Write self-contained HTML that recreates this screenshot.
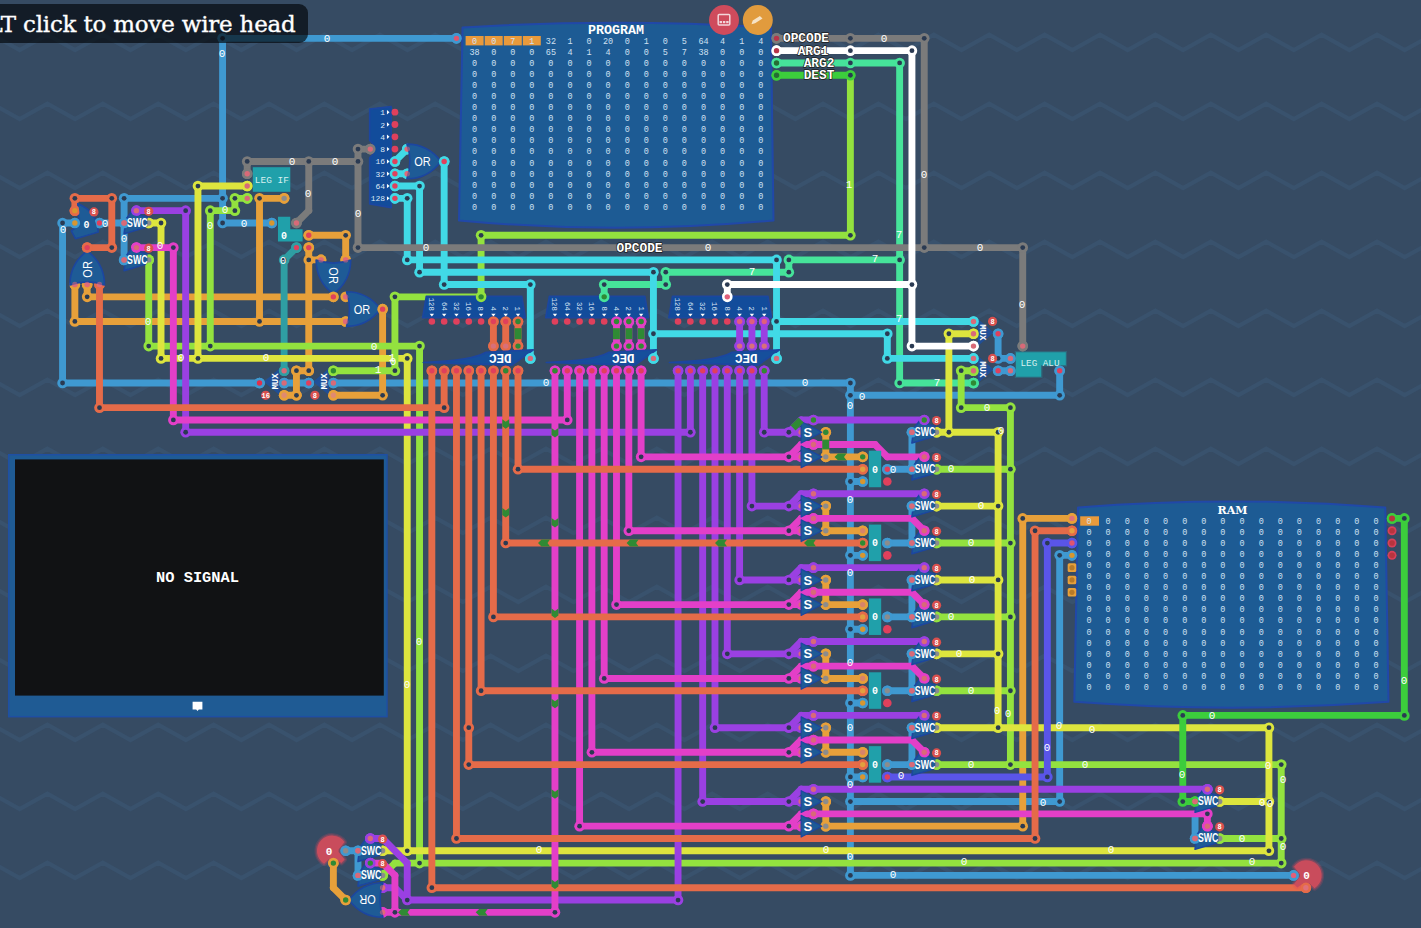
<!DOCTYPE html>
<html><head><meta charset="utf-8"><title>Turing Complete</title>
<style>
html,body{margin:0;padding:0;background:#364b63;overflow:hidden}
body{width:1421px;height:928px;position:relative;font-family:"Liberation Sans",sans-serif}
svg{position:absolute;left:0;top:0;display:block}
.mono{font-family:"Liberation Mono","DejaVu Sans Mono",monospace}
.sans{font-family:"Liberation Sans",sans-serif}
.serif{font-family:"DejaVu Serif","Liberation Serif",serif}
#tip{position:absolute;left:-14px;top:4px;width:322px;height:39px;background:rgba(2,4,8,0.66);border-radius:9px;color:#fff;
font-family:"DejaVu Serif","Liberation Serif",serif;font-size:22.97px;line-height:40px;-webkit-text-stroke:0.35px #fff;white-space:nowrap;box-sizing:border-box;padding-left:1.6px;letter-spacing:-0.2px}
</style></head><body>
<svg width="1421" height="928" viewBox="0 0 1421 928">
<rect width="1421" height="928" fill="#364b63"/>
<g fill="none" stroke="#39526d" stroke-width="4.2" stroke-linejoin="miter"><polyline points="-63.4,-34.3 -35.7,-18.8 -8.0,-34.3 19.7,-18.8 47.4,-34.3 75.1,-18.8 102.8,-34.3 130.5,-18.8 158.2,-34.3 185.9,-18.8 213.6,-34.3 241.3,-18.8 269.0,-34.3 296.7,-18.8 324.4,-34.3 352.1,-18.8 379.8,-34.3 407.5,-18.8 435.2,-34.3 462.9,-18.8 490.6,-34.3 518.3,-18.8 546.0,-34.3 573.7,-18.8 601.4,-34.3 629.1,-18.8 656.8,-34.3 684.5,-18.8 712.2,-34.3 739.9,-18.8 767.6,-34.3 795.3,-18.8 823.0,-34.3 850.7,-18.8 878.4,-34.3 906.1,-18.8 933.8,-34.3 961.5,-18.8 989.2,-34.3 1016.9,-18.8 1044.6,-34.3 1072.3,-18.8 1100.0,-34.3 1127.7,-18.8 1155.4,-34.3 1183.1,-18.8 1210.8,-34.3 1238.5,-18.8 1266.2,-34.3 1293.9,-18.8 1321.6,-34.3 1349.3,-18.8 1377.0,-34.3 1404.7,-18.8 1432.4,-34.3 1460.1,-18.8"/><polyline points="-63.4,34.7 -35.7,50.2 -8.0,34.7 19.7,50.2 47.4,34.7 75.1,50.2 102.8,34.7 130.5,50.2 158.2,34.7 185.9,50.2 213.6,34.7 241.3,50.2 269.0,34.7 296.7,50.2 324.4,34.7 352.1,50.2 379.8,34.7 407.5,50.2 435.2,34.7 462.9,50.2 490.6,34.7 518.3,50.2 546.0,34.7 573.7,50.2 601.4,34.7 629.1,50.2 656.8,34.7 684.5,50.2 712.2,34.7 739.9,50.2 767.6,34.7 795.3,50.2 823.0,34.7 850.7,50.2 878.4,34.7 906.1,50.2 933.8,34.7 961.5,50.2 989.2,34.7 1016.9,50.2 1044.6,34.7 1072.3,50.2 1100.0,34.7 1127.7,50.2 1155.4,34.7 1183.1,50.2 1210.8,34.7 1238.5,50.2 1266.2,34.7 1293.9,50.2 1321.6,34.7 1349.3,50.2 1377.0,34.7 1404.7,50.2 1432.4,34.7 1460.1,50.2"/><polyline points="-63.4,103.7 -35.7,119.2 -8.0,103.7 19.7,119.2 47.4,103.7 75.1,119.2 102.8,103.7 130.5,119.2 158.2,103.7 185.9,119.2 213.6,103.7 241.3,119.2 269.0,103.7 296.7,119.2 324.4,103.7 352.1,119.2 379.8,103.7 407.5,119.2 435.2,103.7 462.9,119.2 490.6,103.7 518.3,119.2 546.0,103.7 573.7,119.2 601.4,103.7 629.1,119.2 656.8,103.7 684.5,119.2 712.2,103.7 739.9,119.2 767.6,103.7 795.3,119.2 823.0,103.7 850.7,119.2 878.4,103.7 906.1,119.2 933.8,103.7 961.5,119.2 989.2,103.7 1016.9,119.2 1044.6,103.7 1072.3,119.2 1100.0,103.7 1127.7,119.2 1155.4,103.7 1183.1,119.2 1210.8,103.7 1238.5,119.2 1266.2,103.7 1293.9,119.2 1321.6,103.7 1349.3,119.2 1377.0,103.7 1404.7,119.2 1432.4,103.7 1460.1,119.2"/><polyline points="-63.4,172.7 -35.7,188.2 -8.0,172.7 19.7,188.2 47.4,172.7 75.1,188.2 102.8,172.7 130.5,188.2 158.2,172.7 185.9,188.2 213.6,172.7 241.3,188.2 269.0,172.7 296.7,188.2 324.4,172.7 352.1,188.2 379.8,172.7 407.5,188.2 435.2,172.7 462.9,188.2 490.6,172.7 518.3,188.2 546.0,172.7 573.7,188.2 601.4,172.7 629.1,188.2 656.8,172.7 684.5,188.2 712.2,172.7 739.9,188.2 767.6,172.7 795.3,188.2 823.0,172.7 850.7,188.2 878.4,172.7 906.1,188.2 933.8,172.7 961.5,188.2 989.2,172.7 1016.9,188.2 1044.6,172.7 1072.3,188.2 1100.0,172.7 1127.7,188.2 1155.4,172.7 1183.1,188.2 1210.8,172.7 1238.5,188.2 1266.2,172.7 1293.9,188.2 1321.6,172.7 1349.3,188.2 1377.0,172.7 1404.7,188.2 1432.4,172.7 1460.1,188.2"/><polyline points="-63.4,241.7 -35.7,257.2 -8.0,241.7 19.7,257.2 47.4,241.7 75.1,257.2 102.8,241.7 130.5,257.2 158.2,241.7 185.9,257.2 213.6,241.7 241.3,257.2 269.0,241.7 296.7,257.2 324.4,241.7 352.1,257.2 379.8,241.7 407.5,257.2 435.2,241.7 462.9,257.2 490.6,241.7 518.3,257.2 546.0,241.7 573.7,257.2 601.4,241.7 629.1,257.2 656.8,241.7 684.5,257.2 712.2,241.7 739.9,257.2 767.6,241.7 795.3,257.2 823.0,241.7 850.7,257.2 878.4,241.7 906.1,257.2 933.8,241.7 961.5,257.2 989.2,241.7 1016.9,257.2 1044.6,241.7 1072.3,257.2 1100.0,241.7 1127.7,257.2 1155.4,241.7 1183.1,257.2 1210.8,241.7 1238.5,257.2 1266.2,241.7 1293.9,257.2 1321.6,241.7 1349.3,257.2 1377.0,241.7 1404.7,257.2 1432.4,241.7 1460.1,257.2"/><polyline points="-63.4,310.7 -35.7,326.2 -8.0,310.7 19.7,326.2 47.4,310.7 75.1,326.2 102.8,310.7 130.5,326.2 158.2,310.7 185.9,326.2 213.6,310.7 241.3,326.2 269.0,310.7 296.7,326.2 324.4,310.7 352.1,326.2 379.8,310.7 407.5,326.2 435.2,310.7 462.9,326.2 490.6,310.7 518.3,326.2 546.0,310.7 573.7,326.2 601.4,310.7 629.1,326.2 656.8,310.7 684.5,326.2 712.2,310.7 739.9,326.2 767.6,310.7 795.3,326.2 823.0,310.7 850.7,326.2 878.4,310.7 906.1,326.2 933.8,310.7 961.5,326.2 989.2,310.7 1016.9,326.2 1044.6,310.7 1072.3,326.2 1100.0,310.7 1127.7,326.2 1155.4,310.7 1183.1,326.2 1210.8,310.7 1238.5,326.2 1266.2,310.7 1293.9,326.2 1321.6,310.7 1349.3,326.2 1377.0,310.7 1404.7,326.2 1432.4,310.7 1460.1,326.2"/><polyline points="-63.4,379.7 -35.7,395.2 -8.0,379.7 19.7,395.2 47.4,379.7 75.1,395.2 102.8,379.7 130.5,395.2 158.2,379.7 185.9,395.2 213.6,379.7 241.3,395.2 269.0,379.7 296.7,395.2 324.4,379.7 352.1,395.2 379.8,379.7 407.5,395.2 435.2,379.7 462.9,395.2 490.6,379.7 518.3,395.2 546.0,379.7 573.7,395.2 601.4,379.7 629.1,395.2 656.8,379.7 684.5,395.2 712.2,379.7 739.9,395.2 767.6,379.7 795.3,395.2 823.0,379.7 850.7,395.2 878.4,379.7 906.1,395.2 933.8,379.7 961.5,395.2 989.2,379.7 1016.9,395.2 1044.6,379.7 1072.3,395.2 1100.0,379.7 1127.7,395.2 1155.4,379.7 1183.1,395.2 1210.8,379.7 1238.5,395.2 1266.2,379.7 1293.9,395.2 1321.6,379.7 1349.3,395.2 1377.0,379.7 1404.7,395.2 1432.4,379.7 1460.1,395.2"/><polyline points="-63.4,448.7 -35.7,464.2 -8.0,448.7 19.7,464.2 47.4,448.7 75.1,464.2 102.8,448.7 130.5,464.2 158.2,448.7 185.9,464.2 213.6,448.7 241.3,464.2 269.0,448.7 296.7,464.2 324.4,448.7 352.1,464.2 379.8,448.7 407.5,464.2 435.2,448.7 462.9,464.2 490.6,448.7 518.3,464.2 546.0,448.7 573.7,464.2 601.4,448.7 629.1,464.2 656.8,448.7 684.5,464.2 712.2,448.7 739.9,464.2 767.6,448.7 795.3,464.2 823.0,448.7 850.7,464.2 878.4,448.7 906.1,464.2 933.8,448.7 961.5,464.2 989.2,448.7 1016.9,464.2 1044.6,448.7 1072.3,464.2 1100.0,448.7 1127.7,464.2 1155.4,448.7 1183.1,464.2 1210.8,448.7 1238.5,464.2 1266.2,448.7 1293.9,464.2 1321.6,448.7 1349.3,464.2 1377.0,448.7 1404.7,464.2 1432.4,448.7 1460.1,464.2"/><polyline points="-63.4,517.7 -35.7,533.2 -8.0,517.7 19.7,533.2 47.4,517.7 75.1,533.2 102.8,517.7 130.5,533.2 158.2,517.7 185.9,533.2 213.6,517.7 241.3,533.2 269.0,517.7 296.7,533.2 324.4,517.7 352.1,533.2 379.8,517.7 407.5,533.2 435.2,517.7 462.9,533.2 490.6,517.7 518.3,533.2 546.0,517.7 573.7,533.2 601.4,517.7 629.1,533.2 656.8,517.7 684.5,533.2 712.2,517.7 739.9,533.2 767.6,517.7 795.3,533.2 823.0,517.7 850.7,533.2 878.4,517.7 906.1,533.2 933.8,517.7 961.5,533.2 989.2,517.7 1016.9,533.2 1044.6,517.7 1072.3,533.2 1100.0,517.7 1127.7,533.2 1155.4,517.7 1183.1,533.2 1210.8,517.7 1238.5,533.2 1266.2,517.7 1293.9,533.2 1321.6,517.7 1349.3,533.2 1377.0,517.7 1404.7,533.2 1432.4,517.7 1460.1,533.2"/><polyline points="-63.4,586.7 -35.7,602.2 -8.0,586.7 19.7,602.2 47.4,586.7 75.1,602.2 102.8,586.7 130.5,602.2 158.2,586.7 185.9,602.2 213.6,586.7 241.3,602.2 269.0,586.7 296.7,602.2 324.4,586.7 352.1,602.2 379.8,586.7 407.5,602.2 435.2,586.7 462.9,602.2 490.6,586.7 518.3,602.2 546.0,586.7 573.7,602.2 601.4,586.7 629.1,602.2 656.8,586.7 684.5,602.2 712.2,586.7 739.9,602.2 767.6,586.7 795.3,602.2 823.0,586.7 850.7,602.2 878.4,586.7 906.1,602.2 933.8,586.7 961.5,602.2 989.2,586.7 1016.9,602.2 1044.6,586.7 1072.3,602.2 1100.0,586.7 1127.7,602.2 1155.4,586.7 1183.1,602.2 1210.8,586.7 1238.5,602.2 1266.2,586.7 1293.9,602.2 1321.6,586.7 1349.3,602.2 1377.0,586.7 1404.7,602.2 1432.4,586.7 1460.1,602.2"/><polyline points="-63.4,655.7 -35.7,671.2 -8.0,655.7 19.7,671.2 47.4,655.7 75.1,671.2 102.8,655.7 130.5,671.2 158.2,655.7 185.9,671.2 213.6,655.7 241.3,671.2 269.0,655.7 296.7,671.2 324.4,655.7 352.1,671.2 379.8,655.7 407.5,671.2 435.2,655.7 462.9,671.2 490.6,655.7 518.3,671.2 546.0,655.7 573.7,671.2 601.4,655.7 629.1,671.2 656.8,655.7 684.5,671.2 712.2,655.7 739.9,671.2 767.6,655.7 795.3,671.2 823.0,655.7 850.7,671.2 878.4,655.7 906.1,671.2 933.8,655.7 961.5,671.2 989.2,655.7 1016.9,671.2 1044.6,655.7 1072.3,671.2 1100.0,655.7 1127.7,671.2 1155.4,655.7 1183.1,671.2 1210.8,655.7 1238.5,671.2 1266.2,655.7 1293.9,671.2 1321.6,655.7 1349.3,671.2 1377.0,655.7 1404.7,671.2 1432.4,655.7 1460.1,671.2"/><polyline points="-63.4,724.7 -35.7,740.2 -8.0,724.7 19.7,740.2 47.4,724.7 75.1,740.2 102.8,724.7 130.5,740.2 158.2,724.7 185.9,740.2 213.6,724.7 241.3,740.2 269.0,724.7 296.7,740.2 324.4,724.7 352.1,740.2 379.8,724.7 407.5,740.2 435.2,724.7 462.9,740.2 490.6,724.7 518.3,740.2 546.0,724.7 573.7,740.2 601.4,724.7 629.1,740.2 656.8,724.7 684.5,740.2 712.2,724.7 739.9,740.2 767.6,724.7 795.3,740.2 823.0,724.7 850.7,740.2 878.4,724.7 906.1,740.2 933.8,724.7 961.5,740.2 989.2,724.7 1016.9,740.2 1044.6,724.7 1072.3,740.2 1100.0,724.7 1127.7,740.2 1155.4,724.7 1183.1,740.2 1210.8,724.7 1238.5,740.2 1266.2,724.7 1293.9,740.2 1321.6,724.7 1349.3,740.2 1377.0,724.7 1404.7,740.2 1432.4,724.7 1460.1,740.2"/><polyline points="-63.4,793.7 -35.7,809.2 -8.0,793.7 19.7,809.2 47.4,793.7 75.1,809.2 102.8,793.7 130.5,809.2 158.2,793.7 185.9,809.2 213.6,793.7 241.3,809.2 269.0,793.7 296.7,809.2 324.4,793.7 352.1,809.2 379.8,793.7 407.5,809.2 435.2,793.7 462.9,809.2 490.6,793.7 518.3,809.2 546.0,793.7 573.7,809.2 601.4,793.7 629.1,809.2 656.8,793.7 684.5,809.2 712.2,793.7 739.9,809.2 767.6,793.7 795.3,809.2 823.0,793.7 850.7,809.2 878.4,793.7 906.1,809.2 933.8,793.7 961.5,809.2 989.2,793.7 1016.9,809.2 1044.6,793.7 1072.3,809.2 1100.0,793.7 1127.7,809.2 1155.4,793.7 1183.1,809.2 1210.8,793.7 1238.5,809.2 1266.2,793.7 1293.9,809.2 1321.6,793.7 1349.3,809.2 1377.0,793.7 1404.7,809.2 1432.4,793.7 1460.1,809.2"/><polyline points="-63.4,862.7 -35.7,878.2 -8.0,862.7 19.7,878.2 47.4,862.7 75.1,878.2 102.8,862.7 130.5,878.2 158.2,862.7 185.9,878.2 213.6,862.7 241.3,878.2 269.0,862.7 296.7,878.2 324.4,862.7 352.1,878.2 379.8,862.7 407.5,878.2 435.2,862.7 462.9,878.2 490.6,862.7 518.3,878.2 546.0,862.7 573.7,878.2 601.4,862.7 629.1,878.2 656.8,862.7 684.5,878.2 712.2,862.7 739.9,878.2 767.6,862.7 795.3,878.2 823.0,862.7 850.7,878.2 878.4,862.7 906.1,878.2 933.8,862.7 961.5,878.2 989.2,862.7 1016.9,878.2 1044.6,862.7 1072.3,878.2 1100.0,862.7 1127.7,878.2 1155.4,862.7 1183.1,878.2 1210.8,862.7 1238.5,878.2 1266.2,862.7 1293.9,878.2 1321.6,862.7 1349.3,878.2 1377.0,862.7 1404.7,878.2 1432.4,862.7 1460.1,878.2"/><polyline points="-63.4,931.7 -35.7,947.2 -8.0,931.7 19.7,947.2 47.4,931.7 75.1,947.2 102.8,931.7 130.5,947.2 158.2,931.7 185.9,947.2 213.6,931.7 241.3,947.2 269.0,931.7 296.7,947.2 324.4,931.7 352.1,947.2 379.8,931.7 407.5,947.2 435.2,931.7 462.9,947.2 490.6,931.7 518.3,947.2 546.0,931.7 573.7,947.2 601.4,931.7 629.1,947.2 656.8,931.7 684.5,947.2 712.2,931.7 739.9,947.2 767.6,931.7 795.3,947.2 823.0,931.7 850.7,947.2 878.4,931.7 906.1,947.2 933.8,931.7 961.5,947.2 989.2,931.7 1016.9,947.2 1044.6,931.7 1072.3,947.2 1100.0,931.7 1127.7,947.2 1155.4,931.7 1183.1,947.2 1210.8,931.7 1238.5,947.2 1266.2,931.7 1293.9,947.2 1321.6,931.7 1349.3,947.2 1377.0,931.7 1404.7,947.2 1432.4,931.7 1460.1,947.2"/></g>
<g fill="none" stroke-width="6.9" stroke-linecap="round">
<path stroke="#3f99d1" d="M456.47 38.33L222.58 38.33"/>
<path stroke="#3f99d1" d="M222.58 38.33L222.58 222.98"/>
<path stroke="#3f99d1" d="M222.58 222.98L271.82 222.98"/>
<path stroke="#3f99d1" d="M222.58 198.36L124.1 198.36"/>
<path stroke="#3f99d1" d="M124.1 198.36L124.1 259.91"/>
<path stroke="#3f99d1" d="M74.86 222.98L62.55 222.98"/>
<path stroke="#3f99d1" d="M62.55 222.98L62.55 383.01"/>
<path stroke="#3f99d1" d="M62.55 383.01L259.51 383.01"/>
<path stroke="#3f99d1" d="M99.48 222.98L124.1 222.98"/>
<path stroke="#3f99d1" d="M284.13 383.01L308.75 383.01"/>
<path stroke="#3f99d1" d="M333.37 383.01L850.39 383.01"/>
<path stroke="#3f99d1" d="M850.39 383.01L850.39 875.41"/>
<path stroke="#3f99d1" d="M850.39 875.41L1293.55 875.41"/>
<path stroke="#3f99d1" d="M850.39 395.32L1059.66 395.32"/>
<path stroke="#3f99d1" d="M1059.66 395.32L1059.66 370.7"/>
<path stroke="#3f99d1" d="M850.39 481.49L862.7 481.49"/>
<path stroke="#3f99d1" d="M887.32 469.18L911.94 469.18"/>
<path stroke="#3f99d1" d="M911.94 432.25L911.94 469.18"/>
<path stroke="#3f99d1" d="M850.39 555.35L862.7 555.35"/>
<path stroke="#3f99d1" d="M887.32 543.04L911.94 543.04"/>
<path stroke="#3f99d1" d="M911.94 506.11L911.94 543.04"/>
<path stroke="#3f99d1" d="M850.39 629.21L862.7 629.21"/>
<path stroke="#3f99d1" d="M887.32 616.9L911.94 616.9"/>
<path stroke="#3f99d1" d="M911.94 579.97L911.94 616.9"/>
<path stroke="#3f99d1" d="M850.39 703.07L862.7 703.07"/>
<path stroke="#3f99d1" d="M887.32 690.76L911.94 690.76"/>
<path stroke="#3f99d1" d="M911.94 653.83L911.94 690.76"/>
<path stroke="#3f99d1" d="M850.39 776.93L862.7 776.93"/>
<path stroke="#3f99d1" d="M887.32 764.62L911.94 764.62"/>
<path stroke="#3f99d1" d="M911.94 727.69L911.94 764.62"/>
<path stroke="#3f99d1" d="M850.39 801.55L1059.66 801.55"/>
<path stroke="#3f99d1" d="M1059.66 801.55L1059.66 555.35"/>
<path stroke="#3f99d1" d="M1059.66 555.35L1071.97 555.35"/>
<path stroke="#3f99d1" d="M998.11 333.77L998.11 358.39"/>
<path stroke="#3f99d1" d="M998.11 358.39L1010.42 358.39"/>
<path stroke="#3f99d1" d="M998.11 370.7L1010.42 370.7"/>
<path stroke="#3f99d1" d="M345.68 850.79L357.99 850.79"/>
<path stroke="#3f99d1" d="M357.99 850.79L357.99 875.41"/>
<path stroke="#3f99d1" d="M1195.07 813.86L1195.07 838.48"/>
<path stroke="#e7a03a" d="M74.86 284.53L74.86 321.46"/>
<path stroke="#e7a03a" d="M74.86 321.46L259.51 321.46"/>
<path stroke="#e7a03a" d="M259.51 321.46L345.68 321.46"/>
<path stroke="#e7a03a" d="M259.51 321.46L259.51 198.36"/>
<path stroke="#e7a03a" d="M259.51 198.36L284.13 198.36"/>
<path stroke="#e7a03a" d="M87.17 284.53L87.17 296.84"/>
<path stroke="#e7a03a" d="M87.17 296.84L333.37 296.84"/>
<path stroke="#e7a03a" d="M308.75 235.29L345.68 235.29"/>
<path stroke="#e7a03a" d="M345.68 235.29L345.68 259.91"/>
<path stroke="#e7a03a" d="M308.75 247.6L308.75 259.91"/>
<path stroke="#e7a03a" d="M308.75 259.91L308.75 370.7"/>
<path stroke="#e7a03a" d="M308.75 370.7L296.44 370.7"/>
<path stroke="#e7a03a" d="M296.44 370.7L296.44 395.32"/>
<path stroke="#e7a03a" d="M296.44 395.32L284.13 395.32"/>
<path stroke="#e7a03a" d="M308.75 259.91L321.06 259.91"/>
<path stroke="#e7a03a" d="M382.61 309.15L382.61 395.32"/>
<path stroke="#e7a03a" d="M382.61 395.32L333.37 395.32"/>
<path stroke="#e7a03a" d="M333.37 863.1L333.37 887.72"/>
<path stroke="#e7a03a" d="M333.37 887.72L345.68 900.03"/>
<path stroke="#e7a03a" d="M1022.73 518.42L1071.97 518.42"/>
<path stroke="#e7a03a" d="M1022.73 518.42L1022.73 826.17"/>
<path stroke="#e7a03a" d="M1022.73 826.17L825.77 826.17"/>
<path stroke="#e7a03a" d="M825.77 432.25L825.77 456.87"/>
<path stroke="#e7a03a" d="M825.77 456.87L862.7 456.87"/>
<path stroke="#e7a03a" d="M825.77 506.11L825.77 530.73"/>
<path stroke="#e7a03a" d="M825.77 530.73L862.7 530.73"/>
<path stroke="#e7a03a" d="M825.77 579.97L825.77 604.59"/>
<path stroke="#e7a03a" d="M825.77 604.59L862.7 604.59"/>
<path stroke="#e7a03a" d="M825.77 653.83L825.77 678.45"/>
<path stroke="#e7a03a" d="M825.77 678.45L862.7 678.45"/>
<path stroke="#e7a03a" d="M825.77 727.69L825.77 752.31"/>
<path stroke="#e7a03a" d="M825.77 752.31L862.7 752.31"/>
<path stroke="#e7a03a" d="M825.77 801.55L825.77 826.17"/>
<path stroke="#2f9ea3" d="M296.44 247.6L284.13 259.91"/>
<path stroke="#2f9ea3" d="M284.13 259.91L284.13 370.7"/>
<path stroke="#46e39a" d="M776.53 62.95L850.39 62.95"/>
<path stroke="#46e39a" d="M850.39 62.95L899.63 62.95"/>
<path stroke="#46e39a" d="M899.63 62.95L899.63 259.91"/>
<path stroke="#46e39a" d="M899.63 259.91L899.63 383.01"/>
<path stroke="#46e39a" d="M899.63 383.01L973.49 383.01"/>
<path stroke="#46e39a" d="M899.63 259.91L788.84 259.91"/>
<path stroke="#46e39a" d="M788.84 259.91L788.84 272.22"/>
<path stroke="#46e39a" d="M788.84 272.22L665.74 272.22"/>
<path stroke="#46e39a" d="M665.74 272.22L665.74 284.53"/>
<path stroke="#46e39a" d="M665.74 284.53L604.19 284.53"/>
<path stroke="#46e39a" d="M604.19 284.53L604.19 296.84"/>
<path stroke="#93e23f" d="M850.39 75.26L850.39 235.29"/>
<path stroke="#93e23f" d="M850.39 235.29L481.09 235.29"/>
<path stroke="#93e23f" d="M481.09 235.29L481.09 296.84"/>
<path stroke="#93e23f" d="M247.2 198.36L234.89 198.36"/>
<path stroke="#93e23f" d="M234.89 198.36L234.89 210.67"/>
<path stroke="#93e23f" d="M234.89 210.67L210.27 210.67"/>
<path stroke="#93e23f" d="M210.27 210.67L210.27 346.08"/>
<path stroke="#93e23f" d="M148.72 259.91L148.72 346.08"/>
<path stroke="#93e23f" d="M148.72 346.08L210.27 346.08"/>
<path stroke="#93e23f" d="M210.27 346.08L419.54 346.08"/>
<path stroke="#93e23f" d="M419.54 346.08L419.54 863.1"/>
<path stroke="#93e23f" d="M382.61 875.41L394.92 863.1"/>
<path stroke="#93e23f" d="M394.92 863.1L419.54 863.1"/>
<path stroke="#93e23f" d="M419.54 863.1L1281.24 863.1"/>
<path stroke="#93e23f" d="M1281.24 863.1L1281.24 838.48"/>
<path stroke="#93e23f" d="M1281.24 838.48L1281.24 764.62"/>
<path stroke="#93e23f" d="M1281.24 764.62L1010.42 764.62"/>
<path stroke="#93e23f" d="M1010.42 764.62L936.56 764.62"/>
<path stroke="#93e23f" d="M1281.24 838.48L1219.69 838.48"/>
<path stroke="#93e23f" d="M973.49 370.7L961.18 370.7"/>
<path stroke="#93e23f" d="M961.18 370.7L961.18 407.63"/>
<path stroke="#93e23f" d="M961.18 407.63L1010.42 407.63"/>
<path stroke="#93e23f" d="M1010.42 407.63L1010.42 469.18"/>
<path stroke="#93e23f" d="M1010.42 469.18L1010.42 543.04"/>
<path stroke="#93e23f" d="M1010.42 543.04L1010.42 616.9"/>
<path stroke="#93e23f" d="M1010.42 616.9L1010.42 690.76"/>
<path stroke="#93e23f" d="M1010.42 690.76L1010.42 764.62"/>
<path stroke="#93e23f" d="M936.56 469.18L1010.42 469.18"/>
<path stroke="#93e23f" d="M936.56 543.04L1010.42 543.04"/>
<path stroke="#93e23f" d="M936.56 616.9L1010.42 616.9"/>
<path stroke="#93e23f" d="M936.56 690.76L1010.42 690.76"/>
<path stroke="#41d9e6" d="M394.92 161.43L407.23 149.12"/>
<path stroke="#41d9e6" d="M394.92 173.74L407.23 173.74"/>
<path stroke="#41d9e6" d="M394.92 186.05L419.54 186.05"/>
<path stroke="#41d9e6" d="M419.54 186.05L419.54 272.22"/>
<path stroke="#41d9e6" d="M419.54 272.22L653.43 272.22"/>
<path stroke="#41d9e6" d="M653.43 272.22L653.43 333.77"/>
<path stroke="#41d9e6" d="M653.43 333.77L653.43 358.39"/>
<path stroke="#41d9e6" d="M653.43 333.77L887.32 333.77"/>
<path stroke="#41d9e6" d="M887.32 333.77L887.32 358.39"/>
<path stroke="#41d9e6" d="M887.32 358.39L973.49 358.39"/>
<path stroke="#41d9e6" d="M394.92 198.36L407.23 198.36"/>
<path stroke="#41d9e6" d="M407.23 198.36L407.23 259.91"/>
<path stroke="#41d9e6" d="M407.23 259.91L776.53 259.91"/>
<path stroke="#41d9e6" d="M776.53 259.91L776.53 321.46"/>
<path stroke="#41d9e6" d="M776.53 321.46L776.53 358.39"/>
<path stroke="#41d9e6" d="M776.53 321.46L973.49 321.46"/>
<path stroke="#41d9e6" d="M444.16 161.43L444.16 284.53"/>
<path stroke="#41d9e6" d="M444.16 284.53L530.33 284.53"/>
<path stroke="#41d9e6" d="M530.33 284.53L530.33 358.39"/>
<path stroke="#dde53e" d="M247.2 186.05L197.96 186.05"/>
<path stroke="#dde53e" d="M197.96 186.05L197.96 358.39"/>
<path stroke="#dde53e" d="M148.72 222.98L161.03 222.98"/>
<path stroke="#dde53e" d="M161.03 222.98L161.03 358.39"/>
<path stroke="#dde53e" d="M161.03 358.39L197.96 358.39"/>
<path stroke="#dde53e" d="M197.96 358.39L407.23 358.39"/>
<path stroke="#dde53e" d="M407.23 358.39L407.23 850.79"/>
<path stroke="#dde53e" d="M382.61 850.79L407.23 850.79"/>
<path stroke="#dde53e" d="M407.23 850.79L1268.93 850.79"/>
<path stroke="#dde53e" d="M1268.93 850.79L1268.93 801.55"/>
<path stroke="#dde53e" d="M1268.93 801.55L1268.93 727.69"/>
<path stroke="#dde53e" d="M1268.93 727.69L998.11 727.69"/>
<path stroke="#dde53e" d="M1219.69 801.55L1268.93 801.55"/>
<path stroke="#dde53e" d="M973.49 333.77L948.87 333.77"/>
<path stroke="#dde53e" d="M948.87 333.77L948.87 432.25"/>
<path stroke="#dde53e" d="M936.56 432.25L948.87 432.25"/>
<path stroke="#dde53e" d="M948.87 432.25L998.11 432.25"/>
<path stroke="#dde53e" d="M998.11 432.25L998.11 506.11"/>
<path stroke="#dde53e" d="M998.11 506.11L998.11 579.97"/>
<path stroke="#dde53e" d="M998.11 579.97L998.11 653.83"/>
<path stroke="#dde53e" d="M998.11 653.83L998.11 727.69"/>
<path stroke="#dde53e" d="M936.56 506.11L998.11 506.11"/>
<path stroke="#dde53e" d="M936.56 579.97L998.11 579.97"/>
<path stroke="#dde53e" d="M936.56 653.83L998.11 653.83"/>
<path stroke="#dde53e" d="M936.56 727.69L998.11 727.69"/>
<path stroke="#93e23f" d="M481.09 296.84L394.92 296.84"/>
<path stroke="#93e23f" d="M394.92 296.84L394.92 370.7"/>
<path stroke="#93e23f" d="M394.92 370.7L333.37 370.7"/>
<path stroke="#3ccd3c" d="M776.53 75.26L850.39 75.26"/>
<path stroke="#3ccd3c" d="M1392.03 518.42L1404.34 518.42"/>
<path stroke="#3ccd3c" d="M1404.34 518.42L1404.34 715.38"/>
<path stroke="#3ccd3c" d="M1404.34 715.38L1182.76 715.38"/>
<path stroke="#3ccd3c" d="M1182.76 715.38L1182.76 801.55"/>
<path stroke="#3ccd3c" d="M1182.76 801.55L1195.07 801.55"/>
<path stroke="#5a55e8" d="M1047.35 543.04L1071.97 543.04"/>
<path stroke="#5a55e8" d="M1047.35 543.04L1047.35 776.93"/>
<path stroke="#5a55e8" d="M1047.35 776.93L887.32 776.93"/>
<path stroke="#9a40e2" d="M136.41 210.67L185.65 210.67"/>
<path stroke="#9a40e2" d="M185.65 210.67L185.65 432.25"/>
<path stroke="#9a40e2" d="M185.65 432.25L690.36 432.25"/>
<path stroke="#9a40e2" d="M690.36 432.25L690.36 370.7"/>
<path stroke="#9a40e2" d="M678.05 370.7L678.05 900.03"/>
<path stroke="#9a40e2" d="M678.05 900.03L407.23 900.03"/>
<path stroke="#9a40e2" d="M407.23 900.03L407.23 863.1"/>
<path stroke="#9a40e2" d="M407.23 863.1L382.61 838.48"/>
<path stroke="#9a40e2" d="M382.61 838.48L370.3 838.48"/>
<path stroke="#9a40e2" d="M382.61 887.72L394.92 887.72"/>
<path stroke="#9a40e2" d="M394.92 887.72L407.23 900.03"/>
<path stroke="#9a40e2" d="M764.22 370.7L764.22 432.25"/>
<path stroke="#9a40e2" d="M764.22 432.25L788.84 432.25"/>
<path stroke="#9a40e2" d="M788.84 432.25L801.15 432.25"/>
<path stroke="#9a40e2" d="M788.84 432.25L801.15 419.94"/>
<path stroke="#9a40e2" d="M801.15 419.94L813.46 419.94"/>
<path stroke="#9a40e2" d="M813.46 419.94L924.25 419.94"/>
<path stroke="#9a40e2" d="M751.91 370.7L751.91 506.11"/>
<path stroke="#9a40e2" d="M751.91 506.11L788.84 506.11"/>
<path stroke="#9a40e2" d="M788.84 506.11L801.15 506.11"/>
<path stroke="#9a40e2" d="M788.84 506.11L801.15 493.8"/>
<path stroke="#9a40e2" d="M801.15 493.8L813.46 493.8"/>
<path stroke="#9a40e2" d="M813.46 493.8L924.25 493.8"/>
<path stroke="#9a40e2" d="M739.6 370.7L739.6 579.97"/>
<path stroke="#9a40e2" d="M739.6 579.97L788.84 579.97"/>
<path stroke="#9a40e2" d="M788.84 579.97L801.15 579.97"/>
<path stroke="#9a40e2" d="M788.84 579.97L801.15 567.66"/>
<path stroke="#9a40e2" d="M801.15 567.66L813.46 567.66"/>
<path stroke="#9a40e2" d="M813.46 567.66L924.25 567.66"/>
<path stroke="#9a40e2" d="M727.29 370.7L727.29 653.83"/>
<path stroke="#9a40e2" d="M727.29 653.83L788.84 653.83"/>
<path stroke="#9a40e2" d="M788.84 653.83L801.15 653.83"/>
<path stroke="#9a40e2" d="M788.84 653.83L801.15 641.52"/>
<path stroke="#9a40e2" d="M801.15 641.52L813.46 641.52"/>
<path stroke="#9a40e2" d="M813.46 641.52L924.25 641.52"/>
<path stroke="#9a40e2" d="M714.98 370.7L714.98 727.69"/>
<path stroke="#9a40e2" d="M714.98 727.69L788.84 727.69"/>
<path stroke="#9a40e2" d="M788.84 727.69L801.15 727.69"/>
<path stroke="#9a40e2" d="M788.84 727.69L801.15 715.38"/>
<path stroke="#9a40e2" d="M801.15 715.38L813.46 715.38"/>
<path stroke="#9a40e2" d="M813.46 715.38L924.25 715.38"/>
<path stroke="#9a40e2" d="M702.67 370.7L702.67 801.55"/>
<path stroke="#9a40e2" d="M702.67 801.55L788.84 801.55"/>
<path stroke="#9a40e2" d="M788.84 801.55L801.15 801.55"/>
<path stroke="#9a40e2" d="M788.84 801.55L801.15 789.24"/>
<path stroke="#9a40e2" d="M801.15 789.24L813.46 789.24"/>
<path stroke="#9a40e2" d="M813.46 789.24L1207.38 789.24"/>
<path stroke="#9a40e2" d="M739.6 321.46L739.6 346.08"/>
<path stroke="#9a40e2" d="M751.91 321.46L751.91 346.08"/>
<path stroke="#9a40e2" d="M764.22 321.46L764.22 346.08"/>
<path stroke="#e33fc8" d="M136.41 247.6L173.34 247.6"/>
<path stroke="#e33fc8" d="M173.34 247.6L173.34 419.94"/>
<path stroke="#e33fc8" d="M173.34 419.94L567.26 419.94"/>
<path stroke="#e33fc8" d="M567.26 419.94L567.26 370.7"/>
<path stroke="#e33fc8" d="M554.95 370.7L554.95 912.34"/>
<path stroke="#e33fc8" d="M554.95 912.34L394.92 912.34"/>
<path stroke="#e33fc8" d="M394.92 912.34L394.92 875.41"/>
<path stroke="#e33fc8" d="M394.92 875.41L382.61 863.1"/>
<path stroke="#e33fc8" d="M382.61 863.1L370.3 863.1"/>
<path stroke="#e33fc8" d="M382.61 912.34L394.92 912.34"/>
<path stroke="#e33fc8" d="M641.12 370.7L641.12 456.87"/>
<path stroke="#e33fc8" d="M641.12 456.87L788.84 456.87"/>
<path stroke="#e33fc8" d="M788.84 456.87L801.15 456.87"/>
<path stroke="#e33fc8" d="M788.84 456.87L801.15 444.56"/>
<path stroke="#e33fc8" d="M801.15 444.56L813.46 444.56"/>
<path stroke="#e33fc8" d="M813.46 444.56L875.01 444.56"/>
<path stroke="#e33fc8" d="M875.01 444.56L887.32 456.87"/>
<path stroke="#e33fc8" d="M887.32 456.87L924.25 456.87"/>
<path stroke="#e33fc8" d="M628.81 370.7L628.81 530.73"/>
<path stroke="#e33fc8" d="M628.81 530.73L788.84 530.73"/>
<path stroke="#e33fc8" d="M788.84 530.73L801.15 530.73"/>
<path stroke="#e33fc8" d="M788.84 530.73L801.15 518.42"/>
<path stroke="#e33fc8" d="M801.15 518.42L813.46 518.42"/>
<path stroke="#e33fc8" d="M813.46 518.42L911.94 518.42"/>
<path stroke="#e33fc8" d="M911.94 518.42L924.25 530.73"/>
<path stroke="#e33fc8" d="M616.5 370.7L616.5 604.59"/>
<path stroke="#e33fc8" d="M616.5 604.59L788.84 604.59"/>
<path stroke="#e33fc8" d="M788.84 604.59L801.15 604.59"/>
<path stroke="#e33fc8" d="M788.84 604.59L801.15 592.28"/>
<path stroke="#e33fc8" d="M801.15 592.28L813.46 592.28"/>
<path stroke="#e33fc8" d="M813.46 592.28L911.94 592.28"/>
<path stroke="#e33fc8" d="M911.94 592.28L924.25 604.59"/>
<path stroke="#e33fc8" d="M604.19 370.7L604.19 678.45"/>
<path stroke="#e33fc8" d="M604.19 678.45L788.84 678.45"/>
<path stroke="#e33fc8" d="M788.84 678.45L801.15 678.45"/>
<path stroke="#e33fc8" d="M788.84 678.45L801.15 666.14"/>
<path stroke="#e33fc8" d="M801.15 666.14L813.46 666.14"/>
<path stroke="#e33fc8" d="M813.46 666.14L911.94 666.14"/>
<path stroke="#e33fc8" d="M911.94 666.14L924.25 678.45"/>
<path stroke="#e33fc8" d="M591.88 370.7L591.88 752.31"/>
<path stroke="#e33fc8" d="M591.88 752.31L788.84 752.31"/>
<path stroke="#e33fc8" d="M788.84 752.31L801.15 752.31"/>
<path stroke="#e33fc8" d="M788.84 752.31L801.15 740.0"/>
<path stroke="#e33fc8" d="M801.15 740.0L813.46 740.0"/>
<path stroke="#e33fc8" d="M813.46 740.0L911.94 740.0"/>
<path stroke="#e33fc8" d="M911.94 740.0L924.25 752.31"/>
<path stroke="#e33fc8" d="M579.57 370.7L579.57 826.17"/>
<path stroke="#e33fc8" d="M579.57 826.17L788.84 826.17"/>
<path stroke="#e33fc8" d="M788.84 826.17L801.15 826.17"/>
<path stroke="#e33fc8" d="M788.84 826.17L801.15 813.86"/>
<path stroke="#e33fc8" d="M801.15 813.86L813.46 813.86"/>
<path stroke="#e33fc8" d="M813.46 813.86L1207.38 813.86"/>
<path stroke="#e33fc8" d="M1207.38 813.86L1207.38 826.17"/>
<path stroke="#e33fc8" d="M616.5 321.46L616.5 346.08"/>
<path stroke="#e33fc8" d="M628.81 321.46L628.81 346.08"/>
<path stroke="#e33fc8" d="M641.12 321.46L641.12 346.08"/>
<path stroke="#e56b49" d="M74.86 210.67L74.86 198.36"/>
<path stroke="#e56b49" d="M74.86 198.36L111.79 198.36"/>
<path stroke="#e56b49" d="M111.79 198.36L111.79 247.6"/>
<path stroke="#e56b49" d="M111.79 247.6L87.17 247.6"/>
<path stroke="#e56b49" d="M99.48 284.53L99.48 407.63"/>
<path stroke="#e56b49" d="M99.48 407.63L444.16 407.63"/>
<path stroke="#e56b49" d="M444.16 407.63L444.16 370.7"/>
<path stroke="#e56b49" d="M431.85 370.7L431.85 887.72"/>
<path stroke="#e56b49" d="M431.85 887.72L1305.86 887.72"/>
<path stroke="#e56b49" d="M456.47 370.7L456.47 838.48"/>
<path stroke="#e56b49" d="M456.47 838.48L1035.04 838.48"/>
<path stroke="#e56b49" d="M1035.04 838.48L1035.04 530.73"/>
<path stroke="#e56b49" d="M1035.04 530.73L1071.97 530.73"/>
<path stroke="#e56b49" d="M468.78 370.7L468.78 727.69"/>
<path stroke="#e56b49" d="M468.78 727.69L468.78 764.62"/>
<path stroke="#e56b49" d="M468.78 764.62L862.7 764.62"/>
<path stroke="#e56b49" d="M481.09 370.7L481.09 690.76"/>
<path stroke="#e56b49" d="M481.09 690.76L862.7 690.76"/>
<path stroke="#e56b49" d="M493.4 370.7L493.4 616.9"/>
<path stroke="#e56b49" d="M493.4 616.9L862.7 616.9"/>
<path stroke="#e56b49" d="M505.71 370.7L505.71 543.04"/>
<path stroke="#e56b49" d="M505.71 543.04L862.7 543.04"/>
<path stroke="#e56b49" d="M518.02 370.7L518.02 469.18"/>
<path stroke="#e56b49" d="M518.02 469.18L862.7 469.18"/>
<path stroke="#e56b49" d="M493.4 321.46L493.4 346.08"/>
<path stroke="#e56b49" d="M505.71 321.46L505.71 346.08"/>
<path stroke="#e56b49" d="M518.02 321.46L518.02 346.08"/>
<path stroke="#7b7b7b" d="M776.53 38.33L850.39 38.33"/>
<path stroke="#7b7b7b" d="M850.39 38.33L924.25 38.33"/>
<path stroke="#7b7b7b" d="M924.25 38.33L924.25 247.6"/>
<path stroke="#7b7b7b" d="M247.2 173.74L247.2 161.43"/>
<path stroke="#7b7b7b" d="M247.2 161.43L308.75 161.43"/>
<path stroke="#7b7b7b" d="M308.75 161.43L357.99 161.43"/>
<path stroke="#7b7b7b" d="M370.3 149.12L357.99 149.12"/>
<path stroke="#7b7b7b" d="M357.99 149.12L357.99 247.6"/>
<path stroke="#7b7b7b" d="M357.99 247.6L924.25 247.6"/>
<path stroke="#7b7b7b" d="M924.25 247.6L1022.73 247.6"/>
<path stroke="#7b7b7b" d="M1022.73 247.6L1022.73 346.08"/>
<path stroke="#7b7b7b" d="M308.75 161.43L308.75 210.67"/>
<path stroke="#7b7b7b" d="M308.75 210.67L296.44 222.98"/>
<path stroke="#ffffff" d="M776.53 50.64L850.39 50.64"/>
<path stroke="#ffffff" d="M850.39 50.64L911.94 50.64"/>
<path stroke="#ffffff" d="M911.94 50.64L911.94 284.53"/>
<path stroke="#ffffff" d="M911.94 284.53L911.94 346.08"/>
<path stroke="#ffffff" d="M911.94 346.08L973.49 346.08"/>
<path stroke="#ffffff" d="M911.94 284.53L727.29 284.53"/>
<path stroke="#ffffff" d="M727.29 284.53L727.29 296.84"/>
</g>
<g>
<circle cx="456.47" cy="38.33" r="5.3" fill="#3f99d1"/><circle cx="456.47" cy="38.33" r="2.4" fill="#2a3a52"/>
<circle cx="222.58" cy="38.33" r="5.3" fill="#3f99d1"/><circle cx="222.58" cy="38.33" r="2.4" fill="#2a3a52"/>
<circle cx="222.58" cy="222.98" r="5.3" fill="#3f99d1"/><circle cx="222.58" cy="222.98" r="2.4" fill="#2a3a52"/>
<circle cx="271.82" cy="222.98" r="5.3" fill="#3f99d1"/><circle cx="271.82" cy="222.98" r="2.4" fill="#2a3a52"/>
<circle cx="222.58" cy="198.36" r="5.3" fill="#3f99d1"/><circle cx="222.58" cy="198.36" r="2.4" fill="#2a3a52"/>
<circle cx="124.1" cy="198.36" r="5.3" fill="#3f99d1"/><circle cx="124.1" cy="198.36" r="2.4" fill="#2a3a52"/>
<circle cx="124.1" cy="259.91" r="5.3" fill="#3f99d1"/><circle cx="124.1" cy="259.91" r="2.4" fill="#2a3a52"/>
<circle cx="124.1" cy="222.98" r="5.3" fill="#3f99d1"/><circle cx="124.1" cy="222.98" r="2.4" fill="#2a3a52"/>
<circle cx="74.86" cy="222.98" r="5.3" fill="#3f99d1"/><circle cx="74.86" cy="222.98" r="2.4" fill="#2a3a52"/>
<circle cx="62.55" cy="222.98" r="5.3" fill="#3f99d1"/><circle cx="62.55" cy="222.98" r="2.4" fill="#2a3a52"/>
<circle cx="62.55" cy="383.01" r="5.3" fill="#3f99d1"/><circle cx="62.55" cy="383.01" r="2.4" fill="#2a3a52"/>
<circle cx="259.51" cy="383.01" r="5.3" fill="#3f99d1"/><circle cx="259.51" cy="383.01" r="2.4" fill="#2a3a52"/>
<circle cx="99.48" cy="222.98" r="5.3" fill="#3f99d1"/><circle cx="99.48" cy="222.98" r="2.4" fill="#2a3a52"/>
<circle cx="284.13" cy="383.01" r="5.3" fill="#3f99d1"/><circle cx="284.13" cy="383.01" r="2.4" fill="#2a3a52"/>
<circle cx="308.75" cy="383.01" r="5.3" fill="#3f99d1"/><circle cx="308.75" cy="383.01" r="2.4" fill="#2a3a52"/>
<circle cx="333.37" cy="383.01" r="5.3" fill="#3f99d1"/><circle cx="333.37" cy="383.01" r="2.4" fill="#2a3a52"/>
<circle cx="850.39" cy="383.01" r="5.3" fill="#3f99d1"/><circle cx="850.39" cy="383.01" r="2.4" fill="#2a3a52"/>
<circle cx="850.39" cy="875.41" r="5.3" fill="#3f99d1"/><circle cx="850.39" cy="875.41" r="2.4" fill="#2a3a52"/>
<circle cx="1293.55" cy="875.41" r="5.3" fill="#3f99d1"/><circle cx="1293.55" cy="875.41" r="2.4" fill="#2a3a52"/>
<circle cx="850.39" cy="395.32" r="5.3" fill="#3f99d1"/><circle cx="850.39" cy="395.32" r="2.4" fill="#2a3a52"/>
<circle cx="1059.66" cy="395.32" r="5.3" fill="#3f99d1"/><circle cx="1059.66" cy="395.32" r="2.4" fill="#2a3a52"/>
<circle cx="1059.66" cy="370.7" r="5.3" fill="#3f99d1"/><circle cx="1059.66" cy="370.7" r="2.4" fill="#2a3a52"/>
<circle cx="850.39" cy="481.49" r="5.3" fill="#3f99d1"/><circle cx="850.39" cy="481.49" r="2.4" fill="#2a3a52"/>
<circle cx="862.7" cy="481.49" r="5.3" fill="#3f99d1"/><circle cx="862.7" cy="481.49" r="2.4" fill="#2a3a52"/>
<circle cx="887.32" cy="469.18" r="5.3" fill="#3f99d1"/><circle cx="887.32" cy="469.18" r="2.4" fill="#2a3a52"/>
<circle cx="911.94" cy="469.18" r="5.3" fill="#3f99d1"/><circle cx="911.94" cy="469.18" r="2.4" fill="#2a3a52"/>
<circle cx="911.94" cy="432.25" r="5.3" fill="#3f99d1"/><circle cx="911.94" cy="432.25" r="2.4" fill="#2a3a52"/>
<circle cx="850.39" cy="555.35" r="5.3" fill="#3f99d1"/><circle cx="850.39" cy="555.35" r="2.4" fill="#2a3a52"/>
<circle cx="862.7" cy="555.35" r="5.3" fill="#3f99d1"/><circle cx="862.7" cy="555.35" r="2.4" fill="#2a3a52"/>
<circle cx="887.32" cy="543.04" r="5.3" fill="#3f99d1"/><circle cx="887.32" cy="543.04" r="2.4" fill="#2a3a52"/>
<circle cx="911.94" cy="543.04" r="5.3" fill="#3f99d1"/><circle cx="911.94" cy="543.04" r="2.4" fill="#2a3a52"/>
<circle cx="911.94" cy="506.11" r="5.3" fill="#3f99d1"/><circle cx="911.94" cy="506.11" r="2.4" fill="#2a3a52"/>
<circle cx="850.39" cy="629.21" r="5.3" fill="#3f99d1"/><circle cx="850.39" cy="629.21" r="2.4" fill="#2a3a52"/>
<circle cx="862.7" cy="629.21" r="5.3" fill="#3f99d1"/><circle cx="862.7" cy="629.21" r="2.4" fill="#2a3a52"/>
<circle cx="887.32" cy="616.9" r="5.3" fill="#3f99d1"/><circle cx="887.32" cy="616.9" r="2.4" fill="#2a3a52"/>
<circle cx="911.94" cy="616.9" r="5.3" fill="#3f99d1"/><circle cx="911.94" cy="616.9" r="2.4" fill="#2a3a52"/>
<circle cx="911.94" cy="579.97" r="5.3" fill="#3f99d1"/><circle cx="911.94" cy="579.97" r="2.4" fill="#2a3a52"/>
<circle cx="850.39" cy="703.07" r="5.3" fill="#3f99d1"/><circle cx="850.39" cy="703.07" r="2.4" fill="#2a3a52"/>
<circle cx="862.7" cy="703.07" r="5.3" fill="#3f99d1"/><circle cx="862.7" cy="703.07" r="2.4" fill="#2a3a52"/>
<circle cx="887.32" cy="690.76" r="5.3" fill="#3f99d1"/><circle cx="887.32" cy="690.76" r="2.4" fill="#2a3a52"/>
<circle cx="911.94" cy="690.76" r="5.3" fill="#3f99d1"/><circle cx="911.94" cy="690.76" r="2.4" fill="#2a3a52"/>
<circle cx="911.94" cy="653.83" r="5.3" fill="#3f99d1"/><circle cx="911.94" cy="653.83" r="2.4" fill="#2a3a52"/>
<circle cx="850.39" cy="776.93" r="5.3" fill="#3f99d1"/><circle cx="850.39" cy="776.93" r="2.4" fill="#2a3a52"/>
<circle cx="862.7" cy="776.93" r="5.3" fill="#3f99d1"/><circle cx="862.7" cy="776.93" r="2.4" fill="#2a3a52"/>
<circle cx="887.32" cy="764.62" r="5.3" fill="#3f99d1"/><circle cx="887.32" cy="764.62" r="2.4" fill="#2a3a52"/>
<circle cx="911.94" cy="764.62" r="5.3" fill="#3f99d1"/><circle cx="911.94" cy="764.62" r="2.4" fill="#2a3a52"/>
<circle cx="911.94" cy="727.69" r="5.3" fill="#3f99d1"/><circle cx="911.94" cy="727.69" r="2.4" fill="#2a3a52"/>
<circle cx="850.39" cy="801.55" r="5.3" fill="#3f99d1"/><circle cx="850.39" cy="801.55" r="2.4" fill="#2a3a52"/>
<circle cx="1059.66" cy="801.55" r="5.3" fill="#3f99d1"/><circle cx="1059.66" cy="801.55" r="2.4" fill="#2a3a52"/>
<circle cx="1059.66" cy="555.35" r="5.3" fill="#3f99d1"/><circle cx="1059.66" cy="555.35" r="2.4" fill="#2a3a52"/>
<circle cx="1071.97" cy="555.35" r="5.3" fill="#3f99d1"/><circle cx="1071.97" cy="555.35" r="2.4" fill="#2a3a52"/>
<circle cx="998.11" cy="333.77" r="5.3" fill="#3f99d1"/><circle cx="998.11" cy="333.77" r="2.4" fill="#2a3a52"/>
<circle cx="998.11" cy="358.39" r="5.3" fill="#3f99d1"/><circle cx="998.11" cy="358.39" r="2.4" fill="#2a3a52"/>
<circle cx="1010.42" cy="358.39" r="5.3" fill="#3f99d1"/><circle cx="1010.42" cy="358.39" r="2.4" fill="#2a3a52"/>
<circle cx="998.11" cy="370.7" r="5.3" fill="#3f99d1"/><circle cx="998.11" cy="370.7" r="2.4" fill="#2a3a52"/>
<circle cx="1010.42" cy="370.7" r="5.3" fill="#3f99d1"/><circle cx="1010.42" cy="370.7" r="2.4" fill="#2a3a52"/>
<circle cx="345.68" cy="850.79" r="5.3" fill="#3f99d1"/><circle cx="345.68" cy="850.79" r="2.4" fill="#2a3a52"/>
<circle cx="357.99" cy="850.79" r="5.3" fill="#3f99d1"/><circle cx="357.99" cy="850.79" r="2.4" fill="#2a3a52"/>
<circle cx="357.99" cy="875.41" r="5.3" fill="#3f99d1"/><circle cx="357.99" cy="875.41" r="2.4" fill="#2a3a52"/>
<circle cx="1195.07" cy="838.48" r="5.3" fill="#3f99d1"/><circle cx="1195.07" cy="838.48" r="2.4" fill="#2a3a52"/>
<circle cx="776.53" cy="38.33" r="5.3" fill="#7b7b7b"/><circle cx="776.53" cy="38.33" r="2.4" fill="#2a3a52"/>
<circle cx="850.39" cy="38.33" r="5.3" fill="#7b7b7b"/><circle cx="850.39" cy="38.33" r="2.4" fill="#2a3a52"/>
<circle cx="924.25" cy="38.33" r="5.3" fill="#7b7b7b"/><circle cx="924.25" cy="38.33" r="2.4" fill="#2a3a52"/>
<circle cx="924.25" cy="247.6" r="5.3" fill="#7b7b7b"/><circle cx="924.25" cy="247.6" r="2.4" fill="#2a3a52"/>
<circle cx="247.2" cy="173.74" r="5.3" fill="#7b7b7b"/><circle cx="247.2" cy="173.74" r="2.4" fill="#2a3a52"/>
<circle cx="247.2" cy="161.43" r="5.3" fill="#7b7b7b"/><circle cx="247.2" cy="161.43" r="2.4" fill="#2a3a52"/>
<circle cx="308.75" cy="161.43" r="5.3" fill="#7b7b7b"/><circle cx="308.75" cy="161.43" r="2.4" fill="#2a3a52"/>
<circle cx="357.99" cy="161.43" r="5.3" fill="#7b7b7b"/><circle cx="357.99" cy="161.43" r="2.4" fill="#2a3a52"/>
<circle cx="370.3" cy="149.12" r="5.3" fill="#7b7b7b"/><circle cx="370.3" cy="149.12" r="2.4" fill="#2a3a52"/>
<circle cx="357.99" cy="149.12" r="5.3" fill="#7b7b7b"/><circle cx="357.99" cy="149.12" r="2.4" fill="#2a3a52"/>
<circle cx="357.99" cy="247.6" r="5.3" fill="#7b7b7b"/><circle cx="357.99" cy="247.6" r="2.4" fill="#2a3a52"/>
<circle cx="1022.73" cy="247.6" r="5.3" fill="#7b7b7b"/><circle cx="1022.73" cy="247.6" r="2.4" fill="#2a3a52"/>
<circle cx="1022.73" cy="346.08" r="5.3" fill="#7b7b7b"/><circle cx="1022.73" cy="346.08" r="2.4" fill="#2a3a52"/>
<circle cx="296.44" cy="222.98" r="5.3" fill="#7b7b7b"/><circle cx="296.44" cy="222.98" r="2.4" fill="#2a3a52"/>
<circle cx="776.53" cy="50.64" r="5.3" fill="#ffffff"/><circle cx="776.53" cy="50.64" r="2.4" fill="#2a3a52"/>
<circle cx="850.39" cy="50.64" r="5.3" fill="#ffffff"/><circle cx="850.39" cy="50.64" r="2.4" fill="#2a3a52"/>
<circle cx="911.94" cy="50.64" r="5.3" fill="#ffffff"/><circle cx="911.94" cy="50.64" r="2.4" fill="#2a3a52"/>
<circle cx="911.94" cy="284.53" r="5.3" fill="#ffffff"/><circle cx="911.94" cy="284.53" r="2.4" fill="#2a3a52"/>
<circle cx="911.94" cy="346.08" r="5.3" fill="#ffffff"/><circle cx="911.94" cy="346.08" r="2.4" fill="#2a3a52"/>
<circle cx="973.49" cy="346.08" r="5.3" fill="#ffffff"/><circle cx="973.49" cy="346.08" r="2.4" fill="#2a3a52"/>
<circle cx="727.29" cy="284.53" r="5.3" fill="#ffffff"/><circle cx="727.29" cy="284.53" r="2.4" fill="#2a3a52"/>
<circle cx="727.29" cy="296.84" r="5.3" fill="#ffffff"/><circle cx="727.29" cy="296.84" r="2.4" fill="#2a3a52"/>
<circle cx="776.53" cy="62.95" r="5.3" fill="#46e39a"/><circle cx="776.53" cy="62.95" r="2.4" fill="#2a3a52"/>
<circle cx="850.39" cy="62.95" r="5.3" fill="#46e39a"/><circle cx="850.39" cy="62.95" r="2.4" fill="#2a3a52"/>
<circle cx="899.63" cy="62.95" r="5.3" fill="#46e39a"/><circle cx="899.63" cy="62.95" r="2.4" fill="#2a3a52"/>
<circle cx="899.63" cy="259.91" r="5.3" fill="#46e39a"/><circle cx="899.63" cy="259.91" r="2.4" fill="#2a3a52"/>
<circle cx="899.63" cy="383.01" r="5.3" fill="#46e39a"/><circle cx="899.63" cy="383.01" r="2.4" fill="#2a3a52"/>
<circle cx="973.49" cy="383.01" r="5.3" fill="#46e39a"/><circle cx="973.49" cy="383.01" r="2.4" fill="#2a3a52"/>
<circle cx="788.84" cy="259.91" r="5.3" fill="#46e39a"/><circle cx="788.84" cy="259.91" r="2.4" fill="#2a3a52"/>
<circle cx="788.84" cy="272.22" r="5.3" fill="#46e39a"/><circle cx="788.84" cy="272.22" r="2.4" fill="#2a3a52"/>
<circle cx="665.74" cy="272.22" r="5.3" fill="#46e39a"/><circle cx="665.74" cy="272.22" r="2.4" fill="#2a3a52"/>
<circle cx="665.74" cy="284.53" r="5.3" fill="#46e39a"/><circle cx="665.74" cy="284.53" r="2.4" fill="#2a3a52"/>
<circle cx="604.19" cy="284.53" r="5.3" fill="#46e39a"/><circle cx="604.19" cy="284.53" r="2.4" fill="#2a3a52"/>
<circle cx="604.19" cy="296.84" r="5.3" fill="#46e39a"/><circle cx="604.19" cy="296.84" r="2.4" fill="#2a3a52"/>
<circle cx="776.53" cy="75.26" r="5.3" fill="#3ccd3c"/><circle cx="776.53" cy="75.26" r="2.4" fill="#2a3a52"/>
<circle cx="850.39" cy="75.26" r="5.3" fill="#3ccd3c"/><circle cx="850.39" cy="75.26" r="2.4" fill="#2a3a52"/>
<circle cx="1392.03" cy="518.42" r="5.3" fill="#3ccd3c"/><circle cx="1392.03" cy="518.42" r="2.4" fill="#2a3a52"/>
<circle cx="1404.34" cy="518.42" r="5.3" fill="#3ccd3c"/><circle cx="1404.34" cy="518.42" r="2.4" fill="#2a3a52"/>
<circle cx="1404.34" cy="715.38" r="5.3" fill="#3ccd3c"/><circle cx="1404.34" cy="715.38" r="2.4" fill="#2a3a52"/>
<circle cx="1182.76" cy="715.38" r="5.3" fill="#3ccd3c"/><circle cx="1182.76" cy="715.38" r="2.4" fill="#2a3a52"/>
<circle cx="1182.76" cy="801.55" r="5.3" fill="#3ccd3c"/><circle cx="1182.76" cy="801.55" r="2.4" fill="#2a3a52"/>
<circle cx="1195.07" cy="801.55" r="5.3" fill="#3ccd3c"/><circle cx="1195.07" cy="801.55" r="2.4" fill="#2a3a52"/>
<circle cx="850.39" cy="235.29" r="5.3" fill="#93e23f"/><circle cx="850.39" cy="235.29" r="2.4" fill="#2a3a52"/>
<circle cx="481.09" cy="235.29" r="5.3" fill="#93e23f"/><circle cx="481.09" cy="235.29" r="2.4" fill="#2a3a52"/>
<circle cx="481.09" cy="296.84" r="5.3" fill="#93e23f"/><circle cx="481.09" cy="296.84" r="2.4" fill="#2a3a52"/>
<circle cx="394.92" cy="296.84" r="5.3" fill="#93e23f"/><circle cx="394.92" cy="296.84" r="2.4" fill="#2a3a52"/>
<circle cx="394.92" cy="370.7" r="5.3" fill="#93e23f"/><circle cx="394.92" cy="370.7" r="2.4" fill="#2a3a52"/>
<circle cx="333.37" cy="370.7" r="5.3" fill="#93e23f"/><circle cx="333.37" cy="370.7" r="2.4" fill="#2a3a52"/>
<circle cx="247.2" cy="198.36" r="5.3" fill="#93e23f"/><circle cx="247.2" cy="198.36" r="2.4" fill="#2a3a52"/>
<circle cx="234.89" cy="198.36" r="5.3" fill="#93e23f"/><circle cx="234.89" cy="198.36" r="2.4" fill="#2a3a52"/>
<circle cx="234.89" cy="210.67" r="5.3" fill="#93e23f"/><circle cx="234.89" cy="210.67" r="2.4" fill="#2a3a52"/>
<circle cx="210.27" cy="210.67" r="5.3" fill="#93e23f"/><circle cx="210.27" cy="210.67" r="2.4" fill="#2a3a52"/>
<circle cx="210.27" cy="346.08" r="5.3" fill="#93e23f"/><circle cx="210.27" cy="346.08" r="2.4" fill="#2a3a52"/>
<circle cx="148.72" cy="259.91" r="5.3" fill="#93e23f"/><circle cx="148.72" cy="259.91" r="2.4" fill="#2a3a52"/>
<circle cx="148.72" cy="346.08" r="5.3" fill="#93e23f"/><circle cx="148.72" cy="346.08" r="2.4" fill="#2a3a52"/>
<circle cx="419.54" cy="346.08" r="5.3" fill="#93e23f"/><circle cx="419.54" cy="346.08" r="2.4" fill="#2a3a52"/>
<circle cx="419.54" cy="863.1" r="5.3" fill="#93e23f"/><circle cx="419.54" cy="863.1" r="2.4" fill="#2a3a52"/>
<circle cx="382.61" cy="875.41" r="5.3" fill="#93e23f"/><circle cx="382.61" cy="875.41" r="2.4" fill="#2a3a52"/>
<circle cx="1281.24" cy="863.1" r="5.3" fill="#93e23f"/><circle cx="1281.24" cy="863.1" r="2.4" fill="#2a3a52"/>
<circle cx="1281.24" cy="838.48" r="5.3" fill="#93e23f"/><circle cx="1281.24" cy="838.48" r="2.4" fill="#2a3a52"/>
<circle cx="1281.24" cy="764.62" r="5.3" fill="#93e23f"/><circle cx="1281.24" cy="764.62" r="2.4" fill="#2a3a52"/>
<circle cx="1010.42" cy="764.62" r="5.3" fill="#93e23f"/><circle cx="1010.42" cy="764.62" r="2.4" fill="#2a3a52"/>
<circle cx="936.56" cy="764.62" r="5.3" fill="#93e23f"/><circle cx="936.56" cy="764.62" r="2.4" fill="#2a3a52"/>
<circle cx="1219.69" cy="838.48" r="5.3" fill="#93e23f"/><circle cx="1219.69" cy="838.48" r="2.4" fill="#2a3a52"/>
<circle cx="973.49" cy="370.7" r="5.3" fill="#93e23f"/><circle cx="973.49" cy="370.7" r="2.4" fill="#2a3a52"/>
<circle cx="961.18" cy="370.7" r="5.3" fill="#93e23f"/><circle cx="961.18" cy="370.7" r="2.4" fill="#2a3a52"/>
<circle cx="961.18" cy="407.63" r="5.3" fill="#93e23f"/><circle cx="961.18" cy="407.63" r="2.4" fill="#2a3a52"/>
<circle cx="1010.42" cy="407.63" r="5.3" fill="#93e23f"/><circle cx="1010.42" cy="407.63" r="2.4" fill="#2a3a52"/>
<circle cx="1010.42" cy="469.18" r="5.3" fill="#93e23f"/><circle cx="1010.42" cy="469.18" r="2.4" fill="#2a3a52"/>
<circle cx="1010.42" cy="543.04" r="5.3" fill="#93e23f"/><circle cx="1010.42" cy="543.04" r="2.4" fill="#2a3a52"/>
<circle cx="1010.42" cy="616.9" r="5.3" fill="#93e23f"/><circle cx="1010.42" cy="616.9" r="2.4" fill="#2a3a52"/>
<circle cx="1010.42" cy="690.76" r="5.3" fill="#93e23f"/><circle cx="1010.42" cy="690.76" r="2.4" fill="#2a3a52"/>
<circle cx="936.56" cy="469.18" r="5.3" fill="#93e23f"/><circle cx="936.56" cy="469.18" r="2.4" fill="#2a3a52"/>
<circle cx="936.56" cy="543.04" r="5.3" fill="#93e23f"/><circle cx="936.56" cy="543.04" r="2.4" fill="#2a3a52"/>
<circle cx="936.56" cy="616.9" r="5.3" fill="#93e23f"/><circle cx="936.56" cy="616.9" r="2.4" fill="#2a3a52"/>
<circle cx="936.56" cy="690.76" r="5.3" fill="#93e23f"/><circle cx="936.56" cy="690.76" r="2.4" fill="#2a3a52"/>
<circle cx="247.2" cy="186.05" r="5.3" fill="#dde53e"/><circle cx="247.2" cy="186.05" r="2.4" fill="#2a3a52"/>
<circle cx="197.96" cy="186.05" r="5.3" fill="#dde53e"/><circle cx="197.96" cy="186.05" r="2.4" fill="#2a3a52"/>
<circle cx="197.96" cy="358.39" r="5.3" fill="#dde53e"/><circle cx="197.96" cy="358.39" r="2.4" fill="#2a3a52"/>
<circle cx="148.72" cy="222.98" r="5.3" fill="#dde53e"/><circle cx="148.72" cy="222.98" r="2.4" fill="#2a3a52"/>
<circle cx="161.03" cy="222.98" r="5.3" fill="#dde53e"/><circle cx="161.03" cy="222.98" r="2.4" fill="#2a3a52"/>
<circle cx="161.03" cy="358.39" r="5.3" fill="#dde53e"/><circle cx="161.03" cy="358.39" r="2.4" fill="#2a3a52"/>
<circle cx="407.23" cy="358.39" r="5.3" fill="#dde53e"/><circle cx="407.23" cy="358.39" r="2.4" fill="#2a3a52"/>
<circle cx="407.23" cy="850.79" r="5.3" fill="#dde53e"/><circle cx="407.23" cy="850.79" r="2.4" fill="#2a3a52"/>
<circle cx="382.61" cy="850.79" r="5.3" fill="#dde53e"/><circle cx="382.61" cy="850.79" r="2.4" fill="#2a3a52"/>
<circle cx="1268.93" cy="850.79" r="5.3" fill="#dde53e"/><circle cx="1268.93" cy="850.79" r="2.4" fill="#2a3a52"/>
<circle cx="1268.93" cy="801.55" r="5.3" fill="#dde53e"/><circle cx="1268.93" cy="801.55" r="2.4" fill="#2a3a52"/>
<circle cx="1268.93" cy="727.69" r="5.3" fill="#dde53e"/><circle cx="1268.93" cy="727.69" r="2.4" fill="#2a3a52"/>
<circle cx="998.11" cy="727.69" r="5.3" fill="#dde53e"/><circle cx="998.11" cy="727.69" r="2.4" fill="#2a3a52"/>
<circle cx="1219.69" cy="801.55" r="5.3" fill="#dde53e"/><circle cx="1219.69" cy="801.55" r="2.4" fill="#2a3a52"/>
<circle cx="973.49" cy="333.77" r="5.3" fill="#dde53e"/><circle cx="973.49" cy="333.77" r="2.4" fill="#2a3a52"/>
<circle cx="948.87" cy="333.77" r="5.3" fill="#dde53e"/><circle cx="948.87" cy="333.77" r="2.4" fill="#2a3a52"/>
<circle cx="948.87" cy="432.25" r="5.3" fill="#dde53e"/><circle cx="948.87" cy="432.25" r="2.4" fill="#2a3a52"/>
<circle cx="936.56" cy="432.25" r="5.3" fill="#dde53e"/><circle cx="936.56" cy="432.25" r="2.4" fill="#2a3a52"/>
<circle cx="998.11" cy="432.25" r="5.3" fill="#dde53e"/><circle cx="998.11" cy="432.25" r="2.4" fill="#2a3a52"/>
<circle cx="998.11" cy="506.11" r="5.3" fill="#dde53e"/><circle cx="998.11" cy="506.11" r="2.4" fill="#2a3a52"/>
<circle cx="998.11" cy="579.97" r="5.3" fill="#dde53e"/><circle cx="998.11" cy="579.97" r="2.4" fill="#2a3a52"/>
<circle cx="998.11" cy="653.83" r="5.3" fill="#dde53e"/><circle cx="998.11" cy="653.83" r="2.4" fill="#2a3a52"/>
<circle cx="936.56" cy="506.11" r="5.3" fill="#dde53e"/><circle cx="936.56" cy="506.11" r="2.4" fill="#2a3a52"/>
<circle cx="936.56" cy="579.97" r="5.3" fill="#dde53e"/><circle cx="936.56" cy="579.97" r="2.4" fill="#2a3a52"/>
<circle cx="936.56" cy="653.83" r="5.3" fill="#dde53e"/><circle cx="936.56" cy="653.83" r="2.4" fill="#2a3a52"/>
<circle cx="936.56" cy="727.69" r="5.3" fill="#dde53e"/><circle cx="936.56" cy="727.69" r="2.4" fill="#2a3a52"/>
<circle cx="394.92" cy="161.43" r="5.3" fill="#41d9e6"/><circle cx="394.92" cy="161.43" r="2.4" fill="#2a3a52"/>
<circle cx="407.23" cy="149.12" r="5.3" fill="#41d9e6"/><circle cx="407.23" cy="149.12" r="2.4" fill="#2a3a52"/>
<circle cx="394.92" cy="173.74" r="5.3" fill="#41d9e6"/><circle cx="394.92" cy="173.74" r="2.4" fill="#2a3a52"/>
<circle cx="407.23" cy="173.74" r="5.3" fill="#41d9e6"/><circle cx="407.23" cy="173.74" r="2.4" fill="#2a3a52"/>
<circle cx="394.92" cy="186.05" r="5.3" fill="#41d9e6"/><circle cx="394.92" cy="186.05" r="2.4" fill="#2a3a52"/>
<circle cx="419.54" cy="186.05" r="5.3" fill="#41d9e6"/><circle cx="419.54" cy="186.05" r="2.4" fill="#2a3a52"/>
<circle cx="419.54" cy="272.22" r="5.3" fill="#41d9e6"/><circle cx="419.54" cy="272.22" r="2.4" fill="#2a3a52"/>
<circle cx="653.43" cy="272.22" r="5.3" fill="#41d9e6"/><circle cx="653.43" cy="272.22" r="2.4" fill="#2a3a52"/>
<circle cx="653.43" cy="333.77" r="5.3" fill="#41d9e6"/><circle cx="653.43" cy="333.77" r="2.4" fill="#2a3a52"/>
<circle cx="653.43" cy="358.39" r="5.3" fill="#41d9e6"/><circle cx="653.43" cy="358.39" r="2.4" fill="#2a3a52"/>
<circle cx="887.32" cy="333.77" r="5.3" fill="#41d9e6"/><circle cx="887.32" cy="333.77" r="2.4" fill="#2a3a52"/>
<circle cx="887.32" cy="358.39" r="5.3" fill="#41d9e6"/><circle cx="887.32" cy="358.39" r="2.4" fill="#2a3a52"/>
<circle cx="973.49" cy="358.39" r="5.3" fill="#41d9e6"/><circle cx="973.49" cy="358.39" r="2.4" fill="#2a3a52"/>
<circle cx="394.92" cy="198.36" r="5.3" fill="#41d9e6"/><circle cx="394.92" cy="198.36" r="2.4" fill="#2a3a52"/>
<circle cx="407.23" cy="198.36" r="5.3" fill="#41d9e6"/><circle cx="407.23" cy="198.36" r="2.4" fill="#2a3a52"/>
<circle cx="407.23" cy="259.91" r="5.3" fill="#41d9e6"/><circle cx="407.23" cy="259.91" r="2.4" fill="#2a3a52"/>
<circle cx="776.53" cy="259.91" r="5.3" fill="#41d9e6"/><circle cx="776.53" cy="259.91" r="2.4" fill="#2a3a52"/>
<circle cx="776.53" cy="321.46" r="5.3" fill="#41d9e6"/><circle cx="776.53" cy="321.46" r="2.4" fill="#2a3a52"/>
<circle cx="776.53" cy="358.39" r="5.3" fill="#41d9e6"/><circle cx="776.53" cy="358.39" r="2.4" fill="#2a3a52"/>
<circle cx="973.49" cy="321.46" r="5.3" fill="#41d9e6"/><circle cx="973.49" cy="321.46" r="2.4" fill="#2a3a52"/>
<circle cx="444.16" cy="161.43" r="5.3" fill="#41d9e6"/><circle cx="444.16" cy="161.43" r="2.4" fill="#2a3a52"/>
<circle cx="444.16" cy="284.53" r="5.3" fill="#41d9e6"/><circle cx="444.16" cy="284.53" r="2.4" fill="#2a3a52"/>
<circle cx="530.33" cy="284.53" r="5.3" fill="#41d9e6"/><circle cx="530.33" cy="284.53" r="2.4" fill="#2a3a52"/>
<circle cx="530.33" cy="358.39" r="5.3" fill="#41d9e6"/><circle cx="530.33" cy="358.39" r="2.4" fill="#2a3a52"/>
<circle cx="74.86" cy="210.67" r="5.3" fill="#e56b49"/><circle cx="74.86" cy="210.67" r="2.4" fill="#2a3a52"/>
<circle cx="74.86" cy="198.36" r="5.3" fill="#e56b49"/><circle cx="74.86" cy="198.36" r="2.4" fill="#2a3a52"/>
<circle cx="111.79" cy="198.36" r="5.3" fill="#e56b49"/><circle cx="111.79" cy="198.36" r="2.4" fill="#2a3a52"/>
<circle cx="111.79" cy="247.6" r="5.3" fill="#e56b49"/><circle cx="111.79" cy="247.6" r="2.4" fill="#2a3a52"/>
<circle cx="87.17" cy="247.6" r="5.3" fill="#e56b49"/><circle cx="87.17" cy="247.6" r="2.4" fill="#2a3a52"/>
<circle cx="99.48" cy="284.53" r="5.3" fill="#e56b49"/><circle cx="99.48" cy="284.53" r="2.4" fill="#2a3a52"/>
<circle cx="99.48" cy="407.63" r="5.3" fill="#e56b49"/><circle cx="99.48" cy="407.63" r="2.4" fill="#2a3a52"/>
<circle cx="444.16" cy="407.63" r="5.3" fill="#e56b49"/><circle cx="444.16" cy="407.63" r="2.4" fill="#2a3a52"/>
<circle cx="444.16" cy="370.7" r="5.3" fill="#e56b49"/><circle cx="444.16" cy="370.7" r="2.4" fill="#2a3a52"/>
<circle cx="431.85" cy="370.7" r="5.3" fill="#e56b49"/><circle cx="431.85" cy="370.7" r="2.4" fill="#2a3a52"/>
<circle cx="431.85" cy="887.72" r="5.3" fill="#e56b49"/><circle cx="431.85" cy="887.72" r="2.4" fill="#2a3a52"/>
<circle cx="1305.86" cy="887.72" r="5.3" fill="#e56b49"/><circle cx="1305.86" cy="887.72" r="2.4" fill="#2a3a52"/>
<circle cx="456.47" cy="370.7" r="5.3" fill="#e56b49"/><circle cx="456.47" cy="370.7" r="2.4" fill="#2a3a52"/>
<circle cx="456.47" cy="838.48" r="5.3" fill="#e56b49"/><circle cx="456.47" cy="838.48" r="2.4" fill="#2a3a52"/>
<circle cx="1035.04" cy="838.48" r="5.3" fill="#e56b49"/><circle cx="1035.04" cy="838.48" r="2.4" fill="#2a3a52"/>
<circle cx="1035.04" cy="530.73" r="5.3" fill="#e56b49"/><circle cx="1035.04" cy="530.73" r="2.4" fill="#2a3a52"/>
<circle cx="1071.97" cy="530.73" r="5.3" fill="#e56b49"/><circle cx="1071.97" cy="530.73" r="2.4" fill="#2a3a52"/>
<circle cx="468.78" cy="370.7" r="5.3" fill="#e56b49"/><circle cx="468.78" cy="370.7" r="2.4" fill="#2a3a52"/>
<circle cx="468.78" cy="727.69" r="5.3" fill="#e56b49"/><circle cx="468.78" cy="727.69" r="2.4" fill="#2a3a52"/>
<circle cx="468.78" cy="764.62" r="5.3" fill="#e56b49"/><circle cx="468.78" cy="764.62" r="2.4" fill="#2a3a52"/>
<circle cx="862.7" cy="764.62" r="5.3" fill="#e56b49"/><circle cx="862.7" cy="764.62" r="2.4" fill="#2a3a52"/>
<circle cx="481.09" cy="370.7" r="5.3" fill="#e56b49"/><circle cx="481.09" cy="370.7" r="2.4" fill="#2a3a52"/>
<circle cx="481.09" cy="690.76" r="5.3" fill="#e56b49"/><circle cx="481.09" cy="690.76" r="2.4" fill="#2a3a52"/>
<circle cx="862.7" cy="690.76" r="5.3" fill="#e56b49"/><circle cx="862.7" cy="690.76" r="2.4" fill="#2a3a52"/>
<circle cx="493.4" cy="370.7" r="5.3" fill="#e56b49"/><circle cx="493.4" cy="370.7" r="2.4" fill="#2a3a52"/>
<circle cx="493.4" cy="616.9" r="5.3" fill="#e56b49"/><circle cx="493.4" cy="616.9" r="2.4" fill="#2a3a52"/>
<circle cx="862.7" cy="616.9" r="5.3" fill="#e56b49"/><circle cx="862.7" cy="616.9" r="2.4" fill="#2a3a52"/>
<circle cx="505.71" cy="370.7" r="5.3" fill="#e56b49"/><circle cx="505.71" cy="370.7" r="2.4" fill="#2a3a52"/>
<circle cx="505.71" cy="543.04" r="5.3" fill="#e56b49"/><circle cx="505.71" cy="543.04" r="2.4" fill="#2a3a52"/>
<circle cx="862.7" cy="543.04" r="5.3" fill="#e56b49"/><circle cx="862.7" cy="543.04" r="2.4" fill="#2a3a52"/>
<circle cx="518.02" cy="370.7" r="5.3" fill="#e56b49"/><circle cx="518.02" cy="370.7" r="2.4" fill="#2a3a52"/>
<circle cx="518.02" cy="469.18" r="5.3" fill="#e56b49"/><circle cx="518.02" cy="469.18" r="2.4" fill="#2a3a52"/>
<circle cx="862.7" cy="469.18" r="5.3" fill="#e56b49"/><circle cx="862.7" cy="469.18" r="2.4" fill="#2a3a52"/>
<circle cx="493.4" cy="321.46" r="5.3" fill="#e56b49"/><circle cx="493.4" cy="321.46" r="2.4" fill="#2a3a52"/>
<circle cx="493.4" cy="346.08" r="5.3" fill="#e56b49"/><circle cx="493.4" cy="346.08" r="2.4" fill="#2a3a52"/>
<circle cx="505.71" cy="321.46" r="5.3" fill="#e56b49"/><circle cx="505.71" cy="321.46" r="2.4" fill="#2a3a52"/>
<circle cx="505.71" cy="346.08" r="5.3" fill="#e56b49"/><circle cx="505.71" cy="346.08" r="2.4" fill="#2a3a52"/>
<circle cx="518.02" cy="321.46" r="5.3" fill="#e56b49"/><circle cx="518.02" cy="321.46" r="2.4" fill="#2a3a52"/>
<circle cx="518.02" cy="346.08" r="5.3" fill="#e56b49"/><circle cx="518.02" cy="346.08" r="2.4" fill="#2a3a52"/>
<circle cx="136.41" cy="247.6" r="5.3" fill="#e33fc8"/><circle cx="136.41" cy="247.6" r="2.4" fill="#2a3a52"/>
<circle cx="173.34" cy="247.6" r="5.3" fill="#e33fc8"/><circle cx="173.34" cy="247.6" r="2.4" fill="#2a3a52"/>
<circle cx="173.34" cy="419.94" r="5.3" fill="#e33fc8"/><circle cx="173.34" cy="419.94" r="2.4" fill="#2a3a52"/>
<circle cx="567.26" cy="419.94" r="5.3" fill="#e33fc8"/><circle cx="567.26" cy="419.94" r="2.4" fill="#2a3a52"/>
<circle cx="567.26" cy="370.7" r="5.3" fill="#e33fc8"/><circle cx="567.26" cy="370.7" r="2.4" fill="#2a3a52"/>
<circle cx="554.95" cy="370.7" r="5.3" fill="#e33fc8"/><circle cx="554.95" cy="370.7" r="2.4" fill="#2a3a52"/>
<circle cx="554.95" cy="912.34" r="5.3" fill="#e33fc8"/><circle cx="554.95" cy="912.34" r="2.4" fill="#2a3a52"/>
<circle cx="394.92" cy="912.34" r="5.3" fill="#e33fc8"/><circle cx="394.92" cy="912.34" r="2.4" fill="#2a3a52"/>
<circle cx="370.3" cy="863.1" r="5.3" fill="#e33fc8"/><circle cx="370.3" cy="863.1" r="2.4" fill="#2a3a52"/>
<circle cx="382.61" cy="912.34" r="5.3" fill="#e33fc8"/><circle cx="382.61" cy="912.34" r="2.4" fill="#2a3a52"/>
<circle cx="641.12" cy="370.7" r="5.3" fill="#e33fc8"/><circle cx="641.12" cy="370.7" r="2.4" fill="#2a3a52"/>
<circle cx="641.12" cy="456.87" r="5.3" fill="#e33fc8"/><circle cx="641.12" cy="456.87" r="2.4" fill="#2a3a52"/>
<circle cx="788.84" cy="456.87" r="5.3" fill="#e33fc8"/><circle cx="788.84" cy="456.87" r="2.4" fill="#2a3a52"/>
<circle cx="813.46" cy="444.56" r="5.3" fill="#e33fc8"/><circle cx="813.46" cy="444.56" r="2.4" fill="#2a3a52"/>
<circle cx="924.25" cy="456.87" r="5.3" fill="#e33fc8"/><circle cx="924.25" cy="456.87" r="2.4" fill="#2a3a52"/>
<circle cx="628.81" cy="370.7" r="5.3" fill="#e33fc8"/><circle cx="628.81" cy="370.7" r="2.4" fill="#2a3a52"/>
<circle cx="628.81" cy="530.73" r="5.3" fill="#e33fc8"/><circle cx="628.81" cy="530.73" r="2.4" fill="#2a3a52"/>
<circle cx="788.84" cy="530.73" r="5.3" fill="#e33fc8"/><circle cx="788.84" cy="530.73" r="2.4" fill="#2a3a52"/>
<circle cx="813.46" cy="518.42" r="5.3" fill="#e33fc8"/><circle cx="813.46" cy="518.42" r="2.4" fill="#2a3a52"/>
<circle cx="924.25" cy="530.73" r="5.3" fill="#e33fc8"/><circle cx="924.25" cy="530.73" r="2.4" fill="#2a3a52"/>
<circle cx="616.5" cy="370.7" r="5.3" fill="#e33fc8"/><circle cx="616.5" cy="370.7" r="2.4" fill="#2a3a52"/>
<circle cx="616.5" cy="604.59" r="5.3" fill="#e33fc8"/><circle cx="616.5" cy="604.59" r="2.4" fill="#2a3a52"/>
<circle cx="788.84" cy="604.59" r="5.3" fill="#e33fc8"/><circle cx="788.84" cy="604.59" r="2.4" fill="#2a3a52"/>
<circle cx="813.46" cy="592.28" r="5.3" fill="#e33fc8"/><circle cx="813.46" cy="592.28" r="2.4" fill="#2a3a52"/>
<circle cx="924.25" cy="604.59" r="5.3" fill="#e33fc8"/><circle cx="924.25" cy="604.59" r="2.4" fill="#2a3a52"/>
<circle cx="604.19" cy="370.7" r="5.3" fill="#e33fc8"/><circle cx="604.19" cy="370.7" r="2.4" fill="#2a3a52"/>
<circle cx="604.19" cy="678.45" r="5.3" fill="#e33fc8"/><circle cx="604.19" cy="678.45" r="2.4" fill="#2a3a52"/>
<circle cx="788.84" cy="678.45" r="5.3" fill="#e33fc8"/><circle cx="788.84" cy="678.45" r="2.4" fill="#2a3a52"/>
<circle cx="813.46" cy="666.14" r="5.3" fill="#e33fc8"/><circle cx="813.46" cy="666.14" r="2.4" fill="#2a3a52"/>
<circle cx="924.25" cy="678.45" r="5.3" fill="#e33fc8"/><circle cx="924.25" cy="678.45" r="2.4" fill="#2a3a52"/>
<circle cx="591.88" cy="370.7" r="5.3" fill="#e33fc8"/><circle cx="591.88" cy="370.7" r="2.4" fill="#2a3a52"/>
<circle cx="591.88" cy="752.31" r="5.3" fill="#e33fc8"/><circle cx="591.88" cy="752.31" r="2.4" fill="#2a3a52"/>
<circle cx="788.84" cy="752.31" r="5.3" fill="#e33fc8"/><circle cx="788.84" cy="752.31" r="2.4" fill="#2a3a52"/>
<circle cx="813.46" cy="740.0" r="5.3" fill="#e33fc8"/><circle cx="813.46" cy="740.0" r="2.4" fill="#2a3a52"/>
<circle cx="924.25" cy="752.31" r="5.3" fill="#e33fc8"/><circle cx="924.25" cy="752.31" r="2.4" fill="#2a3a52"/>
<circle cx="579.57" cy="370.7" r="5.3" fill="#e33fc8"/><circle cx="579.57" cy="370.7" r="2.4" fill="#2a3a52"/>
<circle cx="579.57" cy="826.17" r="5.3" fill="#e33fc8"/><circle cx="579.57" cy="826.17" r="2.4" fill="#2a3a52"/>
<circle cx="788.84" cy="826.17" r="5.3" fill="#e33fc8"/><circle cx="788.84" cy="826.17" r="2.4" fill="#2a3a52"/>
<circle cx="813.46" cy="813.86" r="5.3" fill="#e33fc8"/><circle cx="813.46" cy="813.86" r="2.4" fill="#2a3a52"/>
<circle cx="1207.38" cy="813.86" r="5.3" fill="#e33fc8"/><circle cx="1207.38" cy="813.86" r="2.4" fill="#2a3a52"/>
<circle cx="1207.38" cy="826.17" r="5.3" fill="#e33fc8"/><circle cx="1207.38" cy="826.17" r="2.4" fill="#2a3a52"/>
<circle cx="616.5" cy="321.46" r="5.3" fill="#e33fc8"/><circle cx="616.5" cy="321.46" r="2.4" fill="#2a3a52"/>
<circle cx="616.5" cy="346.08" r="5.3" fill="#e33fc8"/><circle cx="616.5" cy="346.08" r="2.4" fill="#2a3a52"/>
<circle cx="628.81" cy="321.46" r="5.3" fill="#e33fc8"/><circle cx="628.81" cy="321.46" r="2.4" fill="#2a3a52"/>
<circle cx="628.81" cy="346.08" r="5.3" fill="#e33fc8"/><circle cx="628.81" cy="346.08" r="2.4" fill="#2a3a52"/>
<circle cx="641.12" cy="321.46" r="5.3" fill="#e33fc8"/><circle cx="641.12" cy="321.46" r="2.4" fill="#2a3a52"/>
<circle cx="641.12" cy="346.08" r="5.3" fill="#e33fc8"/><circle cx="641.12" cy="346.08" r="2.4" fill="#2a3a52"/>
<circle cx="136.41" cy="210.67" r="5.3" fill="#9a40e2"/><circle cx="136.41" cy="210.67" r="2.4" fill="#2a3a52"/>
<circle cx="185.65" cy="210.67" r="5.3" fill="#9a40e2"/><circle cx="185.65" cy="210.67" r="2.4" fill="#2a3a52"/>
<circle cx="185.65" cy="432.25" r="5.3" fill="#9a40e2"/><circle cx="185.65" cy="432.25" r="2.4" fill="#2a3a52"/>
<circle cx="690.36" cy="432.25" r="5.3" fill="#9a40e2"/><circle cx="690.36" cy="432.25" r="2.4" fill="#2a3a52"/>
<circle cx="690.36" cy="370.7" r="5.3" fill="#9a40e2"/><circle cx="690.36" cy="370.7" r="2.4" fill="#2a3a52"/>
<circle cx="678.05" cy="370.7" r="5.3" fill="#9a40e2"/><circle cx="678.05" cy="370.7" r="2.4" fill="#2a3a52"/>
<circle cx="678.05" cy="900.03" r="5.3" fill="#9a40e2"/><circle cx="678.05" cy="900.03" r="2.4" fill="#2a3a52"/>
<circle cx="407.23" cy="900.03" r="5.3" fill="#9a40e2"/><circle cx="407.23" cy="900.03" r="2.4" fill="#2a3a52"/>
<circle cx="370.3" cy="838.48" r="5.3" fill="#9a40e2"/><circle cx="370.3" cy="838.48" r="2.4" fill="#2a3a52"/>
<circle cx="382.61" cy="887.72" r="5.3" fill="#9a40e2"/><circle cx="382.61" cy="887.72" r="2.4" fill="#2a3a52"/>
<circle cx="764.22" cy="370.7" r="5.3" fill="#9a40e2"/><circle cx="764.22" cy="370.7" r="2.4" fill="#2a3a52"/>
<circle cx="764.22" cy="432.25" r="5.3" fill="#9a40e2"/><circle cx="764.22" cy="432.25" r="2.4" fill="#2a3a52"/>
<circle cx="788.84" cy="432.25" r="5.3" fill="#9a40e2"/><circle cx="788.84" cy="432.25" r="2.4" fill="#2a3a52"/>
<circle cx="813.46" cy="419.94" r="5.3" fill="#9a40e2"/><circle cx="813.46" cy="419.94" r="2.4" fill="#2a3a52"/>
<circle cx="924.25" cy="419.94" r="5.3" fill="#9a40e2"/><circle cx="924.25" cy="419.94" r="2.4" fill="#2a3a52"/>
<circle cx="751.91" cy="370.7" r="5.3" fill="#9a40e2"/><circle cx="751.91" cy="370.7" r="2.4" fill="#2a3a52"/>
<circle cx="751.91" cy="506.11" r="5.3" fill="#9a40e2"/><circle cx="751.91" cy="506.11" r="2.4" fill="#2a3a52"/>
<circle cx="788.84" cy="506.11" r="5.3" fill="#9a40e2"/><circle cx="788.84" cy="506.11" r="2.4" fill="#2a3a52"/>
<circle cx="813.46" cy="493.8" r="5.3" fill="#9a40e2"/><circle cx="813.46" cy="493.8" r="2.4" fill="#2a3a52"/>
<circle cx="924.25" cy="493.8" r="5.3" fill="#9a40e2"/><circle cx="924.25" cy="493.8" r="2.4" fill="#2a3a52"/>
<circle cx="739.6" cy="370.7" r="5.3" fill="#9a40e2"/><circle cx="739.6" cy="370.7" r="2.4" fill="#2a3a52"/>
<circle cx="739.6" cy="579.97" r="5.3" fill="#9a40e2"/><circle cx="739.6" cy="579.97" r="2.4" fill="#2a3a52"/>
<circle cx="788.84" cy="579.97" r="5.3" fill="#9a40e2"/><circle cx="788.84" cy="579.97" r="2.4" fill="#2a3a52"/>
<circle cx="813.46" cy="567.66" r="5.3" fill="#9a40e2"/><circle cx="813.46" cy="567.66" r="2.4" fill="#2a3a52"/>
<circle cx="924.25" cy="567.66" r="5.3" fill="#9a40e2"/><circle cx="924.25" cy="567.66" r="2.4" fill="#2a3a52"/>
<circle cx="727.29" cy="370.7" r="5.3" fill="#9a40e2"/><circle cx="727.29" cy="370.7" r="2.4" fill="#2a3a52"/>
<circle cx="727.29" cy="653.83" r="5.3" fill="#9a40e2"/><circle cx="727.29" cy="653.83" r="2.4" fill="#2a3a52"/>
<circle cx="788.84" cy="653.83" r="5.3" fill="#9a40e2"/><circle cx="788.84" cy="653.83" r="2.4" fill="#2a3a52"/>
<circle cx="813.46" cy="641.52" r="5.3" fill="#9a40e2"/><circle cx="813.46" cy="641.52" r="2.4" fill="#2a3a52"/>
<circle cx="924.25" cy="641.52" r="5.3" fill="#9a40e2"/><circle cx="924.25" cy="641.52" r="2.4" fill="#2a3a52"/>
<circle cx="714.98" cy="370.7" r="5.3" fill="#9a40e2"/><circle cx="714.98" cy="370.7" r="2.4" fill="#2a3a52"/>
<circle cx="714.98" cy="727.69" r="5.3" fill="#9a40e2"/><circle cx="714.98" cy="727.69" r="2.4" fill="#2a3a52"/>
<circle cx="788.84" cy="727.69" r="5.3" fill="#9a40e2"/><circle cx="788.84" cy="727.69" r="2.4" fill="#2a3a52"/>
<circle cx="813.46" cy="715.38" r="5.3" fill="#9a40e2"/><circle cx="813.46" cy="715.38" r="2.4" fill="#2a3a52"/>
<circle cx="924.25" cy="715.38" r="5.3" fill="#9a40e2"/><circle cx="924.25" cy="715.38" r="2.4" fill="#2a3a52"/>
<circle cx="702.67" cy="370.7" r="5.3" fill="#9a40e2"/><circle cx="702.67" cy="370.7" r="2.4" fill="#2a3a52"/>
<circle cx="702.67" cy="801.55" r="5.3" fill="#9a40e2"/><circle cx="702.67" cy="801.55" r="2.4" fill="#2a3a52"/>
<circle cx="788.84" cy="801.55" r="5.3" fill="#9a40e2"/><circle cx="788.84" cy="801.55" r="2.4" fill="#2a3a52"/>
<circle cx="813.46" cy="789.24" r="5.3" fill="#9a40e2"/><circle cx="813.46" cy="789.24" r="2.4" fill="#2a3a52"/>
<circle cx="1207.38" cy="789.24" r="5.3" fill="#9a40e2"/><circle cx="1207.38" cy="789.24" r="2.4" fill="#2a3a52"/>
<circle cx="739.6" cy="321.46" r="5.3" fill="#9a40e2"/><circle cx="739.6" cy="321.46" r="2.4" fill="#2a3a52"/>
<circle cx="739.6" cy="346.08" r="5.3" fill="#9a40e2"/><circle cx="739.6" cy="346.08" r="2.4" fill="#2a3a52"/>
<circle cx="751.91" cy="321.46" r="5.3" fill="#9a40e2"/><circle cx="751.91" cy="321.46" r="2.4" fill="#2a3a52"/>
<circle cx="751.91" cy="346.08" r="5.3" fill="#9a40e2"/><circle cx="751.91" cy="346.08" r="2.4" fill="#2a3a52"/>
<circle cx="764.22" cy="321.46" r="5.3" fill="#9a40e2"/><circle cx="764.22" cy="321.46" r="2.4" fill="#2a3a52"/>
<circle cx="764.22" cy="346.08" r="5.3" fill="#9a40e2"/><circle cx="764.22" cy="346.08" r="2.4" fill="#2a3a52"/>
<circle cx="74.86" cy="284.53" r="5.3" fill="#e7a03a"/><circle cx="74.86" cy="284.53" r="2.4" fill="#2a3a52"/>
<circle cx="74.86" cy="321.46" r="5.3" fill="#e7a03a"/><circle cx="74.86" cy="321.46" r="2.4" fill="#2a3a52"/>
<circle cx="259.51" cy="321.46" r="5.3" fill="#e7a03a"/><circle cx="259.51" cy="321.46" r="2.4" fill="#2a3a52"/>
<circle cx="345.68" cy="321.46" r="5.3" fill="#e7a03a"/><circle cx="345.68" cy="321.46" r="2.4" fill="#2a3a52"/>
<circle cx="259.51" cy="198.36" r="5.3" fill="#e7a03a"/><circle cx="259.51" cy="198.36" r="2.4" fill="#2a3a52"/>
<circle cx="284.13" cy="198.36" r="5.3" fill="#e7a03a"/><circle cx="284.13" cy="198.36" r="2.4" fill="#2a3a52"/>
<circle cx="87.17" cy="284.53" r="5.3" fill="#e7a03a"/><circle cx="87.17" cy="284.53" r="2.4" fill="#2a3a52"/>
<circle cx="87.17" cy="296.84" r="5.3" fill="#e7a03a"/><circle cx="87.17" cy="296.84" r="2.4" fill="#2a3a52"/>
<circle cx="333.37" cy="296.84" r="5.3" fill="#e7a03a"/><circle cx="333.37" cy="296.84" r="2.4" fill="#2a3a52"/>
<circle cx="308.75" cy="235.29" r="5.3" fill="#e7a03a"/><circle cx="308.75" cy="235.29" r="2.4" fill="#2a3a52"/>
<circle cx="345.68" cy="235.29" r="5.3" fill="#e7a03a"/><circle cx="345.68" cy="235.29" r="2.4" fill="#2a3a52"/>
<circle cx="345.68" cy="259.91" r="5.3" fill="#e7a03a"/><circle cx="345.68" cy="259.91" r="2.4" fill="#2a3a52"/>
<circle cx="308.75" cy="247.6" r="5.3" fill="#e7a03a"/><circle cx="308.75" cy="247.6" r="2.4" fill="#2a3a52"/>
<circle cx="308.75" cy="259.91" r="5.3" fill="#e7a03a"/><circle cx="308.75" cy="259.91" r="2.4" fill="#2a3a52"/>
<circle cx="308.75" cy="370.7" r="5.3" fill="#e7a03a"/><circle cx="308.75" cy="370.7" r="2.4" fill="#2a3a52"/>
<circle cx="296.44" cy="370.7" r="5.3" fill="#e7a03a"/><circle cx="296.44" cy="370.7" r="2.4" fill="#2a3a52"/>
<circle cx="296.44" cy="395.32" r="5.3" fill="#e7a03a"/><circle cx="296.44" cy="395.32" r="2.4" fill="#2a3a52"/>
<circle cx="284.13" cy="395.32" r="5.3" fill="#e7a03a"/><circle cx="284.13" cy="395.32" r="2.4" fill="#2a3a52"/>
<circle cx="321.06" cy="259.91" r="5.3" fill="#e7a03a"/><circle cx="321.06" cy="259.91" r="2.4" fill="#2a3a52"/>
<circle cx="382.61" cy="309.15" r="5.3" fill="#e7a03a"/><circle cx="382.61" cy="309.15" r="2.4" fill="#2a3a52"/>
<circle cx="382.61" cy="395.32" r="5.3" fill="#e7a03a"/><circle cx="382.61" cy="395.32" r="2.4" fill="#2a3a52"/>
<circle cx="333.37" cy="395.32" r="5.3" fill="#e7a03a"/><circle cx="333.37" cy="395.32" r="2.4" fill="#2a3a52"/>
<circle cx="333.37" cy="863.1" r="5.3" fill="#e7a03a"/><circle cx="333.37" cy="863.1" r="2.4" fill="#2a3a52"/>
<circle cx="345.68" cy="900.03" r="5.3" fill="#e7a03a"/><circle cx="345.68" cy="900.03" r="2.4" fill="#2a3a52"/>
<circle cx="1022.73" cy="518.42" r="5.3" fill="#e7a03a"/><circle cx="1022.73" cy="518.42" r="2.4" fill="#2a3a52"/>
<circle cx="1071.97" cy="518.42" r="5.3" fill="#e7a03a"/><circle cx="1071.97" cy="518.42" r="2.4" fill="#2a3a52"/>
<circle cx="1022.73" cy="826.17" r="5.3" fill="#e7a03a"/><circle cx="1022.73" cy="826.17" r="2.4" fill="#2a3a52"/>
<circle cx="825.77" cy="826.17" r="5.3" fill="#e7a03a"/><circle cx="825.77" cy="826.17" r="2.4" fill="#2a3a52"/>
<circle cx="825.77" cy="432.25" r="5.3" fill="#e7a03a"/><circle cx="825.77" cy="432.25" r="2.4" fill="#2a3a52"/>
<circle cx="825.77" cy="456.87" r="5.3" fill="#e7a03a"/><circle cx="825.77" cy="456.87" r="2.4" fill="#2a3a52"/>
<circle cx="862.7" cy="456.87" r="5.3" fill="#e7a03a"/><circle cx="862.7" cy="456.87" r="2.4" fill="#2a3a52"/>
<circle cx="825.77" cy="506.11" r="5.3" fill="#e7a03a"/><circle cx="825.77" cy="506.11" r="2.4" fill="#2a3a52"/>
<circle cx="825.77" cy="530.73" r="5.3" fill="#e7a03a"/><circle cx="825.77" cy="530.73" r="2.4" fill="#2a3a52"/>
<circle cx="862.7" cy="530.73" r="5.3" fill="#e7a03a"/><circle cx="862.7" cy="530.73" r="2.4" fill="#2a3a52"/>
<circle cx="825.77" cy="579.97" r="5.3" fill="#e7a03a"/><circle cx="825.77" cy="579.97" r="2.4" fill="#2a3a52"/>
<circle cx="825.77" cy="604.59" r="5.3" fill="#e7a03a"/><circle cx="825.77" cy="604.59" r="2.4" fill="#2a3a52"/>
<circle cx="862.7" cy="604.59" r="5.3" fill="#e7a03a"/><circle cx="862.7" cy="604.59" r="2.4" fill="#2a3a52"/>
<circle cx="825.77" cy="653.83" r="5.3" fill="#e7a03a"/><circle cx="825.77" cy="653.83" r="2.4" fill="#2a3a52"/>
<circle cx="825.77" cy="678.45" r="5.3" fill="#e7a03a"/><circle cx="825.77" cy="678.45" r="2.4" fill="#2a3a52"/>
<circle cx="862.7" cy="678.45" r="5.3" fill="#e7a03a"/><circle cx="862.7" cy="678.45" r="2.4" fill="#2a3a52"/>
<circle cx="825.77" cy="727.69" r="5.3" fill="#e7a03a"/><circle cx="825.77" cy="727.69" r="2.4" fill="#2a3a52"/>
<circle cx="825.77" cy="752.31" r="5.3" fill="#e7a03a"/><circle cx="825.77" cy="752.31" r="2.4" fill="#2a3a52"/>
<circle cx="862.7" cy="752.31" r="5.3" fill="#e7a03a"/><circle cx="862.7" cy="752.31" r="2.4" fill="#2a3a52"/>
<circle cx="825.77" cy="801.55" r="5.3" fill="#e7a03a"/><circle cx="825.77" cy="801.55" r="2.4" fill="#2a3a52"/>
<circle cx="296.44" cy="247.6" r="5.3" fill="#2f9ea3"/><circle cx="296.44" cy="247.6" r="2.4" fill="#2a3a52"/>
<circle cx="284.13" cy="259.91" r="5.3" fill="#2f9ea3"/><circle cx="284.13" cy="259.91" r="2.4" fill="#2a3a52"/>
<circle cx="284.13" cy="370.7" r="5.3" fill="#2f9ea3"/><circle cx="284.13" cy="370.7" r="2.4" fill="#2a3a52"/>
<circle cx="1047.35" cy="543.04" r="5.3" fill="#5a55e8"/><circle cx="1047.35" cy="543.04" r="2.4" fill="#2a3a52"/>
<circle cx="1071.97" cy="543.04" r="5.3" fill="#5a55e8"/><circle cx="1071.97" cy="543.04" r="2.4" fill="#2a3a52"/>
<circle cx="1047.35" cy="776.93" r="5.3" fill="#5a55e8"/><circle cx="1047.35" cy="776.93" r="2.4" fill="#2a3a52"/>
<circle cx="887.32" cy="776.93" r="5.3" fill="#5a55e8"/><circle cx="887.32" cy="776.93" r="2.4" fill="#2a3a52"/>
</g>
<rect x="8.7" y="454.7" width="378.3" height="262" fill="#1f5b94" stroke="#1f4fa3" stroke-width="1.5"/>
<rect x="15" y="459.4" width="368.8" height="236.2" fill="#111214"/>
<text x="197.5" y="581.5" font-size="14" text-anchor="middle" font-weight="bold" class="mono" fill="#fff" textLength="83" lengthAdjust="spacingAndGlyphs">NO SIGNAL</text>
<path d="M192.6 701.8h9.8v7.6h-3.6l-1.3 1.6-1.3-1.6h-3.6z" fill="#fff"/>
<path d="M462.5 27.5Q615 18 771 27.5L773.5 220.5Q615 235 459 220.5Z" fill="#1d5b94" stroke="#2148a8" stroke-width="2" stroke-linejoin="round" />
<text x="616.0" y="34.2" font-size="13" text-anchor="middle" font-weight="bold" class="mono" fill="#fff" textLength="56" lengthAdjust="spacingAndGlyphs">PROGRAM</text>
<rect x="465.6" y="36" width="18" height="9.4" fill="#e89a3c"/>
<rect x="484.7" y="36" width="18" height="9.4" fill="#e89a3c"/>
<rect x="503.8" y="36" width="18" height="9.4" fill="#e89a3c"/>
<rect x="522.8" y="36" width="18" height="9.4" fill="#e89a3c"/>
<g class="mono" font-size="8.5" text-anchor="middle" fill="#cfe0f2">
<text x="474.6" y="43.5">0</text>
<text x="493.7" y="43.5">0</text>
<text x="512.8" y="43.5">7</text>
<text x="531.8" y="43.5">1</text>
<text x="550.9" y="43.5">32</text>
<text x="570.0" y="43.5">1</text>
<text x="589.0" y="43.5">0</text>
<text x="608.1" y="43.5">20</text>
<text x="627.2" y="43.5">0</text>
<text x="646.3" y="43.5">1</text>
<text x="665.4" y="43.5">0</text>
<text x="684.4" y="43.5">5</text>
<text x="703.5" y="43.5">64</text>
<text x="722.6" y="43.5">4</text>
<text x="741.7" y="43.5">1</text>
<text x="760.7" y="43.5">4</text>
<text x="474.6" y="54.6">38</text>
<text x="493.7" y="54.6">0</text>
<text x="512.8" y="54.6">0</text>
<text x="531.8" y="54.6">0</text>
<text x="550.9" y="54.6">65</text>
<text x="570.0" y="54.6">4</text>
<text x="589.0" y="54.6">1</text>
<text x="608.1" y="54.6">4</text>
<text x="627.2" y="54.6">0</text>
<text x="646.3" y="54.6">0</text>
<text x="665.4" y="54.6">5</text>
<text x="684.4" y="54.6">7</text>
<text x="703.5" y="54.6">38</text>
<text x="722.6" y="54.6">0</text>
<text x="741.7" y="54.6">0</text>
<text x="760.7" y="54.6">0</text>
<text x="474.6" y="65.7">0</text>
<text x="493.7" y="65.7">0</text>
<text x="512.8" y="65.7">0</text>
<text x="531.8" y="65.7">0</text>
<text x="550.9" y="65.7">0</text>
<text x="570.0" y="65.7">0</text>
<text x="589.0" y="65.7">0</text>
<text x="608.1" y="65.7">0</text>
<text x="627.2" y="65.7">0</text>
<text x="646.3" y="65.7">0</text>
<text x="665.4" y="65.7">0</text>
<text x="684.4" y="65.7">0</text>
<text x="703.5" y="65.7">0</text>
<text x="722.6" y="65.7">0</text>
<text x="741.7" y="65.7">0</text>
<text x="760.7" y="65.7">0</text>
<text x="474.6" y="76.8">0</text>
<text x="493.7" y="76.8">0</text>
<text x="512.8" y="76.8">0</text>
<text x="531.8" y="76.8">0</text>
<text x="550.9" y="76.8">0</text>
<text x="570.0" y="76.8">0</text>
<text x="589.0" y="76.8">0</text>
<text x="608.1" y="76.8">0</text>
<text x="627.2" y="76.8">0</text>
<text x="646.3" y="76.8">0</text>
<text x="665.4" y="76.8">0</text>
<text x="684.4" y="76.8">0</text>
<text x="703.5" y="76.8">0</text>
<text x="722.6" y="76.8">0</text>
<text x="741.7" y="76.8">0</text>
<text x="760.7" y="76.8">0</text>
<text x="474.6" y="87.9">0</text>
<text x="493.7" y="87.9">0</text>
<text x="512.8" y="87.9">0</text>
<text x="531.8" y="87.9">0</text>
<text x="550.9" y="87.9">0</text>
<text x="570.0" y="87.9">0</text>
<text x="589.0" y="87.9">0</text>
<text x="608.1" y="87.9">0</text>
<text x="627.2" y="87.9">0</text>
<text x="646.3" y="87.9">0</text>
<text x="665.4" y="87.9">0</text>
<text x="684.4" y="87.9">0</text>
<text x="703.5" y="87.9">0</text>
<text x="722.6" y="87.9">0</text>
<text x="741.7" y="87.9">0</text>
<text x="760.7" y="87.9">0</text>
<text x="474.6" y="99.0">0</text>
<text x="493.7" y="99.0">0</text>
<text x="512.8" y="99.0">0</text>
<text x="531.8" y="99.0">0</text>
<text x="550.9" y="99.0">0</text>
<text x="570.0" y="99.0">0</text>
<text x="589.0" y="99.0">0</text>
<text x="608.1" y="99.0">0</text>
<text x="627.2" y="99.0">0</text>
<text x="646.3" y="99.0">0</text>
<text x="665.4" y="99.0">0</text>
<text x="684.4" y="99.0">0</text>
<text x="703.5" y="99.0">0</text>
<text x="722.6" y="99.0">0</text>
<text x="741.7" y="99.0">0</text>
<text x="760.7" y="99.0">0</text>
<text x="474.6" y="110.0">0</text>
<text x="493.7" y="110.0">0</text>
<text x="512.8" y="110.0">0</text>
<text x="531.8" y="110.0">0</text>
<text x="550.9" y="110.0">0</text>
<text x="570.0" y="110.0">0</text>
<text x="589.0" y="110.0">0</text>
<text x="608.1" y="110.0">0</text>
<text x="627.2" y="110.0">0</text>
<text x="646.3" y="110.0">0</text>
<text x="665.4" y="110.0">0</text>
<text x="684.4" y="110.0">0</text>
<text x="703.5" y="110.0">0</text>
<text x="722.6" y="110.0">0</text>
<text x="741.7" y="110.0">0</text>
<text x="760.7" y="110.0">0</text>
<text x="474.6" y="121.1">0</text>
<text x="493.7" y="121.1">0</text>
<text x="512.8" y="121.1">0</text>
<text x="531.8" y="121.1">0</text>
<text x="550.9" y="121.1">0</text>
<text x="570.0" y="121.1">0</text>
<text x="589.0" y="121.1">0</text>
<text x="608.1" y="121.1">0</text>
<text x="627.2" y="121.1">0</text>
<text x="646.3" y="121.1">0</text>
<text x="665.4" y="121.1">0</text>
<text x="684.4" y="121.1">0</text>
<text x="703.5" y="121.1">0</text>
<text x="722.6" y="121.1">0</text>
<text x="741.7" y="121.1">0</text>
<text x="760.7" y="121.1">0</text>
<text x="474.6" y="132.2">0</text>
<text x="493.7" y="132.2">0</text>
<text x="512.8" y="132.2">0</text>
<text x="531.8" y="132.2">0</text>
<text x="550.9" y="132.2">0</text>
<text x="570.0" y="132.2">0</text>
<text x="589.0" y="132.2">0</text>
<text x="608.1" y="132.2">0</text>
<text x="627.2" y="132.2">0</text>
<text x="646.3" y="132.2">0</text>
<text x="665.4" y="132.2">0</text>
<text x="684.4" y="132.2">0</text>
<text x="703.5" y="132.2">0</text>
<text x="722.6" y="132.2">0</text>
<text x="741.7" y="132.2">0</text>
<text x="760.7" y="132.2">0</text>
<text x="474.6" y="143.3">0</text>
<text x="493.7" y="143.3">0</text>
<text x="512.8" y="143.3">0</text>
<text x="531.8" y="143.3">0</text>
<text x="550.9" y="143.3">0</text>
<text x="570.0" y="143.3">0</text>
<text x="589.0" y="143.3">0</text>
<text x="608.1" y="143.3">0</text>
<text x="627.2" y="143.3">0</text>
<text x="646.3" y="143.3">0</text>
<text x="665.4" y="143.3">0</text>
<text x="684.4" y="143.3">0</text>
<text x="703.5" y="143.3">0</text>
<text x="722.6" y="143.3">0</text>
<text x="741.7" y="143.3">0</text>
<text x="760.7" y="143.3">0</text>
<text x="474.6" y="154.4">0</text>
<text x="493.7" y="154.4">0</text>
<text x="512.8" y="154.4">0</text>
<text x="531.8" y="154.4">0</text>
<text x="550.9" y="154.4">0</text>
<text x="570.0" y="154.4">0</text>
<text x="589.0" y="154.4">0</text>
<text x="608.1" y="154.4">0</text>
<text x="627.2" y="154.4">0</text>
<text x="646.3" y="154.4">0</text>
<text x="665.4" y="154.4">0</text>
<text x="684.4" y="154.4">0</text>
<text x="703.5" y="154.4">0</text>
<text x="722.6" y="154.4">0</text>
<text x="741.7" y="154.4">0</text>
<text x="760.7" y="154.4">0</text>
<text x="474.6" y="165.5">0</text>
<text x="493.7" y="165.5">0</text>
<text x="512.8" y="165.5">0</text>
<text x="531.8" y="165.5">0</text>
<text x="550.9" y="165.5">0</text>
<text x="570.0" y="165.5">0</text>
<text x="589.0" y="165.5">0</text>
<text x="608.1" y="165.5">0</text>
<text x="627.2" y="165.5">0</text>
<text x="646.3" y="165.5">0</text>
<text x="665.4" y="165.5">0</text>
<text x="684.4" y="165.5">0</text>
<text x="703.5" y="165.5">0</text>
<text x="722.6" y="165.5">0</text>
<text x="741.7" y="165.5">0</text>
<text x="760.7" y="165.5">0</text>
<text x="474.6" y="176.6">0</text>
<text x="493.7" y="176.6">0</text>
<text x="512.8" y="176.6">0</text>
<text x="531.8" y="176.6">0</text>
<text x="550.9" y="176.6">0</text>
<text x="570.0" y="176.6">0</text>
<text x="589.0" y="176.6">0</text>
<text x="608.1" y="176.6">0</text>
<text x="627.2" y="176.6">0</text>
<text x="646.3" y="176.6">0</text>
<text x="665.4" y="176.6">0</text>
<text x="684.4" y="176.6">0</text>
<text x="703.5" y="176.6">0</text>
<text x="722.6" y="176.6">0</text>
<text x="741.7" y="176.6">0</text>
<text x="760.7" y="176.6">0</text>
<text x="474.6" y="187.7">0</text>
<text x="493.7" y="187.7">0</text>
<text x="512.8" y="187.7">0</text>
<text x="531.8" y="187.7">0</text>
<text x="550.9" y="187.7">0</text>
<text x="570.0" y="187.7">0</text>
<text x="589.0" y="187.7">0</text>
<text x="608.1" y="187.7">0</text>
<text x="627.2" y="187.7">0</text>
<text x="646.3" y="187.7">0</text>
<text x="665.4" y="187.7">0</text>
<text x="684.4" y="187.7">0</text>
<text x="703.5" y="187.7">0</text>
<text x="722.6" y="187.7">0</text>
<text x="741.7" y="187.7">0</text>
<text x="760.7" y="187.7">0</text>
<text x="474.6" y="198.8">0</text>
<text x="493.7" y="198.8">0</text>
<text x="512.8" y="198.8">0</text>
<text x="531.8" y="198.8">0</text>
<text x="550.9" y="198.8">0</text>
<text x="570.0" y="198.8">0</text>
<text x="589.0" y="198.8">0</text>
<text x="608.1" y="198.8">0</text>
<text x="627.2" y="198.8">0</text>
<text x="646.3" y="198.8">0</text>
<text x="665.4" y="198.8">0</text>
<text x="684.4" y="198.8">0</text>
<text x="703.5" y="198.8">0</text>
<text x="722.6" y="198.8">0</text>
<text x="741.7" y="198.8">0</text>
<text x="760.7" y="198.8">0</text>
<text x="474.6" y="209.8">0</text>
<text x="493.7" y="209.8">0</text>
<text x="512.8" y="209.8">0</text>
<text x="531.8" y="209.8">0</text>
<text x="550.9" y="209.8">0</text>
<text x="570.0" y="209.8">0</text>
<text x="589.0" y="209.8">0</text>
<text x="608.1" y="209.8">0</text>
<text x="627.2" y="209.8">0</text>
<text x="646.3" y="209.8">0</text>
<text x="665.4" y="209.8">0</text>
<text x="684.4" y="209.8">0</text>
<text x="703.5" y="209.8">0</text>
<text x="722.6" y="209.8">0</text>
<text x="741.7" y="209.8">0</text>
<text x="760.7" y="209.8">0</text>
</g>
<path d="M1078 507.4Q1232 495.5 1385.3 507.4L1388.5 701.8Q1232 713.5 1074.3 701.8Z" fill="#1d5b94" stroke="#2148a8" stroke-width="2" stroke-linejoin="round" />
<text x="1232.5" y="514.2" font-size="11.5" text-anchor="middle" font-weight="bold" class="sans" fill="#fff" style="font-family:'DejaVu Serif','Liberation Serif',serif" textLength="30" lengthAdjust="spacingAndGlyphs">RAM</text>
<rect x="1080.2" y="516.3" width="18.8" height="9.4" fill="#e89a3c"/>
<g class="mono" font-size="8.5" text-anchor="middle" fill="#cfe0f2">
<text x="1089.0" y="523.7">0</text>
<text x="1108.1" y="523.7">0</text>
<text x="1127.3" y="523.7">0</text>
<text x="1146.4" y="523.7">0</text>
<text x="1165.5" y="523.7">0</text>
<text x="1184.7" y="523.7">0</text>
<text x="1203.8" y="523.7">0</text>
<text x="1222.9" y="523.7">0</text>
<text x="1242.0" y="523.7">0</text>
<text x="1261.2" y="523.7">0</text>
<text x="1280.3" y="523.7">0</text>
<text x="1299.4" y="523.7">0</text>
<text x="1318.6" y="523.7">0</text>
<text x="1337.7" y="523.7">0</text>
<text x="1356.8" y="523.7">0</text>
<text x="1376.0" y="523.7">0</text>
<text x="1089.0" y="534.8">0</text>
<text x="1108.1" y="534.8">0</text>
<text x="1127.3" y="534.8">0</text>
<text x="1146.4" y="534.8">0</text>
<text x="1165.5" y="534.8">0</text>
<text x="1184.7" y="534.8">0</text>
<text x="1203.8" y="534.8">0</text>
<text x="1222.9" y="534.8">0</text>
<text x="1242.0" y="534.8">0</text>
<text x="1261.2" y="534.8">0</text>
<text x="1280.3" y="534.8">0</text>
<text x="1299.4" y="534.8">0</text>
<text x="1318.6" y="534.8">0</text>
<text x="1337.7" y="534.8">0</text>
<text x="1356.8" y="534.8">0</text>
<text x="1376.0" y="534.8">0</text>
<text x="1089.0" y="545.9">0</text>
<text x="1108.1" y="545.9">0</text>
<text x="1127.3" y="545.9">0</text>
<text x="1146.4" y="545.9">0</text>
<text x="1165.5" y="545.9">0</text>
<text x="1184.7" y="545.9">0</text>
<text x="1203.8" y="545.9">0</text>
<text x="1222.9" y="545.9">0</text>
<text x="1242.0" y="545.9">0</text>
<text x="1261.2" y="545.9">0</text>
<text x="1280.3" y="545.9">0</text>
<text x="1299.4" y="545.9">0</text>
<text x="1318.6" y="545.9">0</text>
<text x="1337.7" y="545.9">0</text>
<text x="1356.8" y="545.9">0</text>
<text x="1376.0" y="545.9">0</text>
<text x="1089.0" y="556.9">0</text>
<text x="1108.1" y="556.9">0</text>
<text x="1127.3" y="556.9">0</text>
<text x="1146.4" y="556.9">0</text>
<text x="1165.5" y="556.9">0</text>
<text x="1184.7" y="556.9">0</text>
<text x="1203.8" y="556.9">0</text>
<text x="1222.9" y="556.9">0</text>
<text x="1242.0" y="556.9">0</text>
<text x="1261.2" y="556.9">0</text>
<text x="1280.3" y="556.9">0</text>
<text x="1299.4" y="556.9">0</text>
<text x="1318.6" y="556.9">0</text>
<text x="1337.7" y="556.9">0</text>
<text x="1356.8" y="556.9">0</text>
<text x="1376.0" y="556.9">0</text>
<text x="1089.0" y="568.0">0</text>
<text x="1108.1" y="568.0">0</text>
<text x="1127.3" y="568.0">0</text>
<text x="1146.4" y="568.0">0</text>
<text x="1165.5" y="568.0">0</text>
<text x="1184.7" y="568.0">0</text>
<text x="1203.8" y="568.0">0</text>
<text x="1222.9" y="568.0">0</text>
<text x="1242.0" y="568.0">0</text>
<text x="1261.2" y="568.0">0</text>
<text x="1280.3" y="568.0">0</text>
<text x="1299.4" y="568.0">0</text>
<text x="1318.6" y="568.0">0</text>
<text x="1337.7" y="568.0">0</text>
<text x="1356.8" y="568.0">0</text>
<text x="1376.0" y="568.0">0</text>
<text x="1089.0" y="579.1">0</text>
<text x="1108.1" y="579.1">0</text>
<text x="1127.3" y="579.1">0</text>
<text x="1146.4" y="579.1">0</text>
<text x="1165.5" y="579.1">0</text>
<text x="1184.7" y="579.1">0</text>
<text x="1203.8" y="579.1">0</text>
<text x="1222.9" y="579.1">0</text>
<text x="1242.0" y="579.1">0</text>
<text x="1261.2" y="579.1">0</text>
<text x="1280.3" y="579.1">0</text>
<text x="1299.4" y="579.1">0</text>
<text x="1318.6" y="579.1">0</text>
<text x="1337.7" y="579.1">0</text>
<text x="1356.8" y="579.1">0</text>
<text x="1376.0" y="579.1">0</text>
<text x="1089.0" y="590.2">0</text>
<text x="1108.1" y="590.2">0</text>
<text x="1127.3" y="590.2">0</text>
<text x="1146.4" y="590.2">0</text>
<text x="1165.5" y="590.2">0</text>
<text x="1184.7" y="590.2">0</text>
<text x="1203.8" y="590.2">0</text>
<text x="1222.9" y="590.2">0</text>
<text x="1242.0" y="590.2">0</text>
<text x="1261.2" y="590.2">0</text>
<text x="1280.3" y="590.2">0</text>
<text x="1299.4" y="590.2">0</text>
<text x="1318.6" y="590.2">0</text>
<text x="1337.7" y="590.2">0</text>
<text x="1356.8" y="590.2">0</text>
<text x="1376.0" y="590.2">0</text>
<text x="1089.0" y="601.3">0</text>
<text x="1108.1" y="601.3">0</text>
<text x="1127.3" y="601.3">0</text>
<text x="1146.4" y="601.3">0</text>
<text x="1165.5" y="601.3">0</text>
<text x="1184.7" y="601.3">0</text>
<text x="1203.8" y="601.3">0</text>
<text x="1222.9" y="601.3">0</text>
<text x="1242.0" y="601.3">0</text>
<text x="1261.2" y="601.3">0</text>
<text x="1280.3" y="601.3">0</text>
<text x="1299.4" y="601.3">0</text>
<text x="1318.6" y="601.3">0</text>
<text x="1337.7" y="601.3">0</text>
<text x="1356.8" y="601.3">0</text>
<text x="1376.0" y="601.3">0</text>
<text x="1089.0" y="612.3">0</text>
<text x="1108.1" y="612.3">0</text>
<text x="1127.3" y="612.3">0</text>
<text x="1146.4" y="612.3">0</text>
<text x="1165.5" y="612.3">0</text>
<text x="1184.7" y="612.3">0</text>
<text x="1203.8" y="612.3">0</text>
<text x="1222.9" y="612.3">0</text>
<text x="1242.0" y="612.3">0</text>
<text x="1261.2" y="612.3">0</text>
<text x="1280.3" y="612.3">0</text>
<text x="1299.4" y="612.3">0</text>
<text x="1318.6" y="612.3">0</text>
<text x="1337.7" y="612.3">0</text>
<text x="1356.8" y="612.3">0</text>
<text x="1376.0" y="612.3">0</text>
<text x="1089.0" y="623.4">0</text>
<text x="1108.1" y="623.4">0</text>
<text x="1127.3" y="623.4">0</text>
<text x="1146.4" y="623.4">0</text>
<text x="1165.5" y="623.4">0</text>
<text x="1184.7" y="623.4">0</text>
<text x="1203.8" y="623.4">0</text>
<text x="1222.9" y="623.4">0</text>
<text x="1242.0" y="623.4">0</text>
<text x="1261.2" y="623.4">0</text>
<text x="1280.3" y="623.4">0</text>
<text x="1299.4" y="623.4">0</text>
<text x="1318.6" y="623.4">0</text>
<text x="1337.7" y="623.4">0</text>
<text x="1356.8" y="623.4">0</text>
<text x="1376.0" y="623.4">0</text>
<text x="1089.0" y="634.5">0</text>
<text x="1108.1" y="634.5">0</text>
<text x="1127.3" y="634.5">0</text>
<text x="1146.4" y="634.5">0</text>
<text x="1165.5" y="634.5">0</text>
<text x="1184.7" y="634.5">0</text>
<text x="1203.8" y="634.5">0</text>
<text x="1222.9" y="634.5">0</text>
<text x="1242.0" y="634.5">0</text>
<text x="1261.2" y="634.5">0</text>
<text x="1280.3" y="634.5">0</text>
<text x="1299.4" y="634.5">0</text>
<text x="1318.6" y="634.5">0</text>
<text x="1337.7" y="634.5">0</text>
<text x="1356.8" y="634.5">0</text>
<text x="1376.0" y="634.5">0</text>
<text x="1089.0" y="645.6">0</text>
<text x="1108.1" y="645.6">0</text>
<text x="1127.3" y="645.6">0</text>
<text x="1146.4" y="645.6">0</text>
<text x="1165.5" y="645.6">0</text>
<text x="1184.7" y="645.6">0</text>
<text x="1203.8" y="645.6">0</text>
<text x="1222.9" y="645.6">0</text>
<text x="1242.0" y="645.6">0</text>
<text x="1261.2" y="645.6">0</text>
<text x="1280.3" y="645.6">0</text>
<text x="1299.4" y="645.6">0</text>
<text x="1318.6" y="645.6">0</text>
<text x="1337.7" y="645.6">0</text>
<text x="1356.8" y="645.6">0</text>
<text x="1376.0" y="645.6">0</text>
<text x="1089.0" y="656.7">0</text>
<text x="1108.1" y="656.7">0</text>
<text x="1127.3" y="656.7">0</text>
<text x="1146.4" y="656.7">0</text>
<text x="1165.5" y="656.7">0</text>
<text x="1184.7" y="656.7">0</text>
<text x="1203.8" y="656.7">0</text>
<text x="1222.9" y="656.7">0</text>
<text x="1242.0" y="656.7">0</text>
<text x="1261.2" y="656.7">0</text>
<text x="1280.3" y="656.7">0</text>
<text x="1299.4" y="656.7">0</text>
<text x="1318.6" y="656.7">0</text>
<text x="1337.7" y="656.7">0</text>
<text x="1356.8" y="656.7">0</text>
<text x="1376.0" y="656.7">0</text>
<text x="1089.0" y="667.7">0</text>
<text x="1108.1" y="667.7">0</text>
<text x="1127.3" y="667.7">0</text>
<text x="1146.4" y="667.7">0</text>
<text x="1165.5" y="667.7">0</text>
<text x="1184.7" y="667.7">0</text>
<text x="1203.8" y="667.7">0</text>
<text x="1222.9" y="667.7">0</text>
<text x="1242.0" y="667.7">0</text>
<text x="1261.2" y="667.7">0</text>
<text x="1280.3" y="667.7">0</text>
<text x="1299.4" y="667.7">0</text>
<text x="1318.6" y="667.7">0</text>
<text x="1337.7" y="667.7">0</text>
<text x="1356.8" y="667.7">0</text>
<text x="1376.0" y="667.7">0</text>
<text x="1089.0" y="678.8">0</text>
<text x="1108.1" y="678.8">0</text>
<text x="1127.3" y="678.8">0</text>
<text x="1146.4" y="678.8">0</text>
<text x="1165.5" y="678.8">0</text>
<text x="1184.7" y="678.8">0</text>
<text x="1203.8" y="678.8">0</text>
<text x="1222.9" y="678.8">0</text>
<text x="1242.0" y="678.8">0</text>
<text x="1261.2" y="678.8">0</text>
<text x="1280.3" y="678.8">0</text>
<text x="1299.4" y="678.8">0</text>
<text x="1318.6" y="678.8">0</text>
<text x="1337.7" y="678.8">0</text>
<text x="1356.8" y="678.8">0</text>
<text x="1376.0" y="678.8">0</text>
<text x="1089.0" y="689.9">0</text>
<text x="1108.1" y="689.9">0</text>
<text x="1127.3" y="689.9">0</text>
<text x="1146.4" y="689.9">0</text>
<text x="1165.5" y="689.9">0</text>
<text x="1184.7" y="689.9">0</text>
<text x="1203.8" y="689.9">0</text>
<text x="1222.9" y="689.9">0</text>
<text x="1242.0" y="689.9">0</text>
<text x="1261.2" y="689.9">0</text>
<text x="1280.3" y="689.9">0</text>
<text x="1299.4" y="689.9">0</text>
<text x="1318.6" y="689.9">0</text>
<text x="1337.7" y="689.9">0</text>
<text x="1356.8" y="689.9">0</text>
<text x="1376.0" y="689.9">0</text>
</g>
<circle cx="1071.97" cy="518.42" r="5.3" fill="#e7a03a"/>
<circle cx="1071.97" cy="518.42" r="2.7" fill="#e0707a"/>
<circle cx="1071.97" cy="530.73" r="5.3" fill="#e56b49"/>
<circle cx="1071.97" cy="530.73" r="2.7" fill="#e8a040"/>
<circle cx="1071.97" cy="543.04" r="5.3" fill="#5a55e8"/>
<circle cx="1071.97" cy="543.04" r="2.7" fill="#e0556e"/>
<circle cx="1071.97" cy="555.35" r="5.3" fill="#3f99d1"/>
<circle cx="1071.97" cy="555.35" r="2.7" fill="#d8962f"/>
<rect x="1067.67" y="563.36" width="8.6" height="8.6" rx="1.5" fill="#e7a03a"/>
<circle cx="1071.97" cy="567.66" r="2.6" fill="#b87a28"/>
<rect x="1067.67" y="575.6700000000001" width="8.6" height="8.6" rx="1.5" fill="#e7a03a"/>
<circle cx="1071.97" cy="579.97" r="2.6" fill="#b87a28"/>
<rect x="1067.67" y="587.98" width="8.6" height="8.6" rx="1.5" fill="#e7a03a"/>
<circle cx="1071.97" cy="592.28" r="2.6" fill="#b87a28"/>
<circle cx="1392.03" cy="518.42" r="5.3" fill="#3ccd3c"/>
<circle cx="1392.03" cy="518.42" r="3" fill="#b8343e"/>
<circle cx="1392.03" cy="530.73" r="4.5" fill="#d8405a"/>
<circle cx="1392.03" cy="530.73" r="2.8" fill="#b8343e"/>
<circle cx="1392.03" cy="543.04" r="4.5" fill="#d8405a"/>
<circle cx="1392.03" cy="543.04" r="2.8" fill="#b8343e"/>
<circle cx="1392.03" cy="555.35" r="4.5" fill="#d8405a"/>
<circle cx="1392.03" cy="555.35" r="2.8" fill="#b8343e"/>
<circle cx="724" cy="20" r="15" fill="#cf4b5c"/>
<rect x="718.2" y="14.6" width="11.6" height="10.4" rx="1" fill="none" stroke="#f3d6da" stroke-width="1.5"/><rect x="719.6" y="21" width="2.4" height="2.2" fill="#f3d6da"/><rect x="722.9" y="21" width="2.4" height="2.2" fill="#f3d6da"/><rect x="726.2" y="21" width="2.4" height="2.2" fill="#f3d6da"/>
<circle cx="757.8" cy="20" r="15" fill="#e19b3d"/>
<path d="M751.5 24.2l1.2-3.6 7.2-4.6 2.6 2.4-7.4 4.8z" fill="#f6e3c6"/>
<circle cx="456.47" cy="38.33" r="5.3" fill="#3f99d1"/>
<circle cx="456.47" cy="38.33" r="2.7" fill="#e0556e"/>
<circle cx="776.53" cy="38.33" r="5.3" fill="#7b7b7b"/>
<circle cx="776.53" cy="38.33" r="2.7" fill="#b8344a"/>
<circle cx="776.53" cy="50.64" r="5.3" fill="#ffffff"/>
<circle cx="776.53" cy="50.64" r="2.7" fill="#b8344a"/>
<circle cx="776.53" cy="62.95" r="5.3" fill="#46e39a"/>
<circle cx="776.53" cy="62.95" r="2.7" fill="#256b34"/>
<circle cx="776.53" cy="75.26" r="5.3" fill="#3ccd3c"/>
<circle cx="776.53" cy="75.26" r="2.7" fill="#256b34"/>
<text x="806.0" y="42.3" font-size="12.8" text-anchor="middle" font-weight="bold" class="mono" fill="#fff" stroke="#1c1c1c" stroke-width="1.5" paint-order="stroke" stroke-linejoin="round">OPCODE</text>
<text x="813.0" y="54.6" font-size="12.8" text-anchor="middle" font-weight="bold" class="mono" fill="#fff" stroke="#1c1c1c" stroke-width="1.5" paint-order="stroke" stroke-linejoin="round">ARG1</text>
<text x="819.0" y="67.0" font-size="12.8" text-anchor="middle" font-weight="bold" class="mono" fill="#fff" stroke="#1c1c1c" stroke-width="1.5" paint-order="stroke" stroke-linejoin="round">ARG2</text>
<text x="819.0" y="79.3" font-size="12.8" text-anchor="middle" font-weight="bold" class="mono" fill="#fff" stroke="#1c1c1c" stroke-width="1.5" paint-order="stroke" stroke-linejoin="round">DEST</text>
<text x="639.5" y="252.0" font-size="12.8" text-anchor="middle" font-weight="bold" class="mono" fill="#fff" stroke="#1c1c1c" stroke-width="1.5" paint-order="stroke" stroke-linejoin="round">OPCODE</text>
<path d="M369.68 109.11L391.23 106.65L391.23 207.59L369.68 203.9L369.68 157.74L373.38 154.04L373.38 144.2L369.68 140.5Z" fill="#124c9b" stroke="#1c46a0" stroke-width="1.6" stroke-linejoin="round" />
<text x="385.1" y="115.2" font-size="8" text-anchor="end" font-weight="normal" class="mono" fill="#dbe8f6" >1</text>
<path d="M386.92 109.99l2.6 2.2-2.6 2.2z" fill="#fff"/>
<text x="385.1" y="127.5" font-size="8" text-anchor="end" font-weight="normal" class="mono" fill="#dbe8f6" >2</text>
<path d="M386.92 122.3l2.6 2.2-2.6 2.2z" fill="#fff"/>
<text x="385.1" y="139.8" font-size="8" text-anchor="end" font-weight="normal" class="mono" fill="#dbe8f6" >4</text>
<path d="M386.92 134.61l2.6 2.2-2.6 2.2z" fill="#fff"/>
<text x="385.1" y="152.1" font-size="8" text-anchor="end" font-weight="normal" class="mono" fill="#dbe8f6" >8</text>
<path d="M386.92 146.92000000000002l2.6 2.2-2.6 2.2z" fill="#fff"/>
<text x="385.1" y="164.4" font-size="8" text-anchor="end" font-weight="normal" class="mono" fill="#dbe8f6" >16</text>
<path d="M386.92 159.23000000000002l2.6 2.2-2.6 2.2z" fill="#fff"/>
<text x="385.1" y="176.7" font-size="8" text-anchor="end" font-weight="normal" class="mono" fill="#dbe8f6" >32</text>
<path d="M386.92 171.54000000000002l2.6 2.2-2.6 2.2z" fill="#fff"/>
<text x="385.1" y="189.1" font-size="8" text-anchor="end" font-weight="normal" class="mono" fill="#dbe8f6" >64</text>
<path d="M386.92 183.85000000000002l2.6 2.2-2.6 2.2z" fill="#fff"/>
<text x="385.1" y="201.4" font-size="8" text-anchor="end" font-weight="normal" class="mono" fill="#dbe8f6" >128</text>
<path d="M386.92 196.16000000000003l2.6 2.2-2.6 2.2z" fill="#fff"/>
<circle cx="370.3" cy="149.12" r="5.3" fill="#7b7b7b"/>
<circle cx="370.3" cy="149.12" r="2.7" fill="#d86a78"/>
<circle cx="394.92" cy="112.19" r="3.4" fill="#e0405c"/>
<circle cx="394.92" cy="124.5" r="3.4" fill="#e0405c"/>
<circle cx="394.92" cy="136.81" r="3.4" fill="#e0405c"/>
<circle cx="394.92" cy="149.12" r="3.4" fill="#e0405c"/>
<circle cx="394.92" cy="161.43" r="5.3" fill="#41d9e6"/>
<circle cx="394.92" cy="161.43" r="2.7" fill="#e0405c"/>
<circle cx="394.92" cy="173.74" r="5.3" fill="#41d9e6"/>
<circle cx="394.92" cy="173.74" r="2.7" fill="#e0405c"/>
<circle cx="394.92" cy="186.05" r="5.3" fill="#41d9e6"/>
<circle cx="394.92" cy="186.05" r="2.7" fill="#e0405c"/>
<circle cx="394.92" cy="198.36" r="5.3" fill="#41d9e6"/>
<circle cx="394.92" cy="198.36" r="2.7" fill="#e0405c"/>
<circle cx="407.23" cy="149.12" r="5.3" fill="#41d9e6"/>
<circle cx="407.23" cy="149.12" r="2.7" fill="#e06a78"/>
<circle cx="407.23" cy="173.74" r="5.3" fill="#41d9e6"/>
<circle cx="407.23" cy="173.74" r="2.7" fill="#e06a78"/>
<g transform="translate(423.9 161.4) rotate(0) scale(1.0)">
<path d="M-17 -17.3Q4 -17.3 17 0Q4 17.3 -17 17.3Q-11 0 -17 -17.3Z" fill="#1e5b96" stroke="#1c46a0" stroke-width="1.6" stroke-linejoin="round" />
</g>
<circle cx="407.23" cy="149.12" r="2.7" fill="#e06a78" opacity="0.55"/>
<circle cx="407.23" cy="173.74" r="2.7" fill="#e06a78" opacity="0.55"/>
<circle cx="444.16" cy="161.43" r="5.3" fill="#41d9e6"/>
<circle cx="444.16" cy="161.43" r="2.7" fill="#e0405c"/>
<text x="0.0" y="4.8" font-size="13.5" text-anchor="middle" font-weight="normal" class="sans" fill="#fff" transform="translate(423.9 161.4) rotate(0) translate(-1.5 0)" textLength="16.5" lengthAdjust="spacingAndGlyphs">OR</text>
<circle cx="74.86" cy="284.53" r="5.3" fill="#e7a03a"/>
<circle cx="74.86" cy="284.53" r="2.7" fill="#e06a78"/>
<circle cx="87.17" cy="284.53" r="5.3" fill="#e7a03a"/>
<circle cx="87.17" cy="284.53" r="2.7" fill="#e06a78"/>
<circle cx="99.48" cy="284.53" r="5.3" fill="#e56b49"/>
<circle cx="99.48" cy="284.53" r="2.7" fill="#e06a78"/>
<g transform="translate(87.2 267.9) rotate(-90) scale(1.0)">
<path d="M-17 -17.3Q4 -17.3 17 0Q4 17.3 -17 17.3Q-11 0 -17 -17.3Z" fill="#1e5b96" stroke="#1c46a0" stroke-width="1.6" stroke-linejoin="round" />
</g>
<circle cx="87.17" cy="247.6" r="5.3" fill="#e56b49"/>
<circle cx="87.17" cy="247.6" r="2.7" fill="#e0405c"/>
<circle cx="74.86" cy="284.53" r="2.7" fill="#e06a78" opacity="0.55"/>
<circle cx="87.17" cy="284.53" r="2.7" fill="#e06a78" opacity="0.55"/>
<circle cx="99.48" cy="284.53" r="2.7" fill="#e06a78" opacity="0.55"/>
<text x="0.0" y="4.8" font-size="13.5" text-anchor="middle" font-weight="normal" class="sans" fill="#fff" transform="translate(87.2 267.9) rotate(-90) translate(-1.5 0)" textLength="16.5" lengthAdjust="spacingAndGlyphs">OR</text>
<circle cx="321.06" cy="259.91" r="5.3" fill="#e7a03a"/>
<circle cx="321.06" cy="259.91" r="2.7" fill="#e06a78"/>
<circle cx="345.68" cy="259.91" r="5.3" fill="#e7a03a"/>
<circle cx="345.68" cy="259.91" r="2.7" fill="#e06a78"/>
<g transform="translate(333.4 277.1) rotate(90) scale(1.0)">
<path d="M-17 -17.3Q4 -17.3 17 0Q4 17.3 -17 17.3Q-11 0 -17 -17.3Z" fill="#1e5b96" stroke="#1c46a0" stroke-width="1.6" stroke-linejoin="round" />
</g>
<circle cx="321.06" cy="259.91" r="2.7" fill="#e06a78" opacity="0.55"/>
<circle cx="345.68" cy="259.91" r="2.7" fill="#e06a78" opacity="0.55"/>
<circle cx="333.37" cy="296.84" r="5.3" fill="#e7a03a"/>
<circle cx="333.37" cy="296.84" r="2.7" fill="#e0405c"/>
<text x="0.0" y="4.8" font-size="13.5" text-anchor="middle" font-weight="normal" class="sans" fill="#fff" transform="translate(333.4 277.1) rotate(90) translate(-1.5 0)" textLength="16.5" lengthAdjust="spacingAndGlyphs">OR</text>
<circle cx="345.68" cy="296.84" r="5.3" fill="#e7a03a"/>
<circle cx="345.68" cy="296.84" r="2.7" fill="#e06a78"/>
<circle cx="345.68" cy="321.46" r="5.3" fill="#e7a03a"/>
<circle cx="345.68" cy="321.46" r="2.7" fill="#e06a78"/>
<g transform="translate(363.5 309.1) rotate(0) scale(1.0)">
<path d="M-17 -17.3Q4 -17.3 17 0Q4 17.3 -17 17.3Q-11 0 -17 -17.3Z" fill="#1e5b96" stroke="#1c46a0" stroke-width="1.6" stroke-linejoin="round" />
</g>
<circle cx="345.68" cy="296.84" r="2.7" fill="#e06a78" opacity="0.55"/>
<circle cx="345.68" cy="321.46" r="2.7" fill="#e06a78" opacity="0.55"/>
<circle cx="382.61" cy="309.15" r="5.3" fill="#e7a03a"/>
<circle cx="382.61" cy="309.15" r="2.7" fill="#e0405c"/>
<text x="0.0" y="4.8" font-size="13.5" text-anchor="middle" font-weight="normal" class="sans" fill="#fff" transform="translate(363.5 309.1) rotate(0) translate(-1.5 0)" textLength="16.5" lengthAdjust="spacingAndGlyphs">OR</text>
<path d="M131.49 211.9L147.74 217.44L147.74 226.67L124.1 233.69L125.95 219.29Z" fill="#1e5b96" stroke="#1c46a0" stroke-width="1.6" stroke-linejoin="round" />
<circle cx="124.1" cy="222.98" r="5.3" fill="#3f99d1"/>
<circle cx="124.1" cy="222.98" r="2.7" fill="#d86a78"/>
<circle cx="136.41" cy="210.67" r="5.3" fill="#9a40e2"/>
<circle cx="136.41" cy="210.67" r="2.7" fill="#d86a78"/>
<circle cx="148.72" cy="222.98" r="5.3" fill="#dde53e"/>
<circle cx="148.72" cy="222.98" r="2.7" fill="#8c8c8c"/>
<path d="M131.73 215.35L147.49 217.81L147.49 226.43L127.79 231.6L127.79 219.29Z" fill="#1e5b96" stroke="none" stroke-width="0" stroke-linejoin="round" />
<circle cx="124.1" cy="222.98" r="2.7" fill="#d86a78"/>
<text x="137.3" y="226.9" font-size="12.3" text-anchor="middle" font-weight="bold" class="sans" fill="#fff" textLength="20.5" lengthAdjust="spacingAndGlyphs">SWC</text>
<circle cx="148.72" cy="211.29" r="4.6" fill="#d8504e"/>
<text x="148.7" y="213.7" font-size="7" text-anchor="middle" font-weight="bold" class="mono" fill="#fff" >8</text>
<path d="M131.49 248.83L147.74 254.37L147.74 263.6L124.1 270.62L125.95 256.22Z" fill="#1e5b96" stroke="#1c46a0" stroke-width="1.6" stroke-linejoin="round" />
<circle cx="124.1" cy="259.91" r="5.3" fill="#3f99d1"/>
<circle cx="124.1" cy="259.91" r="2.7" fill="#d86a78"/>
<circle cx="136.41" cy="247.6" r="5.3" fill="#e33fc8"/>
<circle cx="136.41" cy="247.6" r="2.7" fill="#d86a78"/>
<circle cx="148.72" cy="259.91" r="5.3" fill="#93e23f"/>
<circle cx="148.72" cy="259.91" r="2.7" fill="#8c8c8c"/>
<path d="M131.73 252.28L147.49 254.74L147.49 263.36L127.79 268.53L127.79 256.22Z" fill="#1e5b96" stroke="none" stroke-width="0" stroke-linejoin="round" />
<circle cx="124.1" cy="259.91" r="2.7" fill="#d86a78"/>
<text x="137.3" y="263.8" font-size="12.3" text-anchor="middle" font-weight="bold" class="sans" fill="#fff" textLength="20.5" lengthAdjust="spacingAndGlyphs">SWC</text>
<circle cx="148.72" cy="248.22" r="4.6" fill="#d8504e"/>
<text x="148.7" y="250.6" font-size="7" text-anchor="middle" font-weight="bold" class="mono" fill="#fff" >8</text>
<path d="M919.33 421.17L935.58 426.71L935.58 435.94L911.94 442.96L913.79 428.56Z" fill="#1e5b96" stroke="#1c46a0" stroke-width="1.6" stroke-linejoin="round" />
<circle cx="911.94" cy="432.25" r="5.3" fill="#3f99d1"/>
<circle cx="911.94" cy="432.25" r="2.7" fill="#d86a78"/>
<circle cx="924.25" cy="419.94" r="5.3" fill="#9a40e2"/>
<circle cx="924.25" cy="419.94" r="2.7" fill="#d86a78"/>
<circle cx="936.56" cy="432.25" r="5.3" fill="#dde53e"/>
<circle cx="936.56" cy="432.25" r="2.7" fill="#8c8c8c"/>
<path d="M919.57 424.62L935.33 427.08L935.33 435.7L915.63 440.87L915.63 428.56Z" fill="#1e5b96" stroke="none" stroke-width="0" stroke-linejoin="round" />
<circle cx="911.94" cy="432.25" r="2.7" fill="#d86a78"/>
<text x="925.1" y="436.1" font-size="12.3" text-anchor="middle" font-weight="bold" class="sans" fill="#fff" textLength="20.5" lengthAdjust="spacingAndGlyphs">SWC</text>
<circle cx="936.56" cy="420.56" r="4.6" fill="#d8504e"/>
<text x="936.6" y="423.0" font-size="7" text-anchor="middle" font-weight="bold" class="mono" fill="#fff" >8</text>
<path d="M919.33 458.1L935.58 463.64L935.58 472.87L911.94 479.89L913.79 465.49Z" fill="#1e5b96" stroke="#1c46a0" stroke-width="1.6" stroke-linejoin="round" />
<circle cx="911.94" cy="469.18" r="5.3" fill="#3f99d1"/>
<circle cx="911.94" cy="469.18" r="2.7" fill="#d86a78"/>
<circle cx="924.25" cy="456.87" r="5.3" fill="#e33fc8"/>
<circle cx="924.25" cy="456.87" r="2.7" fill="#d86a78"/>
<circle cx="936.56" cy="469.18" r="5.3" fill="#93e23f"/>
<circle cx="936.56" cy="469.18" r="2.7" fill="#8c8c8c"/>
<path d="M919.57 461.55L935.33 464.01L935.33 472.63L915.63 477.8L915.63 465.49Z" fill="#1e5b96" stroke="none" stroke-width="0" stroke-linejoin="round" />
<circle cx="911.94" cy="469.18" r="2.7" fill="#d86a78"/>
<text x="925.1" y="473.1" font-size="12.3" text-anchor="middle" font-weight="bold" class="sans" fill="#fff" textLength="20.5" lengthAdjust="spacingAndGlyphs">SWC</text>
<circle cx="936.56" cy="457.49" r="4.6" fill="#d8504e"/>
<text x="936.6" y="459.9" font-size="7" text-anchor="middle" font-weight="bold" class="mono" fill="#fff" >8</text>
<path d="M919.33 495.03L935.58 500.57L935.58 509.8L911.94 516.82L913.79 502.42Z" fill="#1e5b96" stroke="#1c46a0" stroke-width="1.6" stroke-linejoin="round" />
<circle cx="911.94" cy="506.11" r="5.3" fill="#3f99d1"/>
<circle cx="911.94" cy="506.11" r="2.7" fill="#d86a78"/>
<circle cx="924.25" cy="493.8" r="5.3" fill="#9a40e2"/>
<circle cx="924.25" cy="493.8" r="2.7" fill="#d86a78"/>
<circle cx="936.56" cy="506.11" r="5.3" fill="#dde53e"/>
<circle cx="936.56" cy="506.11" r="2.7" fill="#8c8c8c"/>
<path d="M919.57 498.48L935.33 500.94L935.33 509.56L915.63 514.73L915.63 502.42Z" fill="#1e5b96" stroke="none" stroke-width="0" stroke-linejoin="round" />
<circle cx="911.94" cy="506.11" r="2.7" fill="#d86a78"/>
<text x="925.1" y="510.0" font-size="12.3" text-anchor="middle" font-weight="bold" class="sans" fill="#fff" textLength="20.5" lengthAdjust="spacingAndGlyphs">SWC</text>
<circle cx="936.56" cy="494.42" r="4.6" fill="#d8504e"/>
<text x="936.6" y="496.8" font-size="7" text-anchor="middle" font-weight="bold" class="mono" fill="#fff" >8</text>
<path d="M919.33 531.96L935.58 537.5L935.58 546.73L911.94 553.75L913.79 539.35Z" fill="#1e5b96" stroke="#1c46a0" stroke-width="1.6" stroke-linejoin="round" />
<circle cx="911.94" cy="543.04" r="5.3" fill="#3f99d1"/>
<circle cx="911.94" cy="543.04" r="2.7" fill="#d86a78"/>
<circle cx="924.25" cy="530.73" r="5.3" fill="#e33fc8"/>
<circle cx="924.25" cy="530.73" r="2.7" fill="#d86a78"/>
<circle cx="936.56" cy="543.04" r="5.3" fill="#93e23f"/>
<circle cx="936.56" cy="543.04" r="2.7" fill="#8c8c8c"/>
<path d="M919.57 535.41L935.33 537.87L935.33 546.49L915.63 551.66L915.63 539.35Z" fill="#1e5b96" stroke="none" stroke-width="0" stroke-linejoin="round" />
<circle cx="911.94" cy="543.04" r="2.7" fill="#d86a78"/>
<text x="925.1" y="546.9" font-size="12.3" text-anchor="middle" font-weight="bold" class="sans" fill="#fff" textLength="20.5" lengthAdjust="spacingAndGlyphs">SWC</text>
<circle cx="936.56" cy="531.35" r="4.6" fill="#d8504e"/>
<text x="936.6" y="533.8" font-size="7" text-anchor="middle" font-weight="bold" class="mono" fill="#fff" >8</text>
<path d="M919.33 568.89L935.58 574.43L935.58 583.66L911.94 590.68L913.79 576.28Z" fill="#1e5b96" stroke="#1c46a0" stroke-width="1.6" stroke-linejoin="round" />
<circle cx="911.94" cy="579.97" r="5.3" fill="#3f99d1"/>
<circle cx="911.94" cy="579.97" r="2.7" fill="#d86a78"/>
<circle cx="924.25" cy="567.66" r="5.3" fill="#9a40e2"/>
<circle cx="924.25" cy="567.66" r="2.7" fill="#d86a78"/>
<circle cx="936.56" cy="579.97" r="5.3" fill="#dde53e"/>
<circle cx="936.56" cy="579.97" r="2.7" fill="#8c8c8c"/>
<path d="M919.57 572.34L935.33 574.8L935.33 583.42L915.63 588.59L915.63 576.28Z" fill="#1e5b96" stroke="none" stroke-width="0" stroke-linejoin="round" />
<circle cx="911.94" cy="579.97" r="2.7" fill="#d86a78"/>
<text x="925.1" y="583.9" font-size="12.3" text-anchor="middle" font-weight="bold" class="sans" fill="#fff" textLength="20.5" lengthAdjust="spacingAndGlyphs">SWC</text>
<circle cx="936.56" cy="568.28" r="4.6" fill="#d8504e"/>
<text x="936.6" y="570.7" font-size="7" text-anchor="middle" font-weight="bold" class="mono" fill="#fff" >8</text>
<path d="M919.33 605.82L935.58 611.36L935.58 620.59L911.94 627.61L913.79 613.21Z" fill="#1e5b96" stroke="#1c46a0" stroke-width="1.6" stroke-linejoin="round" />
<circle cx="911.94" cy="616.9" r="5.3" fill="#3f99d1"/>
<circle cx="911.94" cy="616.9" r="2.7" fill="#d86a78"/>
<circle cx="924.25" cy="604.59" r="5.3" fill="#e33fc8"/>
<circle cx="924.25" cy="604.59" r="2.7" fill="#d86a78"/>
<circle cx="936.56" cy="616.9" r="5.3" fill="#93e23f"/>
<circle cx="936.56" cy="616.9" r="2.7" fill="#8c8c8c"/>
<path d="M919.57 609.27L935.33 611.73L935.33 620.35L915.63 625.52L915.63 613.21Z" fill="#1e5b96" stroke="none" stroke-width="0" stroke-linejoin="round" />
<circle cx="911.94" cy="616.9" r="2.7" fill="#d86a78"/>
<text x="925.1" y="620.8" font-size="12.3" text-anchor="middle" font-weight="bold" class="sans" fill="#fff" textLength="20.5" lengthAdjust="spacingAndGlyphs">SWC</text>
<circle cx="936.56" cy="605.21" r="4.6" fill="#d8504e"/>
<text x="936.6" y="607.6" font-size="7" text-anchor="middle" font-weight="bold" class="mono" fill="#fff" >8</text>
<path d="M919.33 642.75L935.58 648.29L935.58 657.52L911.94 664.54L913.79 650.14Z" fill="#1e5b96" stroke="#1c46a0" stroke-width="1.6" stroke-linejoin="round" />
<circle cx="911.94" cy="653.83" r="5.3" fill="#3f99d1"/>
<circle cx="911.94" cy="653.83" r="2.7" fill="#d86a78"/>
<circle cx="924.25" cy="641.52" r="5.3" fill="#9a40e2"/>
<circle cx="924.25" cy="641.52" r="2.7" fill="#d86a78"/>
<circle cx="936.56" cy="653.83" r="5.3" fill="#dde53e"/>
<circle cx="936.56" cy="653.83" r="2.7" fill="#8c8c8c"/>
<path d="M919.57 646.2L935.33 648.66L935.33 657.28L915.63 662.45L915.63 650.14Z" fill="#1e5b96" stroke="none" stroke-width="0" stroke-linejoin="round" />
<circle cx="911.94" cy="653.83" r="2.7" fill="#d86a78"/>
<text x="925.1" y="657.7" font-size="12.3" text-anchor="middle" font-weight="bold" class="sans" fill="#fff" textLength="20.5" lengthAdjust="spacingAndGlyphs">SWC</text>
<circle cx="936.56" cy="642.14" r="4.6" fill="#d8504e"/>
<text x="936.6" y="644.5" font-size="7" text-anchor="middle" font-weight="bold" class="mono" fill="#fff" >8</text>
<path d="M919.33 679.68L935.58 685.22L935.58 694.45L911.94 701.47L913.79 687.07Z" fill="#1e5b96" stroke="#1c46a0" stroke-width="1.6" stroke-linejoin="round" />
<circle cx="911.94" cy="690.76" r="5.3" fill="#3f99d1"/>
<circle cx="911.94" cy="690.76" r="2.7" fill="#d86a78"/>
<circle cx="924.25" cy="678.45" r="5.3" fill="#e33fc8"/>
<circle cx="924.25" cy="678.45" r="2.7" fill="#d86a78"/>
<circle cx="936.56" cy="690.76" r="5.3" fill="#93e23f"/>
<circle cx="936.56" cy="690.76" r="2.7" fill="#8c8c8c"/>
<path d="M919.57 683.13L935.33 685.59L935.33 694.21L915.63 699.38L915.63 687.07Z" fill="#1e5b96" stroke="none" stroke-width="0" stroke-linejoin="round" />
<circle cx="911.94" cy="690.76" r="2.7" fill="#d86a78"/>
<text x="925.1" y="694.7" font-size="12.3" text-anchor="middle" font-weight="bold" class="sans" fill="#fff" textLength="20.5" lengthAdjust="spacingAndGlyphs">SWC</text>
<circle cx="936.56" cy="679.07" r="4.6" fill="#d8504e"/>
<text x="936.6" y="681.5" font-size="7" text-anchor="middle" font-weight="bold" class="mono" fill="#fff" >8</text>
<path d="M919.33 716.61L935.58 722.15L935.58 731.38L911.94 738.4L913.79 724.0Z" fill="#1e5b96" stroke="#1c46a0" stroke-width="1.6" stroke-linejoin="round" />
<circle cx="911.94" cy="727.69" r="5.3" fill="#3f99d1"/>
<circle cx="911.94" cy="727.69" r="2.7" fill="#d86a78"/>
<circle cx="924.25" cy="715.38" r="5.3" fill="#9a40e2"/>
<circle cx="924.25" cy="715.38" r="2.7" fill="#d86a78"/>
<circle cx="936.56" cy="727.69" r="5.3" fill="#dde53e"/>
<circle cx="936.56" cy="727.69" r="2.7" fill="#8c8c8c"/>
<path d="M919.57 720.06L935.33 722.52L935.33 731.14L915.63 736.31L915.63 724.0Z" fill="#1e5b96" stroke="none" stroke-width="0" stroke-linejoin="round" />
<circle cx="911.94" cy="727.69" r="2.7" fill="#d86a78"/>
<text x="925.1" y="731.6" font-size="12.3" text-anchor="middle" font-weight="bold" class="sans" fill="#fff" textLength="20.5" lengthAdjust="spacingAndGlyphs">SWC</text>
<circle cx="936.56" cy="716.0" r="4.6" fill="#d8504e"/>
<text x="936.6" y="718.4" font-size="7" text-anchor="middle" font-weight="bold" class="mono" fill="#fff" >8</text>
<path d="M919.33 753.54L935.58 759.08L935.58 768.31L911.94 775.33L913.79 760.93Z" fill="#1e5b96" stroke="#1c46a0" stroke-width="1.6" stroke-linejoin="round" />
<circle cx="911.94" cy="764.62" r="5.3" fill="#3f99d1"/>
<circle cx="911.94" cy="764.62" r="2.7" fill="#d86a78"/>
<circle cx="924.25" cy="752.31" r="5.3" fill="#e33fc8"/>
<circle cx="924.25" cy="752.31" r="2.7" fill="#d86a78"/>
<circle cx="936.56" cy="764.62" r="5.3" fill="#93e23f"/>
<circle cx="936.56" cy="764.62" r="2.7" fill="#8c8c8c"/>
<path d="M919.57 756.99L935.33 759.45L935.33 768.07L915.63 773.24L915.63 760.93Z" fill="#1e5b96" stroke="none" stroke-width="0" stroke-linejoin="round" />
<circle cx="911.94" cy="764.62" r="2.7" fill="#d86a78"/>
<text x="925.1" y="768.5" font-size="12.3" text-anchor="middle" font-weight="bold" class="sans" fill="#fff" textLength="20.5" lengthAdjust="spacingAndGlyphs">SWC</text>
<circle cx="936.56" cy="752.93" r="4.6" fill="#d8504e"/>
<text x="936.6" y="755.3" font-size="7" text-anchor="middle" font-weight="bold" class="mono" fill="#fff" >8</text>
<path d="M1202.46 790.47L1218.71 796.01L1218.71 805.24L1195.07 812.26L1196.92 797.86Z" fill="#1e5b96" stroke="#1c46a0" stroke-width="1.6" stroke-linejoin="round" />
<circle cx="1195.07" cy="801.55" r="5.3" fill="#3ccd3c"/>
<circle cx="1195.07" cy="801.55" r="2.7" fill="#d86a78"/>
<circle cx="1207.38" cy="789.24" r="5.3" fill="#9a40e2"/>
<circle cx="1207.38" cy="789.24" r="2.7" fill="#d86a78"/>
<circle cx="1219.69" cy="801.55" r="5.3" fill="#dde53e"/>
<circle cx="1219.69" cy="801.55" r="2.7" fill="#8c8c8c"/>
<path d="M1202.7 793.92L1218.46 796.38L1218.46 805.0L1198.76 810.17L1198.76 797.86Z" fill="#1e5b96" stroke="none" stroke-width="0" stroke-linejoin="round" />
<circle cx="1195.07" cy="801.55" r="2.7" fill="#d86a78"/>
<text x="1208.2" y="805.4" font-size="12.3" text-anchor="middle" font-weight="bold" class="sans" fill="#fff" textLength="20.5" lengthAdjust="spacingAndGlyphs">SWC</text>
<circle cx="1219.69" cy="789.86" r="4.6" fill="#d8504e"/>
<text x="1219.7" y="792.3" font-size="7" text-anchor="middle" font-weight="bold" class="mono" fill="#fff" >8</text>
<path d="M1202.46 827.4L1218.71 832.94L1218.71 842.17L1195.07 849.19L1196.92 834.79Z" fill="#1e5b96" stroke="#1c46a0" stroke-width="1.6" stroke-linejoin="round" />
<circle cx="1195.07" cy="838.48" r="5.3" fill="#3f99d1"/>
<circle cx="1195.07" cy="838.48" r="2.7" fill="#d86a78"/>
<circle cx="1207.38" cy="826.17" r="5.3" fill="#e33fc8"/>
<circle cx="1207.38" cy="826.17" r="2.7" fill="#d86a78"/>
<circle cx="1219.69" cy="838.48" r="5.3" fill="#93e23f"/>
<circle cx="1219.69" cy="838.48" r="2.7" fill="#8c8c8c"/>
<path d="M1202.7 830.85L1218.46 833.31L1218.46 841.93L1198.76 847.1L1198.76 834.79Z" fill="#1e5b96" stroke="none" stroke-width="0" stroke-linejoin="round" />
<circle cx="1195.07" cy="838.48" r="2.7" fill="#d86a78"/>
<text x="1208.2" y="842.4" font-size="12.3" text-anchor="middle" font-weight="bold" class="sans" fill="#fff" textLength="20.5" lengthAdjust="spacingAndGlyphs">SWC</text>
<circle cx="1219.69" cy="826.79" r="4.6" fill="#d8504e"/>
<text x="1219.7" y="829.2" font-size="7" text-anchor="middle" font-weight="bold" class="mono" fill="#fff" >8</text>
<path d="M365.38 839.71L381.63 845.25L381.63 854.48L357.99 861.5L359.84 847.1Z" fill="#1e5b96" stroke="#1c46a0" stroke-width="1.6" stroke-linejoin="round" />
<circle cx="357.99" cy="850.79" r="5.3" fill="#3f99d1"/>
<circle cx="357.99" cy="850.79" r="2.7" fill="#d86a78"/>
<circle cx="370.3" cy="838.48" r="5.3" fill="#9a40e2"/>
<circle cx="370.3" cy="838.48" r="2.7" fill="#d86a78"/>
<circle cx="382.61" cy="850.79" r="5.3" fill="#dde53e"/>
<circle cx="382.61" cy="850.79" r="2.7" fill="#8c8c8c"/>
<path d="M365.62 843.16L381.38 845.62L381.38 854.24L361.68 859.41L361.68 847.1Z" fill="#1e5b96" stroke="none" stroke-width="0" stroke-linejoin="round" />
<circle cx="357.99" cy="850.79" r="2.7" fill="#d86a78"/>
<text x="371.2" y="854.7" font-size="12.3" text-anchor="middle" font-weight="bold" class="sans" fill="#fff" textLength="20.5" lengthAdjust="spacingAndGlyphs">SWC</text>
<circle cx="382.61" cy="839.1" r="4.6" fill="#d8504e"/>
<text x="382.6" y="841.5" font-size="7" text-anchor="middle" font-weight="bold" class="mono" fill="#fff" >8</text>
<path d="M365.38 864.33L381.63 869.87L381.63 879.1L357.99 886.12L359.84 871.72Z" fill="#1e5b96" stroke="#1c46a0" stroke-width="1.6" stroke-linejoin="round" />
<circle cx="357.99" cy="875.41" r="5.3" fill="#3f99d1"/>
<circle cx="357.99" cy="875.41" r="2.7" fill="#d86a78"/>
<circle cx="370.3" cy="863.1" r="5.3" fill="#e33fc8"/>
<circle cx="370.3" cy="863.1" r="2.7" fill="#d86a78"/>
<circle cx="382.61" cy="875.41" r="5.3" fill="#93e23f"/>
<circle cx="382.61" cy="875.41" r="2.7" fill="#8c8c8c"/>
<path d="M365.62 867.78L381.38 870.24L381.38 878.86L361.68 884.03L361.68 871.72Z" fill="#1e5b96" stroke="none" stroke-width="0" stroke-linejoin="round" />
<circle cx="357.99" cy="875.41" r="2.7" fill="#d86a78"/>
<text x="371.2" y="879.3" font-size="12.3" text-anchor="middle" font-weight="bold" class="sans" fill="#fff" textLength="20.5" lengthAdjust="spacingAndGlyphs">SWC</text>
<circle cx="382.61" cy="863.72" r="4.6" fill="#d8504e"/>
<text x="382.6" y="866.1" font-size="7" text-anchor="middle" font-weight="bold" class="mono" fill="#fff" >8</text>
<circle cx="382.61" cy="887.72" r="5.3" fill="#9a40e2"/>
<circle cx="382.61" cy="887.72" r="2.7" fill="#e06a78"/>
<circle cx="382.61" cy="912.34" r="5.3" fill="#e33fc8"/>
<circle cx="382.61" cy="912.34" r="2.7" fill="#e06a78"/>
<g transform="translate(366.0 900.0) rotate(180) scale(1.0)">
<path d="M-17 -17.3Q4 -17.3 17 0Q4 17.3 -17 17.3Q-11 0 -17 -17.3Z" fill="#1e5b96" stroke="#1c46a0" stroke-width="1.6" stroke-linejoin="round" />
</g>
<circle cx="382.61" cy="887.72" r="2.7" fill="#e06a78" opacity="0.55"/>
<circle cx="382.61" cy="912.34" r="2.7" fill="#e06a78" opacity="0.55"/>
<circle cx="345.68" cy="900.03" r="5.3" fill="#e7a03a"/>
<circle cx="345.68" cy="900.03" r="2.7" fill="#2f8a34"/>
<text x="0.0" y="4.8" font-size="13.5" text-anchor="middle" font-weight="normal" class="sans" fill="#fff" transform="translate(366.0 900.0) rotate(180) translate(-1.5 0)" textLength="16.5" lengthAdjust="spacingAndGlyphs">OR</text>
<circle cx="801.15" cy="432.25" r="5.3" fill="#9a40e2"/>
<circle cx="801.15" cy="432.25" r="2.7" fill="#d86a78"/>
<circle cx="813.46" cy="419.94" r="5.3" fill="#9a40e2"/>
<circle cx="813.46" cy="419.94" r="2.7" fill="#d86a78"/>
<circle cx="825.77" cy="432.25" r="5.3" fill="#e7a03a"/>
<circle cx="825.77" cy="432.25" r="2.7" fill="#8c8c8c"/>
<path d="M801.15 421.42L821.83 432.25L801.15 443.08Z" fill="#1e5b96" stroke="#1c46a0" stroke-width="1.2" stroke-linejoin="round" />
<text x="807.9" y="436.9" font-size="13" text-anchor="middle" font-weight="bold" class="sans" fill="#fff" >S</text>
<circle cx="801.15" cy="456.87" r="5.3" fill="#e33fc8"/>
<circle cx="801.15" cy="456.87" r="2.7" fill="#d86a78"/>
<circle cx="813.46" cy="444.56" r="5.3" fill="#e33fc8"/>
<circle cx="813.46" cy="444.56" r="2.7" fill="#d86a78"/>
<circle cx="825.77" cy="456.87" r="5.3" fill="#e7a03a"/>
<circle cx="825.77" cy="456.87" r="2.7" fill="#8c8c8c"/>
<path d="M801.15 446.04L821.83 456.87L801.15 467.7Z" fill="#1e5b96" stroke="#1c46a0" stroke-width="1.2" stroke-linejoin="round" />
<text x="807.9" y="461.5" font-size="13" text-anchor="middle" font-weight="bold" class="sans" fill="#fff" >S</text>
<circle cx="801.15" cy="506.11" r="5.3" fill="#9a40e2"/>
<circle cx="801.15" cy="506.11" r="2.7" fill="#d86a78"/>
<circle cx="813.46" cy="493.8" r="5.3" fill="#9a40e2"/>
<circle cx="813.46" cy="493.8" r="2.7" fill="#d86a78"/>
<circle cx="825.77" cy="506.11" r="5.3" fill="#e7a03a"/>
<circle cx="825.77" cy="506.11" r="2.7" fill="#8c8c8c"/>
<path d="M801.15 495.28L821.83 506.11L801.15 516.94Z" fill="#1e5b96" stroke="#1c46a0" stroke-width="1.2" stroke-linejoin="round" />
<text x="807.9" y="510.7" font-size="13" text-anchor="middle" font-weight="bold" class="sans" fill="#fff" >S</text>
<circle cx="801.15" cy="530.73" r="5.3" fill="#e33fc8"/>
<circle cx="801.15" cy="530.73" r="2.7" fill="#d86a78"/>
<circle cx="813.46" cy="518.42" r="5.3" fill="#e33fc8"/>
<circle cx="813.46" cy="518.42" r="2.7" fill="#d86a78"/>
<circle cx="825.77" cy="530.73" r="5.3" fill="#e7a03a"/>
<circle cx="825.77" cy="530.73" r="2.7" fill="#8c8c8c"/>
<path d="M801.15 519.9L821.83 530.73L801.15 541.56Z" fill="#1e5b96" stroke="#1c46a0" stroke-width="1.2" stroke-linejoin="round" />
<text x="807.9" y="535.3" font-size="13" text-anchor="middle" font-weight="bold" class="sans" fill="#fff" >S</text>
<circle cx="801.15" cy="579.97" r="5.3" fill="#9a40e2"/>
<circle cx="801.15" cy="579.97" r="2.7" fill="#d86a78"/>
<circle cx="813.46" cy="567.66" r="5.3" fill="#9a40e2"/>
<circle cx="813.46" cy="567.66" r="2.7" fill="#d86a78"/>
<circle cx="825.77" cy="579.97" r="5.3" fill="#e7a03a"/>
<circle cx="825.77" cy="579.97" r="2.7" fill="#8c8c8c"/>
<path d="M801.15 569.14L821.83 579.97L801.15 590.8Z" fill="#1e5b96" stroke="#1c46a0" stroke-width="1.2" stroke-linejoin="round" />
<text x="807.9" y="584.6" font-size="13" text-anchor="middle" font-weight="bold" class="sans" fill="#fff" >S</text>
<circle cx="801.15" cy="604.59" r="5.3" fill="#e33fc8"/>
<circle cx="801.15" cy="604.59" r="2.7" fill="#d86a78"/>
<circle cx="813.46" cy="592.28" r="5.3" fill="#e33fc8"/>
<circle cx="813.46" cy="592.28" r="2.7" fill="#d86a78"/>
<circle cx="825.77" cy="604.59" r="5.3" fill="#e7a03a"/>
<circle cx="825.77" cy="604.59" r="2.7" fill="#8c8c8c"/>
<path d="M801.15 593.76L821.83 604.59L801.15 615.42Z" fill="#1e5b96" stroke="#1c46a0" stroke-width="1.2" stroke-linejoin="round" />
<text x="807.9" y="609.2" font-size="13" text-anchor="middle" font-weight="bold" class="sans" fill="#fff" >S</text>
<circle cx="801.15" cy="653.83" r="5.3" fill="#9a40e2"/>
<circle cx="801.15" cy="653.83" r="2.7" fill="#d86a78"/>
<circle cx="813.46" cy="641.52" r="5.3" fill="#9a40e2"/>
<circle cx="813.46" cy="641.52" r="2.7" fill="#d86a78"/>
<circle cx="825.77" cy="653.83" r="5.3" fill="#e7a03a"/>
<circle cx="825.77" cy="653.83" r="2.7" fill="#8c8c8c"/>
<path d="M801.15 643.0L821.83 653.83L801.15 664.66Z" fill="#1e5b96" stroke="#1c46a0" stroke-width="1.2" stroke-linejoin="round" />
<text x="807.9" y="658.4" font-size="13" text-anchor="middle" font-weight="bold" class="sans" fill="#fff" >S</text>
<circle cx="801.15" cy="678.45" r="5.3" fill="#e33fc8"/>
<circle cx="801.15" cy="678.45" r="2.7" fill="#d86a78"/>
<circle cx="813.46" cy="666.14" r="5.3" fill="#e33fc8"/>
<circle cx="813.46" cy="666.14" r="2.7" fill="#d86a78"/>
<circle cx="825.77" cy="678.45" r="5.3" fill="#e7a03a"/>
<circle cx="825.77" cy="678.45" r="2.7" fill="#8c8c8c"/>
<path d="M801.15 667.62L821.83 678.45L801.15 689.28Z" fill="#1e5b96" stroke="#1c46a0" stroke-width="1.2" stroke-linejoin="round" />
<text x="807.9" y="683.1" font-size="13" text-anchor="middle" font-weight="bold" class="sans" fill="#fff" >S</text>
<circle cx="801.15" cy="727.69" r="5.3" fill="#9a40e2"/>
<circle cx="801.15" cy="727.69" r="2.7" fill="#d86a78"/>
<circle cx="813.46" cy="715.38" r="5.3" fill="#9a40e2"/>
<circle cx="813.46" cy="715.38" r="2.7" fill="#d86a78"/>
<circle cx="825.77" cy="727.69" r="5.3" fill="#e7a03a"/>
<circle cx="825.77" cy="727.69" r="2.7" fill="#8c8c8c"/>
<path d="M801.15 716.86L821.83 727.69L801.15 738.52Z" fill="#1e5b96" stroke="#1c46a0" stroke-width="1.2" stroke-linejoin="round" />
<text x="807.9" y="732.3" font-size="13" text-anchor="middle" font-weight="bold" class="sans" fill="#fff" >S</text>
<circle cx="801.15" cy="752.31" r="5.3" fill="#e33fc8"/>
<circle cx="801.15" cy="752.31" r="2.7" fill="#d86a78"/>
<circle cx="813.46" cy="740.0" r="5.3" fill="#e33fc8"/>
<circle cx="813.46" cy="740.0" r="2.7" fill="#d86a78"/>
<circle cx="825.77" cy="752.31" r="5.3" fill="#e7a03a"/>
<circle cx="825.77" cy="752.31" r="2.7" fill="#8c8c8c"/>
<path d="M801.15 741.48L821.83 752.31L801.15 763.14Z" fill="#1e5b96" stroke="#1c46a0" stroke-width="1.2" stroke-linejoin="round" />
<text x="807.9" y="756.9" font-size="13" text-anchor="middle" font-weight="bold" class="sans" fill="#fff" >S</text>
<circle cx="801.15" cy="801.55" r="5.3" fill="#9a40e2"/>
<circle cx="801.15" cy="801.55" r="2.7" fill="#d86a78"/>
<circle cx="813.46" cy="789.24" r="5.3" fill="#9a40e2"/>
<circle cx="813.46" cy="789.24" r="2.7" fill="#d86a78"/>
<circle cx="825.77" cy="801.55" r="5.3" fill="#e7a03a"/>
<circle cx="825.77" cy="801.55" r="2.7" fill="#8c8c8c"/>
<path d="M801.15 790.72L821.83 801.55L801.15 812.38Z" fill="#1e5b96" stroke="#1c46a0" stroke-width="1.2" stroke-linejoin="round" />
<text x="807.9" y="806.1" font-size="13" text-anchor="middle" font-weight="bold" class="sans" fill="#fff" >S</text>
<circle cx="801.15" cy="826.17" r="5.3" fill="#e33fc8"/>
<circle cx="801.15" cy="826.17" r="2.7" fill="#d86a78"/>
<circle cx="813.46" cy="813.86" r="5.3" fill="#e33fc8"/>
<circle cx="813.46" cy="813.86" r="2.7" fill="#d86a78"/>
<circle cx="825.77" cy="826.17" r="5.3" fill="#e7a03a"/>
<circle cx="825.77" cy="826.17" r="2.7" fill="#8c8c8c"/>
<path d="M801.15 815.34L821.83 826.17L801.15 837.0Z" fill="#1e5b96" stroke="#1c46a0" stroke-width="1.2" stroke-linejoin="round" />
<text x="807.9" y="830.8" font-size="13" text-anchor="middle" font-weight="bold" class="sans" fill="#fff" >S</text>
<rect x="868.86" y="450.71" width="12.31" height="36.53" fill="#20a0aa"/>
<circle cx="862.7" cy="456.87" r="5.3" fill="#e7a03a"/>
<circle cx="862.7" cy="456.87" r="2.7" fill="#d8846a"/>
<circle cx="862.7" cy="469.18" r="5.3" fill="#e56b49"/>
<circle cx="862.7" cy="469.18" r="2.7" fill="#e0a040"/>
<circle cx="862.7" cy="481.49" r="5.3" fill="#3f99d1"/>
<circle cx="862.7" cy="481.49" r="2.7" fill="#d8962f"/>
<circle cx="887.32" cy="469.18" r="5.3" fill="#3f99d1"/>
<circle cx="887.32" cy="469.18" r="2.7" fill="#e0405c"/>
<circle cx="887.32" cy="481.49" r="4.3" fill="#e0405c"/>
<text x="875.0" y="472.6" font-size="10" text-anchor="middle" font-weight="bold" class="mono" fill="#fff" >0</text>
<rect x="868.86" y="524.58" width="12.31" height="36.53" fill="#20a0aa"/>
<circle cx="862.7" cy="530.73" r="5.3" fill="#e7a03a"/>
<circle cx="862.7" cy="530.73" r="2.7" fill="#d8846a"/>
<circle cx="862.7" cy="543.04" r="5.3" fill="#e56b49"/>
<circle cx="862.7" cy="543.04" r="2.7" fill="#e0a040"/>
<circle cx="862.7" cy="555.35" r="5.3" fill="#3f99d1"/>
<circle cx="862.7" cy="555.35" r="2.7" fill="#d8962f"/>
<circle cx="887.32" cy="543.04" r="5.3" fill="#3f99d1"/>
<circle cx="887.32" cy="543.04" r="2.7" fill="#8c8c8c"/>
<circle cx="887.32" cy="555.35" r="4.3" fill="#e0405c"/>
<text x="875.0" y="546.4" font-size="10" text-anchor="middle" font-weight="bold" class="mono" fill="#fff" >0</text>
<rect x="868.86" y="598.43" width="12.31" height="36.53" fill="#20a0aa"/>
<circle cx="862.7" cy="604.59" r="5.3" fill="#e7a03a"/>
<circle cx="862.7" cy="604.59" r="2.7" fill="#d8846a"/>
<circle cx="862.7" cy="616.9" r="5.3" fill="#e56b49"/>
<circle cx="862.7" cy="616.9" r="2.7" fill="#e0a040"/>
<circle cx="862.7" cy="629.21" r="5.3" fill="#3f99d1"/>
<circle cx="862.7" cy="629.21" r="2.7" fill="#d8962f"/>
<circle cx="887.32" cy="616.9" r="5.3" fill="#3f99d1"/>
<circle cx="887.32" cy="616.9" r="2.7" fill="#8c8c8c"/>
<circle cx="887.32" cy="629.21" r="4.3" fill="#e0405c"/>
<text x="875.0" y="620.3" font-size="10" text-anchor="middle" font-weight="bold" class="mono" fill="#fff" >0</text>
<rect x="868.86" y="672.29" width="12.31" height="36.53" fill="#20a0aa"/>
<circle cx="862.7" cy="678.45" r="5.3" fill="#e7a03a"/>
<circle cx="862.7" cy="678.45" r="2.7" fill="#d8846a"/>
<circle cx="862.7" cy="690.76" r="5.3" fill="#e56b49"/>
<circle cx="862.7" cy="690.76" r="2.7" fill="#e0a040"/>
<circle cx="862.7" cy="703.07" r="5.3" fill="#3f99d1"/>
<circle cx="862.7" cy="703.07" r="2.7" fill="#d8962f"/>
<circle cx="887.32" cy="690.76" r="5.3" fill="#3f99d1"/>
<circle cx="887.32" cy="690.76" r="2.7" fill="#8c8c8c"/>
<circle cx="887.32" cy="703.07" r="4.3" fill="#e0405c"/>
<text x="875.0" y="694.2" font-size="10" text-anchor="middle" font-weight="bold" class="mono" fill="#fff" >0</text>
<rect x="868.86" y="746.15" width="12.31" height="36.53" fill="#20a0aa"/>
<circle cx="862.7" cy="752.31" r="5.3" fill="#e7a03a"/>
<circle cx="862.7" cy="752.31" r="2.7" fill="#d8846a"/>
<circle cx="862.7" cy="764.62" r="5.3" fill="#e56b49"/>
<circle cx="862.7" cy="764.62" r="2.7" fill="#e0a040"/>
<circle cx="862.7" cy="776.93" r="5.3" fill="#3f99d1"/>
<circle cx="862.7" cy="776.93" r="2.7" fill="#d8962f"/>
<circle cx="887.32" cy="764.62" r="5.3" fill="#3f99d1"/>
<circle cx="887.32" cy="764.62" r="2.7" fill="#8c8c8c"/>
<circle cx="887.32" cy="776.93" r="5.3" fill="#5a55e8"/>
<circle cx="887.32" cy="776.93" r="2.7" fill="#e0405c"/>
<text x="875.0" y="768.0" font-size="10" text-anchor="middle" font-weight="bold" class="mono" fill="#fff" >0</text>
<path d="M279.7 368.24L263.94 381.78L279.7 395.32Z" fill="#1b50a2" opacity="0.8"/>
<circle cx="284.13" cy="370.7" r="5.3" fill="#2f9ea3"/>
<circle cx="284.13" cy="370.7" r="2.7" fill="#d86a78"/>
<circle cx="284.13" cy="383.01" r="5.3" fill="#3f99d1"/>
<circle cx="284.13" cy="383.01" r="2.7" fill="#d86a78"/>
<circle cx="284.13" cy="395.32" r="5.3" fill="#e7a03a"/>
<circle cx="284.13" cy="395.32" r="2.7" fill="#e08a70"/>
<circle cx="259.51" cy="383.01" r="5.3" fill="#3f99d1"/>
<circle cx="259.51" cy="383.01" r="2.7" fill="#e0405c"/>
<text x="0.0" y="3.2" font-size="9" text-anchor="middle" font-weight="bold" class="mono" fill="#fff" transform="translate(274.77 381.53) rotate(-90)" >MUX</text>
<path d="M328.94 368.24L313.18 381.78L328.94 395.32Z" fill="#1b50a2" opacity="0.8"/>
<circle cx="333.37" cy="370.7" r="5.3" fill="#93e23f"/>
<circle cx="333.37" cy="370.7" r="2.7" fill="#2f8a34"/>
<circle cx="333.37" cy="383.01" r="5.3" fill="#3f99d1"/>
<circle cx="333.37" cy="383.01" r="2.7" fill="#d86a78"/>
<circle cx="333.37" cy="395.32" r="5.3" fill="#e7a03a"/>
<circle cx="333.37" cy="395.32" r="2.7" fill="#e08a70"/>
<circle cx="308.75" cy="383.01" r="5.3" fill="#3f99d1"/>
<circle cx="308.75" cy="383.01" r="2.7" fill="#e0405c"/>
<text x="0.0" y="3.2" font-size="9" text-anchor="middle" font-weight="bold" class="mono" fill="#fff" transform="translate(324.01 381.53) rotate(-90)" >MUX</text>
<circle cx="296.44" cy="395.32" r="5.3" fill="#e7a03a"/>
<circle cx="296.44" cy="395.32" r="2.4" fill="#2a3a52"/>
<circle cx="296.44" cy="370.7" r="5.3" fill="#e7a03a"/>
<circle cx="296.44" cy="370.7" r="2.4" fill="#2a3a52"/>
<circle cx="308.75" cy="370.7" r="5.3" fill="#e7a03a"/>
<circle cx="308.75" cy="370.7" r="2.4" fill="#2a3a52"/>
<circle cx="265.67" cy="395.32" r="4.6" fill="#d8504e"/>
<text x="265.7" y="397.7" font-size="7" text-anchor="middle" font-weight="bold" class="mono" fill="#fff" >16</text>
<circle cx="314.91" cy="395.32" r="4.6" fill="#d8504e"/>
<text x="314.9" y="397.7" font-size="7" text-anchor="middle" font-weight="bold" class="mono" fill="#fff" >8</text>
<path d="M977.92 319.0L993.68 332.54L977.92 346.08Z" fill="#1b50a2" opacity="0.8"/>
<circle cx="973.49" cy="321.46" r="5.3" fill="#41d9e6"/>
<circle cx="973.49" cy="321.46" r="2.7" fill="#d86a78"/>
<circle cx="973.49" cy="333.77" r="5.3" fill="#dde53e"/>
<circle cx="973.49" cy="333.77" r="2.7" fill="#d86a78"/>
<circle cx="973.49" cy="346.08" r="5.3" fill="#ffffff"/>
<circle cx="973.49" cy="346.08" r="2.7" fill="#d86a78"/>
<circle cx="998.11" cy="333.77" r="5.3" fill="#3f99d1"/>
<circle cx="998.11" cy="333.77" r="2.7" fill="#e0405c"/>
<text x="0.0" y="3.2" font-size="9" text-anchor="middle" font-weight="bold" class="mono" fill="#fff" transform="translate(982.85 332.29) rotate(90)" >MUX</text>
<path d="M977.92 355.93L993.68 369.47L977.92 383.01Z" fill="#1b50a2" opacity="0.8"/>
<circle cx="973.49" cy="358.39" r="5.3" fill="#41d9e6"/>
<circle cx="973.49" cy="358.39" r="2.7" fill="#d86a78"/>
<circle cx="973.49" cy="370.7" r="5.3" fill="#93e23f"/>
<circle cx="973.49" cy="370.7" r="2.7" fill="#d86a78"/>
<circle cx="973.49" cy="383.01" r="5.3" fill="#46e39a"/>
<circle cx="973.49" cy="383.01" r="2.7" fill="#2f8a34"/>
<circle cx="998.11" cy="370.7" r="5.3" fill="#3f99d1"/>
<circle cx="998.11" cy="370.7" r="2.7" fill="#e0405c"/>
<text x="0.0" y="3.2" font-size="9" text-anchor="middle" font-weight="bold" class="mono" fill="#fff" transform="translate(982.85 369.22) rotate(90)" >MUX</text>
<circle cx="992.57" cy="321.46" r="4.6" fill="#d8504e"/>
<text x="992.6" y="323.9" font-size="7" text-anchor="middle" font-weight="bold" class="mono" fill="#fff" >8</text>
<circle cx="992.57" cy="358.39" r="4.6" fill="#d8504e"/>
<text x="992.6" y="360.8" font-size="7" text-anchor="middle" font-weight="bold" class="mono" fill="#fff" >8</text>
<circle cx="1010.42" cy="358.39" r="5.3" fill="#3f99d1"/>
<circle cx="1010.42" cy="358.39" r="2.7" fill="#d86a78"/>
<circle cx="1010.42" cy="370.7" r="5.3" fill="#3f99d1"/>
<circle cx="1010.42" cy="370.7" r="2.7" fill="#d86a78"/>
<rect x="252.8" y="167.2" width="37.5" height="24.6" fill="#20a0aa"/>
<text x="271.8" y="182.9" font-size="9" text-anchor="middle" font-weight="normal" class="mono" fill="#d6f0f0" textLength="34" lengthAdjust="spacingAndGlyphs">LEG IF</text>
<circle cx="247.2" cy="173.74" r="5.3" fill="#7b7b7b"/>
<circle cx="247.2" cy="173.74" r="2.7" fill="#d86a78"/>
<circle cx="247.2" cy="186.05" r="5.3" fill="#dde53e"/>
<circle cx="247.2" cy="186.05" r="2.7" fill="#d86a78"/>
<circle cx="247.2" cy="198.36" r="5.3" fill="#93e23f"/>
<circle cx="247.2" cy="198.36" r="2.7" fill="#d86a78"/>
<circle cx="284.13" cy="198.36" r="5.3" fill="#e7a03a"/>
<circle cx="284.13" cy="198.36" r="2.7" fill="#8c8c8c"/>
<path d="M277.98 216.83H290.29V229.14H302.6V241.45H277.98Z" fill="#20a0aa"/>
<circle cx="271.82" cy="222.98" r="5.3" fill="#3f99d1"/>
<circle cx="271.82" cy="222.98" r="2.7" fill="#d8962f"/>
<circle cx="296.44" cy="222.98" r="5.3" fill="#7b7b7b"/>
<circle cx="296.44" cy="222.98" r="2.7" fill="#d86a78"/>
<circle cx="296.44" cy="247.6" r="5.3" fill="#2f9ea3"/>
<circle cx="296.44" cy="247.6" r="2.7" fill="#e0405c"/>
<circle cx="308.75" cy="235.29" r="5.3" fill="#e7a03a"/>
<circle cx="308.75" cy="235.29" r="2.7" fill="#e0405c"/>
<circle cx="308.75" cy="247.6" r="5.3" fill="#e7a03a"/>
<circle cx="308.75" cy="247.6" r="2.7" fill="#e0405c"/>
<text x="284.1" y="238.7" font-size="10" text-anchor="middle" font-weight="bold" class="mono" fill="#fff" >0</text>
<path d="M1015.96 352.24H1065.82V365.16H1041.19V376.86H1015.96Z" fill="#20a0aa" stroke="#20a0aa" stroke-opacity="0.3" stroke-width="2.5"/>
<text x="1040.0" y="366.4" font-size="9" text-anchor="middle" font-weight="normal" class="mono" fill="#d6f0f0" textLength="39" lengthAdjust="spacingAndGlyphs">LEG ALU</text>
<circle cx="1022.73" cy="346.08" r="5.3" fill="#7b7b7b"/>
<circle cx="1022.73" cy="346.08" r="2.7" fill="#d86a78"/>
<circle cx="1059.66" cy="370.7" r="5.3" fill="#3f99d1"/>
<circle cx="1059.66" cy="370.7" r="2.7" fill="#e0405c"/>
<path d="M77.81 203.65Q96.4 210.67 98.25 232.09L75.48 238.61L71.29 230.86L79.05 225.44Z" fill="#1e5b96" stroke="#1c46a0" stroke-width="1.6" stroke-linejoin="round" />
<circle cx="74.86" cy="210.67" r="5.3" fill="#e56b49"/>
<circle cx="74.86" cy="210.67" r="2.7" fill="#d8962f"/>
<circle cx="74.86" cy="222.98" r="5.3" fill="#3f99d1"/>
<circle cx="74.86" cy="222.98" r="2.7" fill="#d8962f"/>
<circle cx="99.48" cy="222.98" r="5.3" fill="#3f99d1"/>
<circle cx="99.48" cy="222.98" r="2.7" fill="#e0405c"/>
<path d="M78.55 205.75Q95.79 211.9 97.26 231.6L76.09 237.75L81.02 225.44Z" fill="#1e5b96" stroke="none" stroke-width="0" stroke-linejoin="round" />
<text x="86.5" y="228.2" font-size="10" text-anchor="middle" font-weight="bold" class="mono" fill="#fff" >0</text>
<circle cx="93.94" cy="211.9" r="4.6" fill="#d8504e"/>
<text x="93.9" y="214.3" font-size="7" text-anchor="middle" font-weight="bold" class="mono" fill="#fff" >8</text>
<path d="M426.31 296.22L521.71 296.22L525.41 317.77L422.62 317.77Z" fill="#124c9b" stroke="#1c46a0" stroke-width="1.6" stroke-linejoin="round" />
<text x="0.0" y="0.0" font-size="7.3" text-anchor="end" font-weight="normal" class="mono" fill="#dbe6f6" transform="translate(429.25 310.87) rotate(90)" >128</text>
<path d="M429.65000000000003 313.83h4.4l-2.2 2.6z" fill="#fff"/>
<text x="0.0" y="0.0" font-size="7.3" text-anchor="end" font-weight="normal" class="mono" fill="#dbe6f6" transform="translate(441.56 310.87) rotate(90)" >64</text>
<path d="M441.96000000000004 313.83h4.4l-2.2 2.6z" fill="#fff"/>
<text x="0.0" y="0.0" font-size="7.3" text-anchor="end" font-weight="normal" class="mono" fill="#dbe6f6" transform="translate(453.87 310.87) rotate(90)" >32</text>
<path d="M454.27000000000004 313.83h4.4l-2.2 2.6z" fill="#fff"/>
<text x="0.0" y="0.0" font-size="7.3" text-anchor="end" font-weight="normal" class="mono" fill="#dbe6f6" transform="translate(466.17999999999995 310.87) rotate(90)" >16</text>
<path d="M466.58 313.83h4.4l-2.2 2.6z" fill="#fff"/>
<text x="0.0" y="0.0" font-size="7.3" text-anchor="end" font-weight="normal" class="mono" fill="#dbe6f6" transform="translate(478.48999999999995 310.87) rotate(90)" >8</text>
<path d="M478.89 313.83h4.4l-2.2 2.6z" fill="#fff"/>
<text x="0.0" y="0.0" font-size="7.3" text-anchor="end" font-weight="normal" class="mono" fill="#dbe6f6" transform="translate(490.79999999999995 310.87) rotate(90)" >4</text>
<path d="M491.2 313.83h4.4l-2.2 2.6z" fill="#fff"/>
<text x="0.0" y="0.0" font-size="7.3" text-anchor="end" font-weight="normal" class="mono" fill="#dbe6f6" transform="translate(503.10999999999996 310.87) rotate(90)" >2</text>
<path d="M503.51 313.83h4.4l-2.2 2.6z" fill="#fff"/>
<text x="0.0" y="0.0" font-size="7.3" text-anchor="end" font-weight="normal" class="mono" fill="#dbe6f6" transform="translate(515.42 310.87) rotate(90)" >1</text>
<path d="M515.8199999999999 313.83h4.4l-2.2 2.6z" fill="#fff"/>
<circle cx="431.85" cy="321.46" r="3.3" fill="#e0405c"/>
<circle cx="444.16" cy="321.46" r="3.3" fill="#e0405c"/>
<circle cx="456.47" cy="321.46" r="3.3" fill="#e0405c"/>
<circle cx="468.78" cy="321.46" r="3.3" fill="#e0405c"/>
<circle cx="481.09" cy="321.46" r="3.3" fill="#e0405c"/>
<circle cx="493.4" cy="321.46" r="5.3" fill="#e56b49"/>
<circle cx="493.4" cy="321.46" r="2.7" fill="#e0405c"/>
<circle cx="493.4" cy="346.08" r="5.3" fill="#e56b49"/>
<circle cx="493.4" cy="346.08" r="2.7" fill="#d8707a"/>
<circle cx="505.71" cy="321.46" r="5.3" fill="#e56b49"/>
<circle cx="505.71" cy="321.46" r="2.7" fill="#e0405c"/>
<circle cx="505.71" cy="346.08" r="5.3" fill="#e56b49"/>
<circle cx="505.71" cy="346.08" r="2.7" fill="#d8707a"/>
<circle cx="518.02" cy="321.46" r="5.3" fill="#e56b49"/>
<circle cx="518.02" cy="321.46" r="2.7" fill="#e0405c"/>
<circle cx="518.02" cy="346.08" r="5.3" fill="#e56b49"/>
<circle cx="518.02" cy="346.08" r="2.7" fill="#d8707a"/>
<path d="M423.23 362.45Q471.24 360.85 486.01 352.24L533.41 349.77L511.87 365.16Z" fill="#164f9c" stroke="#1c46a0" stroke-width="1.6" stroke-linejoin="round" />
<text x="0.0" y="4.4" font-size="12.5" text-anchor="middle" font-weight="bold" class="mono" fill="#fff" transform="translate(500.17 358.39) scale(-1 1)" >DEC</text>
<circle cx="530.33" cy="358.39" r="5.3" fill="#41d9e6"/>
<circle cx="530.33" cy="358.39" r="2.7" fill="#d86a78"/>
<circle cx="431.85" cy="370.7" r="5.3" fill="#e56b49"/>
<circle cx="431.85" cy="370.7" r="2.7" fill="#e0405c"/>
<circle cx="444.16" cy="370.7" r="5.3" fill="#e56b49"/>
<circle cx="444.16" cy="370.7" r="2.7" fill="#e0405c"/>
<circle cx="456.47" cy="370.7" r="5.3" fill="#e56b49"/>
<circle cx="456.47" cy="370.7" r="2.7" fill="#e0405c"/>
<circle cx="468.78" cy="370.7" r="5.3" fill="#e56b49"/>
<circle cx="468.78" cy="370.7" r="2.7" fill="#e0405c"/>
<circle cx="481.09" cy="370.7" r="5.3" fill="#e56b49"/>
<circle cx="481.09" cy="370.7" r="2.7" fill="#e0405c"/>
<circle cx="493.4" cy="370.7" r="5.3" fill="#e56b49"/>
<circle cx="493.4" cy="370.7" r="2.7" fill="#e0405c"/>
<circle cx="505.71" cy="370.7" r="5.3" fill="#e56b49"/>
<circle cx="505.71" cy="370.7" r="2.7" fill="#e0405c"/>
<circle cx="518.02" cy="370.7" r="5.3" fill="#e56b49"/>
<circle cx="518.02" cy="370.7" r="2.7" fill="#e0405c"/>
<path d="M549.41 296.22L644.81 296.22L648.51 317.77L545.72 317.77Z" fill="#124c9b" stroke="#1c46a0" stroke-width="1.6" stroke-linejoin="round" />
<text x="0.0" y="0.0" font-size="7.3" text-anchor="end" font-weight="normal" class="mono" fill="#dbe6f6" transform="translate(552.35 310.87) rotate(90)" >128</text>
<path d="M552.75 313.83h4.4l-2.2 2.6z" fill="#fff"/>
<text x="0.0" y="0.0" font-size="7.3" text-anchor="end" font-weight="normal" class="mono" fill="#dbe6f6" transform="translate(564.66 310.87) rotate(90)" >64</text>
<path d="M565.06 313.83h4.4l-2.2 2.6z" fill="#fff"/>
<text x="0.0" y="0.0" font-size="7.3" text-anchor="end" font-weight="normal" class="mono" fill="#dbe6f6" transform="translate(576.97 310.87) rotate(90)" >32</text>
<path d="M577.37 313.83h4.4l-2.2 2.6z" fill="#fff"/>
<text x="0.0" y="0.0" font-size="7.3" text-anchor="end" font-weight="normal" class="mono" fill="#dbe6f6" transform="translate(589.28 310.87) rotate(90)" >16</text>
<path d="M589.68 313.83h4.4l-2.2 2.6z" fill="#fff"/>
<text x="0.0" y="0.0" font-size="7.3" text-anchor="end" font-weight="normal" class="mono" fill="#dbe6f6" transform="translate(601.59 310.87) rotate(90)" >8</text>
<path d="M601.99 313.83h4.4l-2.2 2.6z" fill="#fff"/>
<text x="0.0" y="0.0" font-size="7.3" text-anchor="end" font-weight="normal" class="mono" fill="#dbe6f6" transform="translate(613.9 310.87) rotate(90)" >4</text>
<path d="M614.3 313.83h4.4l-2.2 2.6z" fill="#fff"/>
<text x="0.0" y="0.0" font-size="7.3" text-anchor="end" font-weight="normal" class="mono" fill="#dbe6f6" transform="translate(626.2099999999999 310.87) rotate(90)" >2</text>
<path d="M626.6099999999999 313.83h4.4l-2.2 2.6z" fill="#fff"/>
<text x="0.0" y="0.0" font-size="7.3" text-anchor="end" font-weight="normal" class="mono" fill="#dbe6f6" transform="translate(638.52 310.87) rotate(90)" >1</text>
<path d="M638.92 313.83h4.4l-2.2 2.6z" fill="#fff"/>
<circle cx="554.95" cy="321.46" r="3.3" fill="#e0405c"/>
<circle cx="567.26" cy="321.46" r="3.3" fill="#e0405c"/>
<circle cx="579.57" cy="321.46" r="3.3" fill="#e0405c"/>
<circle cx="591.88" cy="321.46" r="3.3" fill="#e0405c"/>
<circle cx="604.19" cy="321.46" r="3.3" fill="#e0405c"/>
<circle cx="616.5" cy="321.46" r="5.3" fill="#e33fc8"/>
<circle cx="616.5" cy="321.46" r="2.7" fill="#e0607a"/>
<circle cx="616.5" cy="346.08" r="5.3" fill="#e33fc8"/>
<circle cx="616.5" cy="346.08" r="2.7" fill="#d8707a"/>
<circle cx="628.81" cy="321.46" r="5.3" fill="#e33fc8"/>
<circle cx="628.81" cy="321.46" r="2.7" fill="#e0607a"/>
<circle cx="628.81" cy="346.08" r="5.3" fill="#e33fc8"/>
<circle cx="628.81" cy="346.08" r="2.7" fill="#d8707a"/>
<circle cx="641.12" cy="321.46" r="5.3" fill="#e33fc8"/>
<circle cx="641.12" cy="321.46" r="2.7" fill="#e0607a"/>
<circle cx="641.12" cy="346.08" r="5.3" fill="#e33fc8"/>
<circle cx="641.12" cy="346.08" r="2.7" fill="#d8707a"/>
<path d="M546.33 362.45Q594.34 360.85 609.11 352.24L656.51 349.77L634.97 365.16Z" fill="#164f9c" stroke="#1c46a0" stroke-width="1.6" stroke-linejoin="round" />
<text x="0.0" y="4.4" font-size="12.5" text-anchor="middle" font-weight="bold" class="mono" fill="#fff" transform="translate(623.27 358.39) scale(-1 1)" >DEC</text>
<circle cx="653.43" cy="358.39" r="5.3" fill="#41d9e6"/>
<circle cx="653.43" cy="358.39" r="2.7" fill="#d86a78"/>
<circle cx="554.95" cy="370.7" r="5.3" fill="#e33fc8"/>
<circle cx="554.95" cy="370.7" r="2.7" fill="#e0405c"/>
<circle cx="567.26" cy="370.7" r="5.3" fill="#e33fc8"/>
<circle cx="567.26" cy="370.7" r="2.7" fill="#e0405c"/>
<circle cx="579.57" cy="370.7" r="5.3" fill="#e33fc8"/>
<circle cx="579.57" cy="370.7" r="2.7" fill="#e0405c"/>
<circle cx="591.88" cy="370.7" r="5.3" fill="#e33fc8"/>
<circle cx="591.88" cy="370.7" r="2.7" fill="#e0405c"/>
<circle cx="604.19" cy="370.7" r="5.3" fill="#e33fc8"/>
<circle cx="604.19" cy="370.7" r="2.7" fill="#e0405c"/>
<circle cx="616.5" cy="370.7" r="5.3" fill="#e33fc8"/>
<circle cx="616.5" cy="370.7" r="2.7" fill="#e0405c"/>
<circle cx="628.81" cy="370.7" r="5.3" fill="#e33fc8"/>
<circle cx="628.81" cy="370.7" r="2.7" fill="#e0405c"/>
<circle cx="641.12" cy="370.7" r="5.3" fill="#e33fc8"/>
<circle cx="641.12" cy="370.7" r="2.7" fill="#e0405c"/>
<path d="M672.51 296.22L767.91 296.22L771.61 317.77L668.82 317.77Z" fill="#124c9b" stroke="#1c46a0" stroke-width="1.6" stroke-linejoin="round" />
<text x="0.0" y="0.0" font-size="7.3" text-anchor="end" font-weight="normal" class="mono" fill="#dbe6f6" transform="translate(675.4499999999999 310.87) rotate(90)" >128</text>
<path d="M675.8499999999999 313.83h4.4l-2.2 2.6z" fill="#fff"/>
<text x="0.0" y="0.0" font-size="7.3" text-anchor="end" font-weight="normal" class="mono" fill="#dbe6f6" transform="translate(687.76 310.87) rotate(90)" >64</text>
<path d="M688.16 313.83h4.4l-2.2 2.6z" fill="#fff"/>
<text x="0.0" y="0.0" font-size="7.3" text-anchor="end" font-weight="normal" class="mono" fill="#dbe6f6" transform="translate(700.0699999999999 310.87) rotate(90)" >32</text>
<path d="M700.4699999999999 313.83h4.4l-2.2 2.6z" fill="#fff"/>
<text x="0.0" y="0.0" font-size="7.3" text-anchor="end" font-weight="normal" class="mono" fill="#dbe6f6" transform="translate(712.38 310.87) rotate(90)" >16</text>
<path d="M712.78 313.83h4.4l-2.2 2.6z" fill="#fff"/>
<text x="0.0" y="0.0" font-size="7.3" text-anchor="end" font-weight="normal" class="mono" fill="#dbe6f6" transform="translate(724.6899999999999 310.87) rotate(90)" >8</text>
<path d="M725.0899999999999 313.83h4.4l-2.2 2.6z" fill="#fff"/>
<text x="0.0" y="0.0" font-size="7.3" text-anchor="end" font-weight="normal" class="mono" fill="#dbe6f6" transform="translate(737.0 310.87) rotate(90)" >4</text>
<path d="M737.4 313.83h4.4l-2.2 2.6z" fill="#fff"/>
<text x="0.0" y="0.0" font-size="7.3" text-anchor="end" font-weight="normal" class="mono" fill="#dbe6f6" transform="translate(749.31 310.87) rotate(90)" >2</text>
<path d="M749.7099999999999 313.83h4.4l-2.2 2.6z" fill="#fff"/>
<text x="0.0" y="0.0" font-size="7.3" text-anchor="end" font-weight="normal" class="mono" fill="#dbe6f6" transform="translate(761.62 310.87) rotate(90)" >1</text>
<path d="M762.02 313.83h4.4l-2.2 2.6z" fill="#fff"/>
<circle cx="678.05" cy="321.46" r="3.3" fill="#e0405c"/>
<circle cx="690.36" cy="321.46" r="3.3" fill="#e0405c"/>
<circle cx="702.67" cy="321.46" r="3.3" fill="#e0405c"/>
<circle cx="714.98" cy="321.46" r="3.3" fill="#e0405c"/>
<circle cx="727.29" cy="321.46" r="3.3" fill="#e0405c"/>
<circle cx="739.6" cy="321.46" r="5.3" fill="#9a40e2"/>
<circle cx="739.6" cy="321.46" r="2.7" fill="#e0607a"/>
<circle cx="739.6" cy="346.08" r="5.3" fill="#9a40e2"/>
<circle cx="739.6" cy="346.08" r="2.7" fill="#d8707a"/>
<circle cx="751.91" cy="321.46" r="5.3" fill="#9a40e2"/>
<circle cx="751.91" cy="321.46" r="2.7" fill="#e0607a"/>
<circle cx="751.91" cy="346.08" r="5.3" fill="#9a40e2"/>
<circle cx="751.91" cy="346.08" r="2.7" fill="#d8707a"/>
<circle cx="764.22" cy="321.46" r="5.3" fill="#9a40e2"/>
<circle cx="764.22" cy="321.46" r="2.7" fill="#e0607a"/>
<circle cx="764.22" cy="346.08" r="5.3" fill="#9a40e2"/>
<circle cx="764.22" cy="346.08" r="2.7" fill="#d8707a"/>
<path d="M669.43 362.45Q717.44 360.85 732.21 352.24L779.61 349.77L758.07 365.16Z" fill="#164f9c" stroke="#1c46a0" stroke-width="1.6" stroke-linejoin="round" />
<text x="0.0" y="4.4" font-size="12.5" text-anchor="middle" font-weight="bold" class="mono" fill="#fff" transform="translate(746.37 358.39) scale(-1 1)" >DEC</text>
<circle cx="776.53" cy="358.39" r="5.3" fill="#41d9e6"/>
<circle cx="776.53" cy="358.39" r="2.7" fill="#d86a78"/>
<circle cx="678.05" cy="370.7" r="5.3" fill="#9a40e2"/>
<circle cx="678.05" cy="370.7" r="2.7" fill="#e0405c"/>
<circle cx="690.36" cy="370.7" r="5.3" fill="#9a40e2"/>
<circle cx="690.36" cy="370.7" r="2.7" fill="#e0405c"/>
<circle cx="702.67" cy="370.7" r="5.3" fill="#9a40e2"/>
<circle cx="702.67" cy="370.7" r="2.7" fill="#e0405c"/>
<circle cx="714.98" cy="370.7" r="5.3" fill="#9a40e2"/>
<circle cx="714.98" cy="370.7" r="2.7" fill="#e0405c"/>
<circle cx="727.29" cy="370.7" r="5.3" fill="#9a40e2"/>
<circle cx="727.29" cy="370.7" r="2.7" fill="#e0405c"/>
<circle cx="739.6" cy="370.7" r="5.3" fill="#9a40e2"/>
<circle cx="739.6" cy="370.7" r="2.7" fill="#e0405c"/>
<circle cx="751.91" cy="370.7" r="5.3" fill="#9a40e2"/>
<circle cx="751.91" cy="370.7" r="2.7" fill="#e0405c"/>
<circle cx="764.22" cy="370.7" r="5.3" fill="#9a40e2"/>
<circle cx="764.22" cy="370.7" r="2.7" fill="#e0405c"/>
<circle cx="481.09" cy="296.84" r="5.3" fill="#93e23f"/>
<circle cx="481.09" cy="296.84" r="2.7" fill="#2f8a34"/>
<circle cx="604.19" cy="296.84" r="5.3" fill="#46e39a"/>
<circle cx="604.19" cy="296.84" r="2.7" fill="#2f8a34"/>
<circle cx="727.29" cy="296.84" r="5.3" fill="#ffffff"/>
<circle cx="727.29" cy="296.84" r="2.7" fill="#e0607a"/>
<circle cx="505.71" cy="370.7" r="2.7" fill="#2f8a34"/>
<circle cx="554.95" cy="370.7" r="2.7" fill="#2f8a34"/>
<circle cx="764.22" cy="370.7" r="2.7" fill="#2f8a34"/>
<path d="M344.6 842.1A15.2 15.2 0 1 0 324.1 863.7L329.1 859.0L335.6 859.0L341.3 862.9A15.2 15.2 0 0 0 344.6 859.5L338.6 852.0L338.6 849.6Z" fill="none" stroke="#e8485c" stroke-width="5" stroke-linejoin="round" opacity="0.18"/>
<path d="M344.6 842.1A15.2 15.2 0 1 0 324.1 863.7L329.1 859.0L335.6 859.0L341.3 862.9A15.2 15.2 0 0 0 344.6 859.5L338.6 852.0L338.6 849.6Z" fill="none" stroke="#e8485c" stroke-width="2.5" stroke-linejoin="round" opacity="0.3"/>
<path d="M344.6 842.1A15.2 15.2 0 1 0 324.1 863.7L329.1 859.0L335.6 859.0L341.3 862.9A15.2 15.2 0 0 0 344.6 859.5L338.6 852.0L338.6 849.6Z" fill="#c94c5c"/>
<text x="329.1" y="854.8" font-size="11" text-anchor="middle" font-weight="bold" class="mono" fill="#fff" >0</text>
<circle cx="345.68" cy="850.79" r="5.3" fill="#3f99d1"/>
<circle cx="345.68" cy="850.79" r="2.7" fill="#8c8c8c"/>
<circle cx="333.37" cy="863.1" r="5.3" fill="#e7a03a"/>
<circle cx="333.37" cy="863.1" r="2.7" fill="#2f8a34"/>
<path d="M1294.0 866.7A15.2 15.2 0 1 1 1314.5 888.3L1309.5 883.6L1303.0 883.6L1297.3 887.5A15.2 15.2 0 0 1 1294.0 884.1L1300.0 876.6L1300.0 874.2Z" fill="none" stroke="#e8485c" stroke-width="5" stroke-linejoin="round" opacity="0.18"/>
<path d="M1294.0 866.7A15.2 15.2 0 1 1 1314.5 888.3L1309.5 883.6L1303.0 883.6L1297.3 887.5A15.2 15.2 0 0 1 1294.0 884.1L1300.0 876.6L1300.0 874.2Z" fill="none" stroke="#e8485c" stroke-width="2.5" stroke-linejoin="round" opacity="0.3"/>
<path d="M1294.0 866.7A15.2 15.2 0 1 1 1314.5 888.3L1309.5 883.6L1303.0 883.6L1297.3 887.5A15.2 15.2 0 0 1 1294.0 884.1L1300.0 876.6L1300.0 874.2Z" fill="#c94c5c"/>
<text x="1306.5" y="879.4" font-size="11" text-anchor="middle" font-weight="bold" class="mono" fill="#fff" >0</text>
<circle cx="1293.55" cy="875.41" r="5.3" fill="#3f99d1"/>
<circle cx="1293.55" cy="875.41" r="2.7" fill="#e0607a"/>
<circle cx="1305.86" cy="887.72" r="5.3" fill="#e56b49"/>
<circle cx="1305.86" cy="887.72" r="2.7" fill="#e0707a"/>
<circle cx="259.51" cy="383.01" r="5.3" fill="#3f99d1"/>
<circle cx="259.51" cy="383.01" r="2.7" fill="#e0304c"/>
<circle cx="308.75" cy="383.01" r="5.3" fill="#3f99d1"/>
<circle cx="308.75" cy="383.01" r="2.7" fill="#e0405c"/>
<circle cx="370.3" cy="838.48" r="5.3" fill="#9a40e2"/>
<circle cx="370.3" cy="838.48" r="2.7" fill="#d86a78"/>
<circle cx="370.3" cy="863.1" r="5.3" fill="#9a40e2"/>
<circle cx="370.3" cy="863.1" r="2.7" fill="#2f8a34"/>
<circle cx="1207.38" cy="789.24" r="5.3" fill="#9a40e2"/>
<circle cx="1207.38" cy="789.24" r="2.7" fill="#d86a78"/>
<circle cx="1207.38" cy="826.17" r="5.3" fill="#e33fc8"/>
<circle cx="1207.38" cy="826.17" r="2.7" fill="#d86a78"/>
<circle cx="973.49" cy="383.01" r="5.3" fill="#46e39a"/>
<circle cx="973.49" cy="383.01" r="2.7" fill="#2f8a34"/>
<text x="327.0" y="42.0" font-size="11" text-anchor="middle" font-weight="normal" class="mono" fill="#fff" >0</text>
<text x="222.0" y="57.0" font-size="11" text-anchor="middle" font-weight="normal" class="mono" fill="#fff" >0</text>
<text x="884.0" y="42.0" font-size="11" text-anchor="middle" font-weight="normal" class="mono" fill="#fff" >0</text>
<text x="924.0" y="178.0" font-size="11" text-anchor="middle" font-weight="normal" class="mono" fill="#fff" >0</text>
<text x="708.0" y="251.0" font-size="11" text-anchor="middle" font-weight="normal" class="mono" fill="#fff" >0</text>
<text x="980.0" y="251.0" font-size="11" text-anchor="middle" font-weight="normal" class="mono" fill="#fff" >0</text>
<text x="1022.0" y="308.0" font-size="11" text-anchor="middle" font-weight="normal" class="mono" fill="#fff" >0</text>
<text x="292.0" y="165.0" font-size="11" text-anchor="middle" font-weight="normal" class="mono" fill="#fff" >0</text>
<text x="335.0" y="165.0" font-size="11" text-anchor="middle" font-weight="normal" class="mono" fill="#fff" >0</text>
<text x="308.0" y="197.0" font-size="11" text-anchor="middle" font-weight="normal" class="mono" fill="#fff" >0</text>
<text x="358.0" y="217.0" font-size="11" text-anchor="middle" font-weight="normal" class="mono" fill="#fff" >0</text>
<text x="426.0" y="251.0" font-size="11" text-anchor="middle" font-weight="normal" class="mono" fill="#fff" >0</text>
<text x="862.0" y="400.0" font-size="11" text-anchor="middle" font-weight="normal" class="mono" fill="#fff" >0</text>
<text x="850.0" y="409.0" font-size="11" text-anchor="middle" font-weight="normal" class="mono" fill="#fff" >0</text>
<text x="805.0" y="386.0" font-size="11" text-anchor="middle" font-weight="normal" class="mono" fill="#fff" >0</text>
<text x="546.0" y="386.0" font-size="11" text-anchor="middle" font-weight="normal" class="mono" fill="#fff" >0</text>
<text x="266.0" y="361.0" font-size="11" text-anchor="middle" font-weight="normal" class="mono" fill="#fff" >0</text>
<text x="148.0" y="325.0" font-size="11" text-anchor="middle" font-weight="normal" class="mono" fill="#fff" >0</text>
<text x="181.0" y="361.0" font-size="11" text-anchor="middle" font-weight="normal" class="mono" fill="#fff" >0</text>
<text x="374.0" y="350.0" font-size="11" text-anchor="middle" font-weight="normal" class="mono" fill="#fff" >0</text>
<text x="393.0" y="365.0" font-size="11" text-anchor="middle" font-weight="normal" class="mono" fill="#fff" >0</text>
<text x="419.0" y="645.0" font-size="11" text-anchor="middle" font-weight="normal" class="mono" fill="#fff" >0</text>
<text x="407.0" y="688.0" font-size="11" text-anchor="middle" font-weight="normal" class="mono" fill="#fff" >0</text>
<text x="63.0" y="233.0" font-size="11" text-anchor="middle" font-weight="normal" class="mono" fill="#fff" >0</text>
<text x="105.0" y="227.0" font-size="11" text-anchor="middle" font-weight="normal" class="mono" fill="#fff" >0</text>
<text x="124.0" y="242.0" font-size="11" text-anchor="middle" font-weight="normal" class="mono" fill="#fff" >0</text>
<text x="160.0" y="249.0" font-size="11" text-anchor="middle" font-weight="normal" class="mono" fill="#fff" >0</text>
<text x="210.0" y="229.0" font-size="11" text-anchor="middle" font-weight="normal" class="mono" fill="#fff" >0</text>
<text x="225.0" y="213.0" font-size="11" text-anchor="middle" font-weight="normal" class="mono" fill="#fff" >0</text>
<text x="244.0" y="227.0" font-size="11" text-anchor="middle" font-weight="normal" class="mono" fill="#fff" >0</text>
<text x="283.0" y="264.0" font-size="11" text-anchor="middle" font-weight="normal" class="mono" fill="#fff" >0</text>
<text x="987.0" y="411.0" font-size="11" text-anchor="middle" font-weight="normal" class="mono" fill="#fff" >0</text>
<text x="1001.0" y="434.0" font-size="11" text-anchor="middle" font-weight="normal" class="mono" fill="#fff" >0</text>
<text x="951.0" y="472.0" font-size="11" text-anchor="middle" font-weight="normal" class="mono" fill="#fff" >0</text>
<text x="971.0" y="546.0" font-size="11" text-anchor="middle" font-weight="normal" class="mono" fill="#fff" >0</text>
<text x="972.0" y="583.0" font-size="11" text-anchor="middle" font-weight="normal" class="mono" fill="#fff" >0</text>
<text x="951.0" y="620.0" font-size="11" text-anchor="middle" font-weight="normal" class="mono" fill="#fff" >0</text>
<text x="959.0" y="657.0" font-size="11" text-anchor="middle" font-weight="normal" class="mono" fill="#fff" >0</text>
<text x="971.0" y="694.0" font-size="11" text-anchor="middle" font-weight="normal" class="mono" fill="#fff" >0</text>
<text x="971.0" y="768.0" font-size="11" text-anchor="middle" font-weight="normal" class="mono" fill="#fff" >0</text>
<text x="997.0" y="714.0" font-size="11" text-anchor="middle" font-weight="normal" class="mono" fill="#fff" >0</text>
<text x="1008.0" y="717.0" font-size="11" text-anchor="middle" font-weight="normal" class="mono" fill="#fff" >0</text>
<text x="1047.0" y="751.0" font-size="11" text-anchor="middle" font-weight="normal" class="mono" fill="#fff" >0</text>
<text x="1059.0" y="729.0" font-size="11" text-anchor="middle" font-weight="normal" class="mono" fill="#fff" >0</text>
<text x="1092.0" y="733.0" font-size="11" text-anchor="middle" font-weight="normal" class="mono" fill="#fff" >0</text>
<text x="1085.0" y="768.0" font-size="11" text-anchor="middle" font-weight="normal" class="mono" fill="#fff" >0</text>
<text x="1043.0" y="806.0" font-size="11" text-anchor="middle" font-weight="normal" class="mono" fill="#fff" >0</text>
<text x="1212.0" y="719.0" font-size="11" text-anchor="middle" font-weight="normal" class="mono" fill="#fff" >0</text>
<text x="1182.0" y="778.0" font-size="11" text-anchor="middle" font-weight="normal" class="mono" fill="#fff" >0</text>
<text x="1404.0" y="684.0" font-size="11" text-anchor="middle" font-weight="normal" class="mono" fill="#fff" >0</text>
<text x="539.0" y="853.0" font-size="11" text-anchor="middle" font-weight="normal" class="mono" fill="#fff" >0</text>
<text x="826.0" y="853.0" font-size="11" text-anchor="middle" font-weight="normal" class="mono" fill="#fff" >0</text>
<text x="1111.0" y="853.0" font-size="11" text-anchor="middle" font-weight="normal" class="mono" fill="#fff" >0</text>
<text x="964.0" y="865.0" font-size="11" text-anchor="middle" font-weight="normal" class="mono" fill="#fff" >0</text>
<text x="1252.0" y="865.0" font-size="11" text-anchor="middle" font-weight="normal" class="mono" fill="#fff" >0</text>
<text x="893.0" y="878.0" font-size="11" text-anchor="middle" font-weight="normal" class="mono" fill="#fff" >0</text>
<text x="901.0" y="779.0" font-size="11" text-anchor="middle" font-weight="normal" class="mono" fill="#fff" >0</text>
<text x="1268.0" y="769.0" font-size="11" text-anchor="middle" font-weight="normal" class="mono" fill="#fff" >0</text>
<text x="1283.0" y="783.0" font-size="11" text-anchor="middle" font-weight="normal" class="mono" fill="#fff" >0</text>
<text x="1262.0" y="806.0" font-size="11" text-anchor="middle" font-weight="normal" class="mono" fill="#fff" >0</text>
<text x="1242.0" y="842.0" font-size="11" text-anchor="middle" font-weight="normal" class="mono" fill="#fff" >0</text>
<text x="1283.0" y="850.0" font-size="11" text-anchor="middle" font-weight="normal" class="mono" fill="#fff" >0</text>
<text x="1270.0" y="807.0" font-size="11" text-anchor="middle" font-weight="normal" class="mono" fill="#fff" >0</text>
<text x="981.0" y="509.0" font-size="11" text-anchor="middle" font-weight="normal" class="mono" fill="#fff" >0</text>
<text x="893.0" y="473.0" font-size="11" text-anchor="middle" font-weight="normal" class="mono" fill="#fff" >0</text>
<text x="850.0" y="503.0" font-size="11" text-anchor="middle" font-weight="normal" class="mono" fill="#fff" >0</text>
<text x="850.0" y="576.0" font-size="11" text-anchor="middle" font-weight="normal" class="mono" fill="#fff" >0</text>
<text x="850.0" y="666.0" font-size="11" text-anchor="middle" font-weight="normal" class="mono" fill="#fff" >0</text>
<text x="850.0" y="731.0" font-size="11" text-anchor="middle" font-weight="normal" class="mono" fill="#fff" >0</text>
<text x="850.0" y="788.0" font-size="11" text-anchor="middle" font-weight="normal" class="mono" fill="#fff" >0</text>
<text x="850.0" y="860.0" font-size="11" text-anchor="middle" font-weight="normal" class="mono" fill="#fff" >0</text>
<text x="752.0" y="275.0" font-size="11" text-anchor="middle" font-weight="normal" class="mono" fill="#fff" >7</text>
<text x="875.0" y="262.0" font-size="11" text-anchor="middle" font-weight="normal" class="mono" fill="#fff" >7</text>
<text x="899.0" y="238.0" font-size="11" text-anchor="middle" font-weight="normal" class="mono" fill="#fff" >7</text>
<text x="899.0" y="322.0" font-size="11" text-anchor="middle" font-weight="normal" class="mono" fill="#fff" >7</text>
<text x="937.0" y="386.0" font-size="11" text-anchor="middle" font-weight="normal" class="mono" fill="#fff" >7</text>
<text x="849.0" y="188.0" font-size="11" text-anchor="middle" font-weight="normal" class="mono" fill="#fff" >1</text>
<text x="378.0" y="373.0" font-size="11" text-anchor="middle" font-weight="normal" class="mono" fill="#fff" >1</text>
<text x="392.0" y="361.0" font-size="11" text-anchor="middle" font-weight="normal" class="mono" fill="#fff" >1</text>
<path d="M502.3 419.2L505.7 421.7L509.2 419.2V426.2L505.7 428.7L502.3 426.2Z" fill="#2f8a34"/>
<path d="M502.3 507.9L505.7 510.4L509.2 507.9V514.9L505.7 517.4L502.3 514.9Z" fill="#2f8a34"/>
<path d="M538.0 543.0L541.5 539.6H550.0L547.5 543.0L550.0 546.5H541.5Z" fill="#2f8a34"/>
<path d="M626.6 543.0L630.1 539.6H638.6L636.1 543.0L638.6 546.5H630.1Z" fill="#2f8a34"/>
<path d="M715.0 543.0L718.5 539.6H727.0L724.5 543.0L727.0 546.5H718.5Z" fill="#2f8a34"/>
<path d="M804.0 543.0L807.5 539.6H816.0L813.5 543.0L816.0 546.5H807.5Z" fill="#2f8a34"/>
<path d="M551.5 427.9L555.0 430.4L558.4 427.9V434.9L555.0 437.4L551.5 434.9Z" fill="#2f8a34"/>
<path d="M551.5 518.1L555.0 520.6L558.4 518.1V525.1L555.0 527.6L551.5 525.1Z" fill="#2f8a34"/>
<path d="M551.5 608.5L555.0 611.0L558.4 608.5V615.5L555.0 618.0L551.5 615.5Z" fill="#2f8a34"/>
<path d="M551.5 698.8L555.0 701.3L558.4 698.8V705.8L555.0 708.3L551.5 705.8Z" fill="#2f8a34"/>
<path d="M551.5 789.2L555.0 791.7L558.4 789.2V796.2L555.0 798.7L551.5 796.2Z" fill="#2f8a34"/>
<path d="M551.5 879.5L555.0 882.0L558.4 879.5V886.5L555.0 889.0L551.5 886.5Z" fill="#2f8a34"/>
<path d="M475.7 912.3L479.2 908.9H487.7L485.2 912.3L487.7 915.8H479.2Z" fill="#2f8a34"/>
<path d="M398.0 912.3L401.5 908.9H410.0L407.5 912.3L410.0 915.8H401.5Z" fill="#2f8a34"/>
<rect x="514.6" y="328.2" width="6.9" height="11.1" fill="#2f8a34"/>
<rect x="613.0" y="328.2" width="6.9" height="11.1" fill="#2f8a34"/>
<rect x="625.4" y="328.2" width="6.9" height="11.1" fill="#2f8a34"/>
<rect x="637.7" y="328.2" width="6.9" height="11.1" fill="#2f8a34"/>
<path d="M793.15 427.94L801.15 419.94" stroke="#2f8a34" stroke-width="6.9" fill="none"/>
<rect x="822.3" y="439.6" width="6.9" height="9.8" fill="#2f8a34"/>
<path d="M834.5 456.9L838.0 453.4H846.5L844.0 456.9L846.5 460.3H838.0Z" fill="#2f8a34"/>
<circle cx="813.46" cy="419.94" r="2.7" fill="#2f8a34"/>
<circle cx="924.25" cy="419.94" r="2.7" fill="#2f8a34"/>
<circle cx="825.77" cy="432.25" r="2.7" fill="#2f8a34"/>
<circle cx="862.7" cy="456.87" r="2.7" fill="#2f8a34"/>
<circle cx="862.7" cy="543.04" r="2.7" fill="#2f8a34"/>
<circle cx="518.02" cy="321.46" r="2.7" fill="#2f8a34"/>
<circle cx="518.02" cy="346.08" r="2.7" fill="#2f8a34"/>
<circle cx="616.5" cy="321.46" r="2.7" fill="#2f8a34"/>
<circle cx="616.5" cy="346.08" r="2.7" fill="#2f8a34"/>
<circle cx="628.81" cy="321.46" r="2.7" fill="#2f8a34"/>
<circle cx="628.81" cy="346.08" r="2.7" fill="#2f8a34"/>
<circle cx="641.12" cy="321.46" r="2.7" fill="#2f8a34"/>
<circle cx="641.12" cy="346.08" r="2.7" fill="#2f8a34"/>
</svg>
<div id="tip">LT click to move wire head</div>
</body></html>
